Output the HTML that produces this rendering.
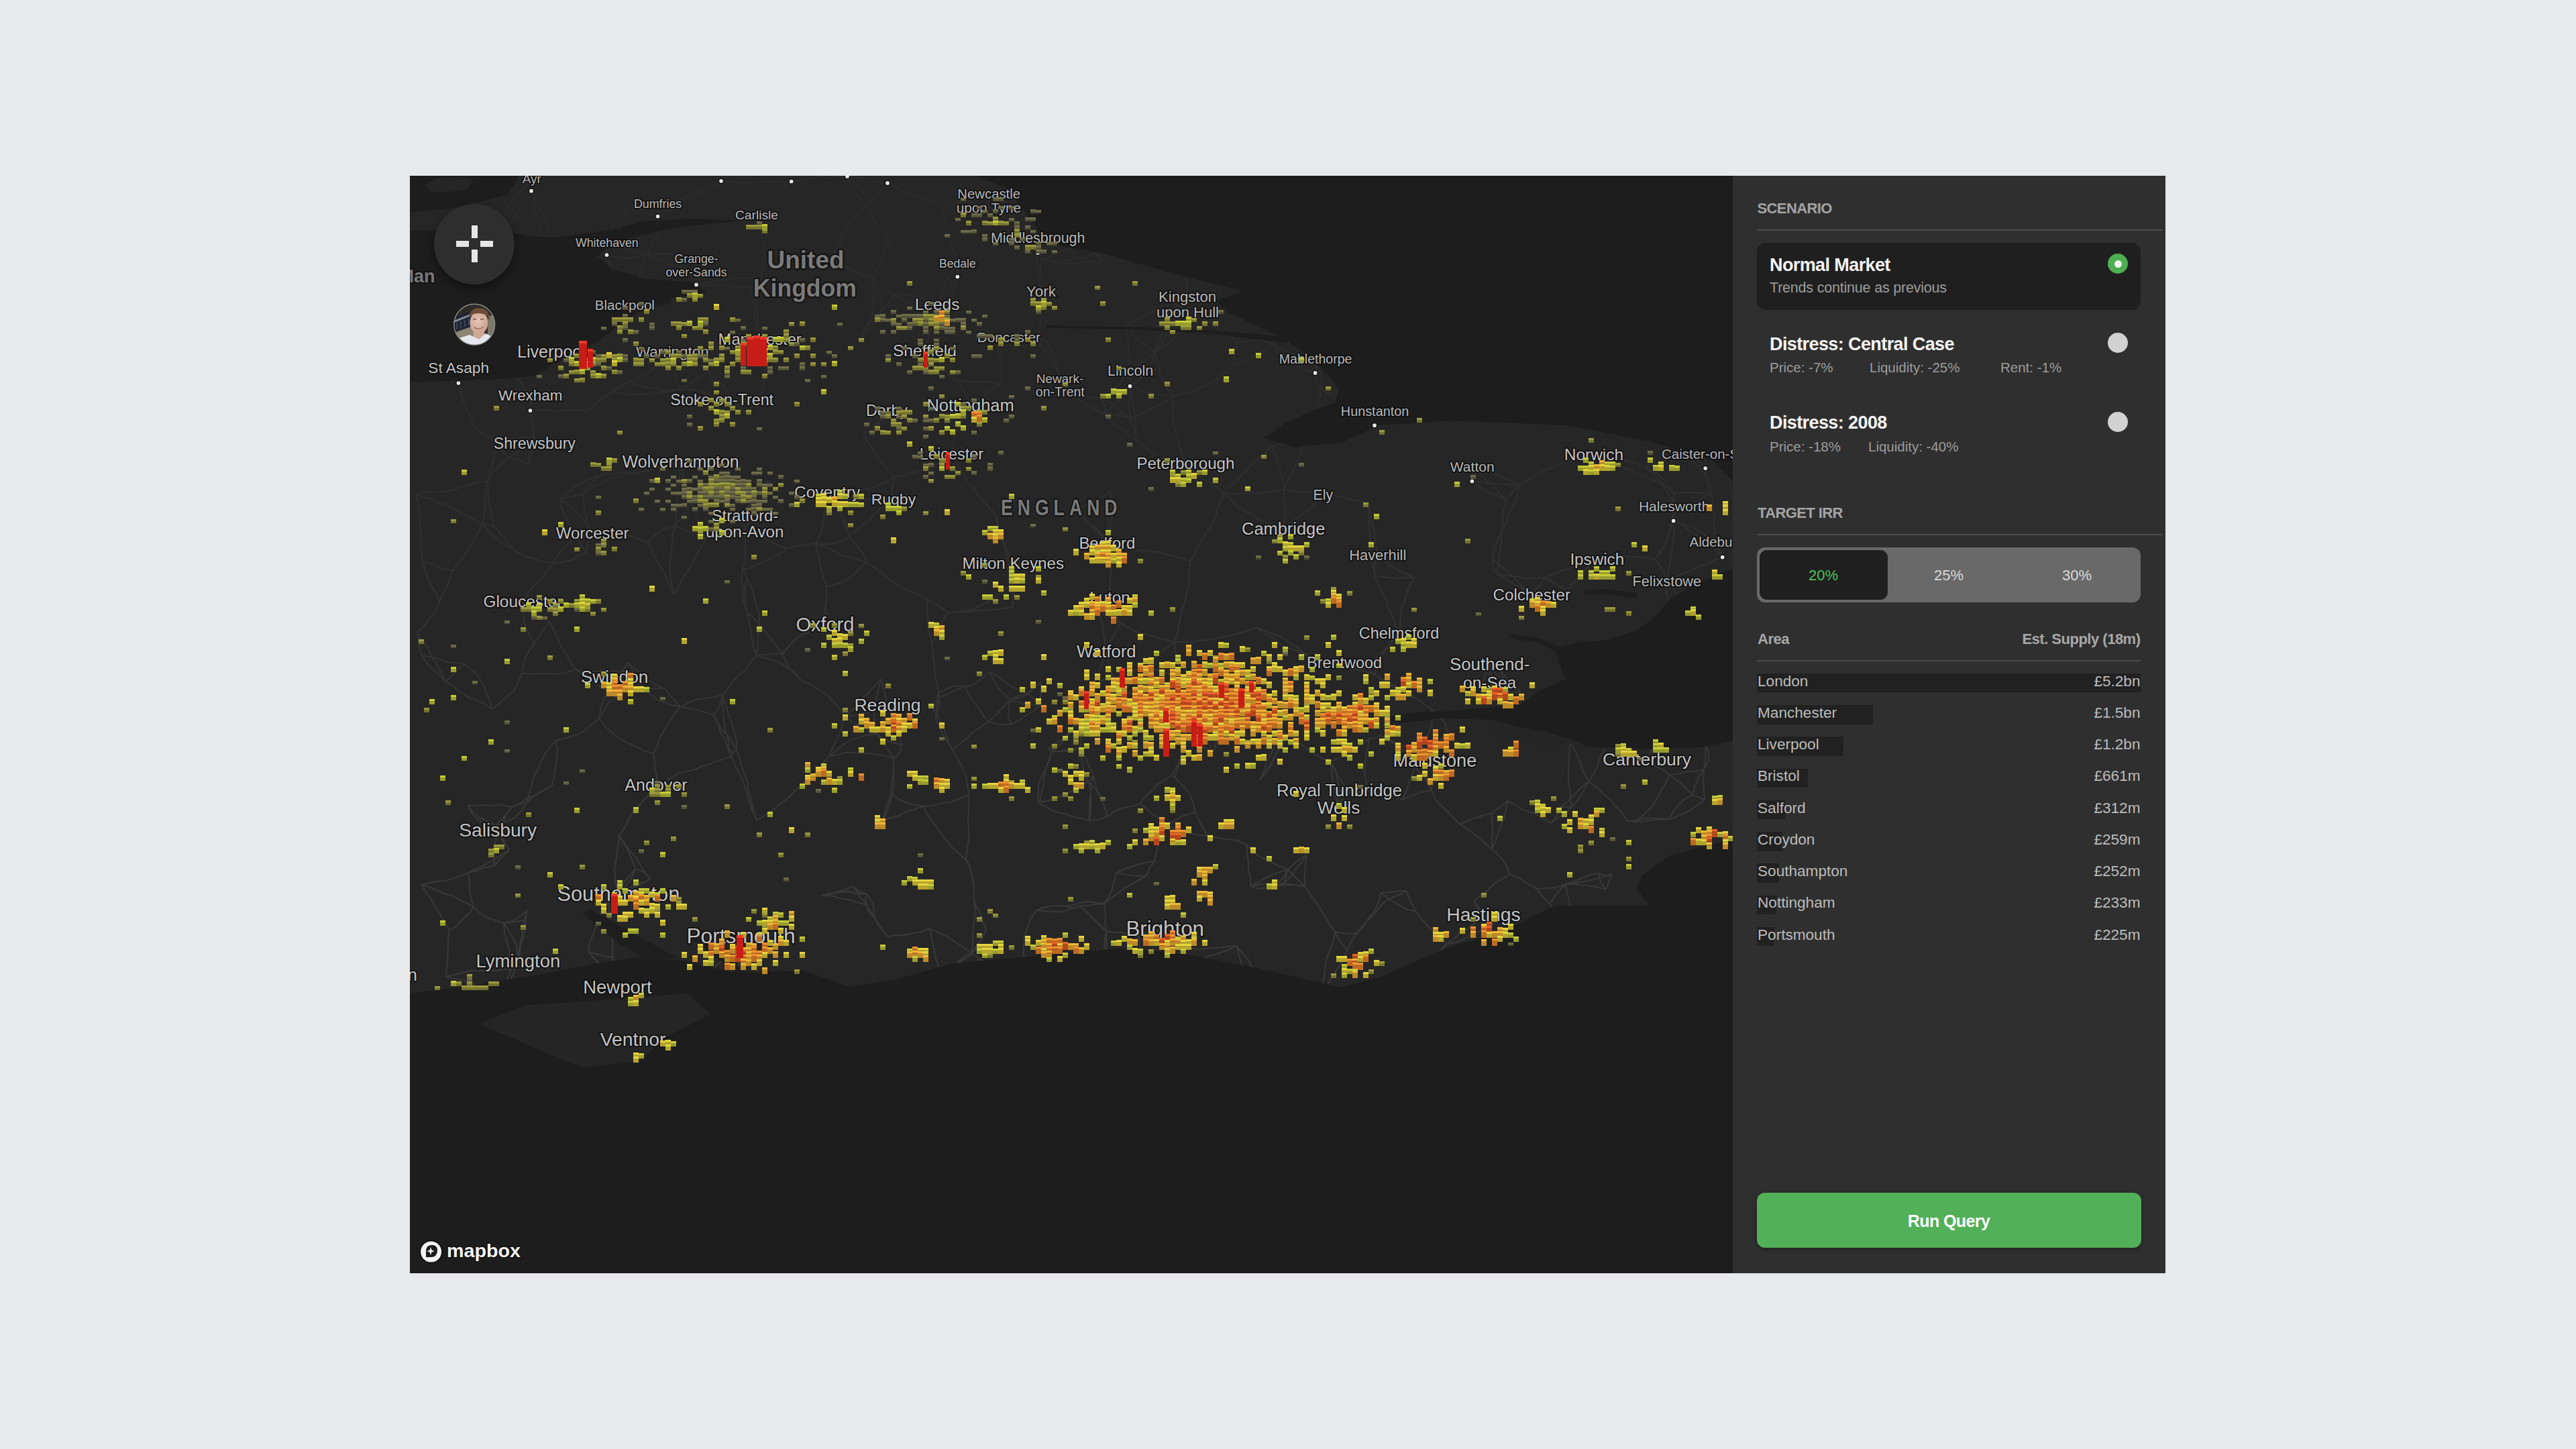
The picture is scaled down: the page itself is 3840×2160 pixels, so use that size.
<!DOCTYPE html>
<html><head><meta charset="utf-8"><title>Scenario map</title><style>
html,body{margin:0;padding:0;}
body{width:3840px;height:2160px;background:#e8e9eb;position:relative;overflow:hidden;font-family:"Liberation Sans",sans-serif;}
.t{position:absolute;white-space:nowrap;}
</style></head><body>
<svg width="3840" height="2160" style="position:absolute;left:0;top:0" font-family="Liberation Sans, sans-serif"><defs><clipPath id="mc"><rect x="611" y="262" width="1972" height="1636"/></clipPath></defs><g clip-path="url(#mc)"><rect x="611" y="262" width="1972" height="1636" fill="#262626"/><linearGradient id="rg" gradientUnits="userSpaceOnUse" x1="0" y1="300" x2="0" y2="1250"><stop offset="0" stop-color="#2a2a2a"/><stop offset="0.45" stop-color="#2e2e2e"/><stop offset="1" stop-color="#383838"/></linearGradient><path d="M793 265L794 275L792 285M793 265L785 274L777 284L768 293L760 302L755 314L750 325L745 336L738 346L733 357L727 368L723 380M793 265L794 278L796 291L796 304L799 317L803 329L807 341L812 353L818 364L823 376M981 302L981 312L981 323M981 302L993 301L1006 300L1018 296L1029 291L1041 286L1053 283L1064 277L1075 270M981 302L966 306L952 309L937 309M981 302L989 310L1000 314M1128 319L1118 312L1110 304L1101 295L1093 286L1084 278L1075 270M1128 319L1137 308L1147 298L1158 289L1168 279L1180 270M1128 319L1130 331L1133 344L1136 356L1139 368L1139 380L1138 393L1135 405L1134 418M905 360L901 370L904 380M905 360L911 345L916 332L926 320L937 309M905 360L916 365L928 368L940 372L952 376L964 380M1038 384L1036 394L1038 404M1038 384L1036 398L1037 411L1038 424M1038 384L1026 382L1014 380L1001 379L989 378L976 379L964 380M1038 404L1040 414L1038 424M1038 404L1025 401L1013 398L1000 395L988 391L976 385L964 380M931 454L926 442L923 429L919 417L916 404L909 392L904 380M931 454L920 463L911 474M931 454L940 443L945 431L950 418L954 405L959 392L964 380M822 525L809 527L796 529L785 535L774 541L765 551M822 525L820 511L819 498L820 484L817 471L816 457M822 525L809 529L797 535L785 540L773 546L760 550M1133 506L1130 493L1129 480L1130 468L1128 455L1128 443L1130 430L1134 418M1133 506L1131 493L1128 480L1124 467L1124 454L1121 441L1118 428M1133 506L1137 519L1140 532L1141 546L1140 560L1139 573L1135 587M1002 524L993 533L983 542L973 550L963 558L951 563L939 569M1002 524L1014 529L1025 534L1036 539L1046 546L1056 552M1002 524L1003 539L1006 553L1008 567L1014 581M684 548L687 559L683 571M684 548L684 560L685 573L688 585L690 597L695 609L702 620M684 548L670 546L658 543L646 538L634 531L622 525M791 589L791 600L790 612M791 589L781 577L772 565L765 551M791 589L782 580L776 569L767 561L760 550M1076 596L1087 603L1098 610L1111 614M1076 596L1066 582L1062 567L1056 552M1076 596L1064 590L1052 587L1040 582L1027 581L1014 581M1076 596L1091 596L1106 597L1121 592L1135 587M797 661L796 649L794 636L794 624L790 612M797 661L783 667L770 675L757 682M797 661L783 661L769 662L756 663L742 661M797 661L793 676L788 692M797 661L795 657L795 652M1015 689L1001 691L989 696L975 698L963 702L949 705M1015 689L1018 703L1020 718L1025 732L1029 746M1015 689L1014 702L1013 716L1011 730L1010 743L1009 757L1008 770L1006 784M1474 288L1474 298L1474 309M1474 288L1486 293L1497 300L1508 306L1520 312L1530 320M1474 288L1483 296L1493 303L1500 313L1507 323M1474 288L1463 293L1452 297L1440 302L1428 303L1416 305L1404 304M1474 309L1487 314L1501 318L1516 318L1530 320M1474 309L1491 316L1507 323M1474 309L1460 306L1446 302L1432 299L1418 300L1404 304M1547 354L1547 365L1547 377M1547 354L1544 342L1539 329L1530 320M1547 354L1549 371L1552 387M1427 391L1419 403L1413 415L1407 428L1401 441L1397 454M1427 391L1427 402L1427 413M1427 391L1423 379L1418 367L1414 355L1412 342L1408 329L1405 317L1404 304M1552 434L1550 419L1547 405L1546 391L1547 377M1552 434L1552 446L1552 458L1550 471L1551 483L1549 495L1547 508M1552 434L1550 418L1551 403L1552 387M1397 454L1393 468L1389 482L1386 495L1381 509L1378 523M1397 454L1404 443L1412 433L1419 422L1427 413M1397 454L1393 471L1391 488M1397 454L1385 448L1372 444L1360 440L1346 439L1333 439M1770 442L1770 454L1770 465M1770 442L1766 453L1762 465L1756 476L1749 485L1742 495L1735 505L1729 515L1721 524M1770 442L1763 450L1752 453M1770 442L1769 428L1768 415L1768 402L1770 389L1770 375L1771 362L1774 349L1778 336M1770 465L1765 478L1759 490L1753 501L1744 510L1733 518L1721 524M1770 465L1762 458L1752 453M1770 465L1782 470L1793 476L1805 481L1814 489L1825 495L1835 502L1844 511M1504 502L1519 501L1533 503L1548 506L1562 508M1504 502L1494 504L1484 504M1504 502L1519 501L1533 503L1547 508M1378 523L1388 531L1398 540L1407 550L1416 559L1426 568M1378 523L1383 511L1385 499L1391 488M1961 534L1961 545L1961 556M1961 534L1967 549L1969 565L1970 581M1961 534L1948 533L1935 528L1922 526L1910 521L1898 514M1961 534L1969 523L1977 512L1986 501L1992 489L1998 477M1961 534L1953 523L1943 513L1937 501L1931 489L1925 477L1918 465M1685 552L1685 564L1684 576M1685 552L1698 544L1710 535L1721 524M1685 552L1677 561L1670 571L1661 579L1652 587L1641 593M1685 552L1683 539L1683 525L1682 512L1681 498L1678 485M1580 563L1581 573L1580 583M1580 563L1576 549L1572 535L1566 522L1562 508M1580 563L1575 551L1568 540L1563 528L1554 518L1547 508M1580 583L1592 587L1603 592L1613 599L1624 606L1635 611L1646 617M1580 583L1592 587L1604 589L1616 592L1628 593L1641 593M1447 605L1440 616L1433 627L1428 639L1423 651L1420 664L1418 677M1447 605L1441 592L1435 579L1426 568M1447 605L1458 597L1468 588L1479 581L1491 574M1322 612L1314 622L1307 632L1298 641L1287 647M1322 612L1319 619L1317 626M1322 612L1311 616L1300 616M1418 677L1408 686L1396 692L1385 697L1372 701L1359 705L1347 709L1334 711M1418 677L1425 687L1431 697L1437 708L1443 719L1452 727L1458 738L1465 747L1474 756L1483 765M1767 691L1754 689L1740 686L1727 682L1716 674L1705 665L1694 657M1767 691L1778 701L1788 711L1800 718L1812 725L1824 734M1767 691L1763 679L1759 667L1755 655L1752 642L1749 630L1748 617L1749 604L1751 590M2050 612L2049 623L2049 634M2050 612L2042 613L2035 618M2050 612L2038 607L2027 601L2015 599L2004 595L1992 590L1981 585L1970 581M2376 678L2387 683L2399 688L2410 691L2421 698L2433 701L2443 708L2455 712L2466 716L2477 722L2487 729L2497 736M2376 678L2363 681L2350 684L2337 688L2324 691L2312 697L2300 702L2289 709L2277 715L2266 723M2376 678L2389 681L2402 682L2415 684L2427 688L2440 691L2452 696M2517 676L2531 686L2542 698M2517 676L2522 664L2528 653L2533 642M2517 676L2524 687L2532 697L2541 706M2517 676L2504 681L2491 684L2478 689L2465 692L2452 696M2195 695L2197 706L2194 717M2195 695L2205 705L2215 715L2226 724L2235 735L2245 745M2195 695L2207 698L2220 702L2231 708L2243 713L2255 718L2266 723M1972 737L1963 747L1955 757L1944 765L1934 772L1923 780L1913 789M1972 737L1986 738L2000 741L2014 745L2028 747L2041 753M1972 737L1958 734L1943 733L1928 732L1914 729M2496 754L2495 765L2495 776M2496 754L2496 745L2497 736M2496 754L2494 766L2492 778L2489 790L2486 802L2481 813L2474 824L2467 834M2496 754L2491 742L2484 732L2479 721L2470 713L2461 704L2452 696M2496 754L2511 753L2525 750L2538 743L2550 735M1913 789L1901 783L1888 779L1876 774L1865 767L1853 761L1843 753L1833 743L1824 734M1913 789L1914 777L1916 765L1916 753L1914 741L1914 729M2559 807L2546 800L2534 793L2522 785L2508 781L2495 776M2559 807L2562 819L2568 831M2559 807L2556 795L2555 783L2555 770L2554 758L2553 746L2550 735M2054 827L2049 843L2050 859M2054 827L2052 815L2050 803L2048 790L2045 778L2043 765L2041 753M2054 827L2064 836L2074 844L2085 850L2097 856L2109 861M2381 834L2368 838L2355 843L2342 847L2328 850L2316 856L2303 861M2381 834L2371 842L2361 852L2352 862L2343 871L2336 882M2381 834L2393 831L2405 828L2418 828L2430 830L2442 830L2454 831L2467 834M2485 866L2487 853L2489 840L2491 828L2493 815L2495 802L2495 789L2495 776M2485 866L2497 861L2508 855L2520 851L2532 845L2544 841L2556 835L2568 831M2485 866L2484 878L2486 891L2488 903L2489 916L2492 928M2485 866L2493 876L2500 886L2506 897L2512 908L2517 919L2521 931L2523 944L2524 956M2485 866L2481 854L2474 844L2467 834M2283 887L2294 874L2303 861M2283 887L2296 883L2309 882L2323 883L2336 882M2283 887L2273 880L2263 874L2252 868L2242 861L2231 856M2283 887L2273 878L2264 869L2255 859L2245 850L2235 842L2225 833M2086 944L2080 932L2076 919L2070 907L2067 895L2060 883L2055 871L2050 859M2086 944L2087 932L2088 919L2089 907L2094 895L2097 883L2102 872L2109 861M2086 944L2077 954L2069 964L2060 973L2050 982L2041 992L2031 1000M2086 944L2075 954L2068 966L2059 978L2053 990L2049 1005M2004 988L1991 987L1979 984L1966 984L1954 985M2004 988L1986 990L1969 983M2004 988L2016 996L2031 1000M2004 988L2016 990L2028 992L2039 997L2049 1005M2221 991L2220 1005L2221 1018M2221 991L2224 991L2225 989M2221 991L2214 1007L2207 1023M2221 991L2230 1005L2243 1015M2221 1018L2232 1024L2243 1029L2255 1032L2267 1032M2221 1018L2223 1004L2225 989M2221 1018L2214 1020L2207 1023M2221 1018L2232 1017L2243 1015M2139 1135L2130 1124L2119 1116M2139 1135L2131 1140L2122 1141M2139 1135L2124 1141L2109 1143M2139 1135L2143 1120L2148 1105L2158 1093M2139 1135L2137 1150L2135 1164L2134 1178M2455 1133L2461 1121L2468 1110L2472 1098L2477 1086L2481 1073L2483 1060M2455 1133L2444 1125L2433 1118L2423 1110L2410 1106L2398 1102M2455 1133L2466 1141L2478 1147L2489 1155M1997 1179L1995 1192L1996 1205M1997 1179L1994 1164L1991 1148L1983 1135M1997 1179L2001 1176L2005 1172M1997 1179L2011 1179L2025 1180L2039 1179M1997 1179L1994 1182L1991 1185M1996 1205L2002 1189L2005 1172M1996 1205L1993 1195L1991 1185M2212 1365L2219 1371L2226 1378M2212 1365L2201 1374L2190 1383L2178 1390L2168 1399L2157 1407M2212 1365L2205 1354L2197 1344M1737 1387L1724 1390L1710 1393L1697 1395M1737 1387L1743 1398L1752 1408L1763 1414M1737 1387L1730 1387L1724 1386M883 795L873 798L863 801M883 795L877 808L874 823M883 795L897 794L911 797L925 798L939 799L952 803L965 809M883 795L877 784L874 772L871 760L870 748L869 736M883 795L876 783L867 772L858 762L847 753L835 745M1110 769L1109 781L1110 793M1110 769L1119 759L1127 749L1135 738L1143 728L1150 717M1110 769L1115 757L1119 744L1127 735L1136 726L1145 716M1110 769L1116 758L1121 747M1110 793L1095 793L1080 795L1066 799L1052 804M1110 793L1111 807L1111 821L1110 835L1107 849M1110 793L1116 778L1118 762L1121 747M1110 793L1123 797L1136 801L1148 807L1160 813L1173 818M1233 734L1244 736L1255 736M1233 734L1242 743L1248 754L1253 766L1257 778L1262 789L1266 801M1233 734L1232 747L1229 759L1228 772L1226 785L1222 798L1216 810M1332 744L1319 745L1306 747L1293 744L1280 744L1267 740L1255 736M1332 744L1329 727L1334 711M1332 744L1322 751L1312 758L1303 767L1294 777L1284 784L1275 792L1266 801M1650 810L1654 797L1655 784L1657 771L1658 758L1657 745L1655 732M1650 810L1652 812L1653 815M1650 810L1643 797L1633 787L1621 779L1612 769L1600 760M1510 840L1510 855L1508 870M1510 840L1505 828L1499 816L1495 803L1491 790L1485 778L1483 765M1510 840L1511 853L1511 866L1510 879L1511 892L1509 905M1654 891L1659 904L1663 917L1670 929M1654 891L1642 898L1631 905M1654 891L1654 878L1655 866L1656 853L1655 840L1653 827L1653 815M1649 972L1655 957L1663 943L1670 929M1649 972L1647 958L1645 944L1643 930L1638 917L1631 905M1649 972L1645 984L1640 997L1634 1010L1631 1023M1649 972L1652 984L1655 997L1659 1010M780 897L787 907L797 915L809 920L819 927M780 897L786 886L793 876L802 867L810 859L817 848L825 839M780 897L780 910L781 924L784 936L790 948L796 960M1230 933L1218 937L1206 942L1194 947L1184 955L1175 965L1166 974M1230 933L1232 918L1231 904L1232 889L1232 875M1230 933L1228 927L1227 921M916 1010L916 1025L918 1040M916 1010L901 1008L887 1006L873 1002L858 998M916 1010L927 1000L936 988M916 1010L923 1006L929 1001M916 1010L910 1022L905 1034L899 1045L895 1058L893 1071M1323 1052L1327 1063L1331 1075L1336 1086L1341 1098L1344 1110M1323 1052L1319 1066L1314 1080L1307 1094M1323 1052L1320 1039L1317 1025L1313 1012M1323 1052L1311 1058L1298 1060L1285 1064L1272 1067L1259 1067M978 1171L979 1159L977 1147L976 1135L974 1123M978 1171L989 1166L1000 1160L1010 1153L1022 1150L1034 1148L1045 1143L1057 1139L1068 1135L1080 1131L1091 1128M978 1171L970 1182L961 1191L952 1201L943 1211L937 1222L931 1234L923 1245M742 1239L729 1232L716 1224L705 1215L697 1201M742 1239L742 1234L739 1231M742 1239L739 1252L736 1265L737 1278L736 1291M742 1239L749 1227L755 1214L763 1203M742 1239L749 1253L759 1267M922 1335L931 1322L941 1310L947 1295M922 1335L934 1330L946 1323L958 1316L970 1310M922 1335L913 1337L907 1344M922 1335L919 1322L917 1309L916 1296L918 1283L920 1270L922 1257L923 1245M1104 1398L1097 1409L1089 1420L1080 1430L1069 1438L1061 1449L1050 1457M1104 1398L1111 1409L1116 1420L1121 1431L1127 1442L1132 1454L1136 1466M1104 1398L1103 1412L1102 1426L1101 1441L1101 1455L1099 1469M772 1434L767 1447L761 1461L755 1475L746 1487M772 1434L768 1440L762 1445M772 1434L775 1421L776 1408L781 1396L782 1383L784 1371M772 1434L771 1421L770 1408L764 1398L758 1387L751 1376M772 1434L773 1421L775 1408L778 1395L779 1382L782 1370L786 1357M920 1473L922 1487L924 1500L929 1513L934 1526L939 1538L944 1551M920 1473L913 1461L904 1451L896 1439L886 1429L877 1419M920 1473L916 1458L913 1443L913 1427M944 1551L955 1544L965 1536L976 1529L985 1520L997 1514L1005 1504L1016 1497L1024 1486L1034 1478L1042 1468L1050 1457M944 1551L939 1539L933 1527L928 1515L923 1503L920 1491L919 1478L919 1465L917 1452L914 1440L913 1427M792 285L785 296L779 307L771 318L764 329L755 339L749 350L740 360L732 370L723 380M792 285L799 295L804 306L809 317L814 328L818 340L819 352L822 364L823 376M981 323L966 319L951 316L937 309M981 323L991 320L1000 314M981 323L980 338L978 353L972 366L964 380M904 380L909 368L914 356L920 344L926 333L932 321L937 309M904 380L891 379L877 380L864 379L850 378L837 377L823 376M904 380L908 393L911 407L912 420L911 434L912 447L913 461L911 474M904 380L919 383L934 385L949 383L964 380M1038 424L1052 422L1065 419L1079 416L1092 415L1106 415L1120 415L1134 418M1038 424L1051 425L1065 426L1078 425L1091 427L1104 428L1118 428M683 571L686 584L690 597L695 609L702 620M683 571L674 563L665 554L656 544L645 537L634 531L622 525M790 612L803 612L815 611L827 613L840 612L852 611L864 611L877 613M790 612L792 625L796 638L795 652M1427 413L1424 424L1421 436L1418 448L1412 459L1406 469L1399 479L1391 488M1547 377L1551 381L1552 387M1961 556L1963 569L1970 581M1961 556L1948 552L1937 547L1926 540L1916 533L1906 525L1898 514M1961 556L1965 544L1970 533L1976 522L1980 510L1986 499L1993 488L1998 477M1684 576L1688 589L1688 603L1691 616L1693 629L1693 643L1694 657M1684 576L1685 588L1683 600L1683 612L1685 624M1684 576L1676 587L1668 598L1657 608L1646 617M1684 576L1695 568L1705 559L1713 550L1718 538L1721 524M1684 576L1671 584L1656 588L1641 593M1684 576L1697 581L1711 585L1724 588L1738 590L1751 590M2049 634L2041 627L2035 618M2049 634L2037 627L2025 621L2013 615L2003 605L1992 596L1981 588L1970 581M2542 698L2542 684L2542 669L2539 655L2533 642M2542 698L2542 702L2541 706M2542 698L2545 710L2549 722L2550 735M2194 717L2206 726L2218 734L2232 739L2245 745M2194 717L2206 718L2218 721L2230 721L2242 721L2254 723L2266 723M2495 776L2507 782L2517 790L2528 797L2539 804L2549 812L2559 821L2568 831M2495 776L2492 763L2492 749L2497 736M2495 776L2490 789L2486 801L2481 813L2475 824L2467 834M1075 270L1088 271L1101 272L1114 272L1127 273L1140 271L1154 272L1167 271L1180 270M1075 270L1064 276L1053 282L1043 289L1032 296L1022 303L1011 309L1000 314M1180 270L1194 269L1207 265L1221 263L1235 264L1249 263L1263 263M1323 273L1311 271L1299 269L1287 265L1275 265L1263 263M1323 273L1314 282L1305 293L1295 301M1323 273L1334 279L1345 284L1357 288L1368 293L1379 298L1392 301L1404 304M1323 273L1312 284L1301 295L1291 307M1263 263L1273 271L1282 280L1289 290L1295 301M1263 263L1268 275L1274 287L1282 298L1291 307M1255 736L1269 734L1282 732L1296 728L1309 724L1322 718L1334 711M1255 736L1255 749L1255 762L1260 775L1262 788L1266 801M1896 665L1908 662L1921 659L1934 655L1945 649M1896 665L1887 674L1877 682L1868 690L1859 699L1851 708L1842 717L1833 725L1824 734M1896 665L1901 677L1905 690L1909 703L1912 715L1914 729M1670 929L1681 935L1692 941L1704 945L1716 948L1727 951L1739 954L1751 957M1670 929L1657 920L1643 914L1631 905M734 1057L729 1044L725 1032L720 1020L713 1008L703 999L693 990M734 1057L722 1049L710 1044L697 1039L686 1031L675 1023L664 1016M734 1057L745 1048L755 1039L766 1030L772 1018L778 1004M693 990L683 998L674 1007L664 1016M693 990L680 988L667 987L654 982L641 979L628 977M757 682L748 672L742 661M757 682L773 686L788 692M757 682L746 693L735 704L727 717M1452 1344L1452 1331L1451 1318L1449 1306L1446 1293L1440 1281M1452 1344L1459 1357L1464 1371L1470 1385M1452 1344L1454 1357L1453 1370L1451 1382L1450 1395L1450 1408L1448 1420M863 801L866 813L874 823M863 801L851 808L840 816L832 827L825 839M863 801L855 791L848 780L843 769L837 758L835 745M1850 1453L1861 1462L1870 1472L1880 1482L1888 1494M1850 1453L1851 1438L1847 1424L1843 1410M1850 1453L1837 1450L1823 1448L1810 1444L1797 1443L1784 1440L1771 1436M1751 957L1764 957L1776 957L1788 955L1801 954L1813 952L1825 949L1837 947L1849 943L1861 940L1872 935M1751 957L1752 970L1755 984L1757 997L1757 1011M1751 957L1755 945L1757 933L1759 921L1762 909L1766 897L1769 885L1772 874L1772 861L1773 849L1775 836M1751 957L1739 966L1727 975L1716 985L1706 996M2533 642L2538 654L2542 667L2542 680L2542 693L2541 706M2303 861L2314 867L2326 874L2336 882M2303 861L2288 862L2274 862L2260 859L2245 858L2231 856M903 706L918 706L934 704L949 705M903 706L889 713L878 724L869 736M903 706L890 710L878 715L866 721L854 727L844 736L835 745M1225 1335L1237 1333L1249 1329L1261 1326L1272 1321M1225 1335L1239 1335L1252 1339L1265 1341L1278 1345L1292 1349M1225 1335L1238 1332L1252 1330L1265 1329L1279 1332L1293 1333M974 1123L980 1111L984 1099L991 1087L998 1076L1005 1065L1014 1054M974 1123L962 1120L951 1114L940 1109L929 1104L919 1098L910 1090L901 1081L893 1071M1872 935L1885 940L1898 945L1911 950L1922 958L1934 965L1944 974L1954 985M1872 935L1884 943L1895 950L1906 958L1918 965L1931 969L1943 974L1956 979L1969 983M1694 657L1690 640L1685 624M1694 657L1684 649L1674 641L1664 635L1654 626L1646 617M737 785L746 795L755 805L762 817M737 785L728 782L719 782M737 785L733 772L731 758L728 745L728 731L727 717M1954 985L1961 983L1969 983M1954 985L1967 987L1979 991L1992 993L2005 996L2018 998L2031 1000M1236 1127L1228 1136L1220 1146L1212 1155L1203 1163L1195 1171L1185 1179L1177 1188L1167 1195L1158 1203L1148 1210L1138 1217L1128 1223M1236 1127L1246 1119L1257 1110L1268 1103L1281 1099L1293 1096L1307 1094M1236 1127L1241 1115L1247 1103L1252 1092L1256 1079L1259 1067M1236 1127L1248 1125L1260 1122L1272 1122L1284 1123L1296 1123L1309 1125L1321 1127L1333 1130M1508 870L1506 858L1505 846L1502 834L1500 822L1496 811L1492 800L1490 788L1487 776L1483 765M1508 870L1510 887L1509 905M1508 870L1498 879L1487 887L1477 895L1465 901L1453 907L1441 910L1427 912L1413 913M2177 1229L2189 1237L2201 1246L2213 1256L2224 1266M2177 1229L2188 1223L2200 1219L2212 1215L2224 1212M2177 1229L2167 1220L2158 1210L2148 1201L2139 1191L2134 1178M1098 1117L1098 1103L1094 1089L1090 1076L1085 1063L1082 1050L1077 1036M1098 1117L1091 1107L1085 1097L1076 1088L1070 1077L1064 1066M1098 1117L1102 1129L1105 1141L1109 1152L1114 1164L1115 1176L1119 1188L1121 1200L1124 1212L1128 1223M1098 1117L1093 1121L1091 1128M1649 1388L1661 1390L1673 1390L1685 1393L1697 1395M1649 1388L1650 1401L1649 1414L1652 1427L1652 1440M1649 1388L1639 1378L1630 1369L1620 1359L1609 1351M1649 1388L1647 1374L1648 1361L1646 1347M1649 1388L1647 1399L1646 1412L1647 1424L1645 1436L1642 1447M2050 859L2047 846L2045 833L2042 820L2042 806L2042 793L2041 780L2040 766L2041 753M2050 859L2064 860L2079 862L2094 861L2109 861M2541 706L2545 721L2550 735M1440 1281L1430 1273L1420 1264L1412 1254L1404 1244L1397 1234L1389 1224L1382 1213L1376 1202M1440 1281L1441 1269L1443 1257L1445 1245L1444 1233L1443 1221L1444 1209L1444 1197L1445 1185M918 1040L930 1032L943 1027L958 1026M918 1040L909 1032L898 1026L888 1019L878 1012L868 1005L858 998M918 1040L918 1026L920 1013L929 1001M918 1040L907 1048L900 1060L893 1071M697 1201L706 1211L716 1219L728 1225L739 1231M697 1201L710 1201L723 1200L737 1201L750 1200L763 1203M2119 1116L2124 1105L2129 1093L2134 1082L2135 1070L2134 1057M2119 1116L2106 1114L2092 1112L2080 1110L2068 1103L2057 1096M2119 1116L2120 1129L2122 1141M2119 1116L2114 1130L2109 1143M2119 1116L2133 1111L2146 1103L2158 1093M1983 1135L1996 1130L2009 1126L2020 1118L2030 1109L2041 1101M1983 1135L1989 1148L1997 1160L2005 1172M1983 1135L1985 1148L1986 1160L1989 1173L1991 1185M1983 1135L1971 1131L1960 1125L1951 1118L1941 1111L1931 1103L1921 1096M1757 1011L1745 1005L1732 1000L1719 998L1706 996M1757 1011L1747 1018L1738 1026L1727 1032L1716 1038L1705 1043M2266 1450L2271 1465L2278 1479L2284 1494M2266 1450L2257 1460L2247 1470L2235 1476L2224 1483L2211 1486M2266 1450L2278 1456L2289 1462L2301 1465L2313 1467L2325 1469L2338 1470L2350 1471M2266 1450L2253 1457L2239 1464L2225 1469M1549 1198L1561 1204L1573 1210L1586 1213L1598 1217L1611 1220L1624 1223M1549 1198L1552 1185L1555 1172L1556 1159L1559 1146L1564 1134L1568 1121M1549 1198L1549 1195L1547 1196M739 1231L753 1225L767 1219L778 1208L786 1195M739 1231L747 1222L756 1213L763 1203M739 1231L746 1243L752 1255L759 1267M1888 1494L1885 1480L1880 1467L1874 1455L1867 1444L1861 1431L1852 1421L1843 1410M1888 1494L1901 1491L1915 1488L1928 1484L1941 1484L1954 1483L1968 1484M2231 856L2233 843L2235 830L2237 817L2238 803L2239 790M2231 856L2225 845L2225 833M1376 1202L1391 1201L1404 1197L1418 1196L1431 1190L1445 1185M1376 1202L1364 1200L1352 1197L1341 1192L1330 1185M1376 1202L1364 1206L1352 1210L1340 1216L1328 1219L1316 1223M664 1016L655 1006L645 997L636 988L628 977M664 1016L658 1003L651 991L644 979L638 966L629 955L622 943M949 705L937 706L925 710L912 712L901 717L891 723L879 728L869 736M736 1291L723 1293L710 1298L698 1301M736 1291L747 1279L759 1267M874 823L862 829L851 835L838 838L825 839M1386 1384L1374 1389L1361 1391L1349 1394L1336 1394L1323 1396M1386 1384L1389 1398L1392 1412L1394 1426L1399 1440L1407 1452M1386 1384L1399 1390L1412 1396L1424 1404L1436 1412L1448 1420M778 1004L791 1005L805 1004L818 1004L832 1005L845 1002L858 998M778 1004L780 992L783 980L789 970L796 960M1697 1395L1699 1408L1700 1421L1704 1434M1697 1395L1711 1390L1724 1386M2226 1378L2215 1384L2203 1389L2192 1394L2181 1401L2169 1405L2157 1407M2226 1378L2215 1367L2205 1357L2197 1344M1166 974L1157 963L1149 952L1140 941L1132 930M1166 974L1153 975L1141 976L1128 977M1166 974L1171 985L1176 996L1186 1004L1194 1014M1166 974L1175 964L1184 954L1195 946L1206 938L1216 929L1227 921M1323 1396L1314 1385L1307 1373L1299 1361L1292 1349M1323 1396L1312 1383L1303 1368M2497 736L2489 727L2482 717L2473 708L2462 702L2452 696M2497 736L2510 734L2524 734L2537 735L2550 735M965 809L977 797L990 788L1006 784M965 809L971 820L977 831L983 842L990 852L994 864L999 875L1004 887M1077 1036L1073 1052L1064 1066M1077 1036L1077 1050L1078 1063L1079 1076L1081 1089L1085 1102L1087 1115L1091 1128M1077 1036L1085 1026L1093 1015L1102 1006L1112 998L1119 986L1128 977M1077 1036L1064 1039L1051 1041L1038 1043L1026 1048L1014 1054M1775 836L1781 825L1786 814L1793 803L1800 792L1807 782L1812 770L1815 758L1820 746L1824 734M1775 836L1763 833L1751 829L1739 826L1727 823L1714 821L1702 821L1690 820L1677 818L1665 815L1653 815M628 977L624 960L622 943M1344 1110L1330 1107L1318 1102L1307 1094M1344 1110L1341 1122L1333 1130M2488 1221L2500 1217L2511 1212L2522 1206L2532 1199L2541 1192M2488 1221L2494 1210L2502 1200L2511 1191L2523 1185M2488 1221L2472 1220L2457 1219L2441 1222M2488 1221L2476 1222L2463 1222L2451 1224L2438 1225L2425 1223M1630 1156L1627 1169L1626 1183L1624 1196L1624 1210L1624 1223M1630 1156L1624 1143L1618 1129L1610 1117M1630 1156L1633 1169L1637 1181L1643 1192L1647 1204L1651 1217M1630 1156L1626 1160L1622 1165M1945 649L1943 661L1940 673L1936 685L1930 695L1925 707L1920 718L1914 729M1945 649L1953 636L1959 623L1962 609L1967 595L1970 581M2383 1302L2370 1304L2358 1309L2346 1314L2334 1318M2383 1302L2393 1305L2403 1304M2383 1302L2386 1315L2394 1326M2334 1318L2320 1323L2306 1324L2291 1325M2334 1318L2348 1316L2362 1314L2376 1311L2389 1307L2403 1304M2334 1318L2349 1318L2364 1320L2379 1322L2394 1326M2334 1318L2336 1330L2339 1342L2341 1354L2345 1366L2344 1378L2346 1390L2348 1402M2334 1318L2325 1327L2317 1337L2310 1347M1389 959L1396 948L1401 936L1406 924L1413 913M1389 959L1386 946L1383 933L1383 920L1382 907L1383 894M1389 959L1390 971L1392 984L1393 996L1394 1009L1397 1021L1399 1033M823 1171L810 1178L798 1185L786 1195M823 1171L826 1158L828 1144L830 1131L831 1118L828 1104M823 1171L811 1178L800 1185L787 1189L776 1197L763 1203M742 661L755 655L768 653L782 652L795 652M742 661L738 675L735 689L730 703L727 717M742 661L729 653L717 645L707 635L702 620M1029 746L1034 758L1039 769L1042 781L1047 793L1052 804M1029 746L1024 760L1015 772L1006 784M1287 647L1293 659L1301 669L1307 681L1316 691L1324 702L1334 711M1287 647L1297 641L1307 633L1317 626M1287 647L1295 632L1300 616M620 736L632 741L643 744L654 750L666 753L676 758L687 764L697 770L708 775L719 782M620 736L634 734L647 733L661 733L674 731L687 726L700 723L713 719L727 717M620 736L623 749L625 761L626 774L626 787L628 799L627 812L629 825L630 838M819 927L826 939L831 951L836 964L844 975L851 987L858 998M819 927L811 938L803 949L796 960M670 1387L668 1401L668 1415L667 1428L666 1442L665 1456M670 1387L663 1376L657 1364L649 1353L643 1341L635 1330L628 1319M670 1387L681 1380L689 1371L699 1362L706 1352M1824 734L1837 736L1850 736L1863 734L1876 736L1888 733L1901 732L1914 729M1114 913L1123 921L1132 930M1114 913L1111 900L1111 888L1110 876L1114 864M1114 913L1117 926L1119 939L1121 952L1123 965L1128 977M1114 913L1109 900L1107 888L1107 875L1105 862L1107 849M2284 1494L2297 1489L2310 1483L2323 1477L2336 1473L2350 1471M2284 1494L2273 1486L2262 1479L2250 1475L2237 1471L2225 1469M1533 1035L1543 1043L1550 1052M1533 1035L1520 1040L1506 1043M1533 1035L1542 1025L1552 1016M1533 1035L1521 1029L1509 1024L1498 1016L1487 1008L1475 1001M788 692L789 678L793 665L795 652M1292 838L1286 824L1276 812L1266 801M1292 838L1281 848L1271 858L1259 866L1246 871L1232 875M1292 838L1279 834L1266 830L1253 827L1241 821L1229 815L1216 810M1292 838L1303 846L1314 853L1324 862L1335 870L1347 877L1359 882L1371 888L1383 894M2245 745L2241 760L2240 775L2239 790M2245 745L2255 734L2266 723M665 1456L677 1459L690 1461L701 1465L712 1471L724 1475L735 1481L746 1487M665 1456L677 1453L689 1450L701 1447L713 1447L725 1447L738 1447L750 1445L762 1445M1655 732L1654 746L1652 759L1651 773L1652 787L1651 801L1653 815M1655 732L1645 740L1634 745L1623 751L1612 756L1600 760M1685 624L1672 620L1659 617L1646 617M1685 624L1674 616L1664 607L1653 599L1641 593M1685 624L1696 619L1707 614L1718 608L1730 603L1741 597L1751 590M1655 1481L1653 1467L1651 1454L1652 1440M1655 1481L1667 1473L1678 1465L1688 1456L1696 1446L1704 1434M1655 1481L1646 1465L1642 1447M2312 1227L2321 1216L2326 1203M2312 1227L2301 1221L2291 1214L2280 1210L2268 1206L2258 1199L2247 1194M2312 1227L2323 1219L2334 1212L2343 1203M1132 930L1132 916L1128 903L1124 889L1120 876L1114 864M1132 930L1130 946L1130 961L1128 977M947 1295L960 1300L970 1310M947 1295L939 1305L931 1314L923 1325L916 1335L907 1344M947 1295L942 1282L937 1269L930 1257L923 1245M1664 1301L1679 1304L1694 1306L1709 1306M1664 1301L1678 1295L1692 1290L1706 1286L1721 1284M1664 1301L1661 1313L1658 1325L1653 1337L1646 1347M1266 801L1254 807L1242 810L1230 812L1216 810M2211 1486L2195 1484L2180 1481L2165 1475M2211 1486L2216 1477L2225 1469M2291 1325L2278 1318L2265 1309L2251 1303M2291 1325L2300 1337L2310 1347M2224 1266L2224 1252L2225 1239L2224 1225L2224 1212M2224 1266L2235 1276L2245 1289L2251 1303M2224 1266L2229 1254L2233 1242L2237 1231L2242 1219L2245 1206L2247 1194M1064 1066L1070 1078L1074 1091L1081 1103L1085 1116L1091 1128M1064 1066L1052 1062L1040 1058L1027 1056L1014 1054M1317 626L1308 621L1300 616M675 851L670 863L666 875L660 886L655 898M675 851L683 840L691 829L698 818L706 806L713 794L719 782M675 851L660 848L645 841L630 838M1128 1223L1123 1211L1118 1200L1115 1187L1111 1175L1107 1163L1101 1151L1095 1140L1091 1128M2495 1003L2496 990L2497 978L2498 965L2495 953L2493 941L2492 928M2495 1003L2501 990L2506 977L2513 966L2524 956M2495 1003L2483 1000L2470 1000L2458 998L2446 997L2433 997L2421 999L2408 999M2495 1003L2491 1017L2487 1031L2483 1045L2483 1060M2495 1003L2483 1001L2471 1002L2459 1003L2447 1004L2435 1007L2423 1007L2411 1010M2495 1003L2502 1013L2508 1023L2514 1034L2517 1046L2521 1058M2457 1489L2443 1487L2430 1484L2417 1484L2403 1482L2390 1478L2377 1474L2364 1472L2350 1471M2457 1489L2454 1479L2455 1468M2457 1489L2452 1477L2448 1465L2445 1453L2444 1441L2444 1428L2445 1415M2492 928L2502 938L2514 946L2524 956M1052 804L1041 797L1029 793L1017 788L1006 784M1052 804L1045 816L1038 828L1032 840L1025 852L1017 863L1011 875L1004 887M1006 784L1003 797L1002 810L1001 822L999 835L999 848L999 861L1002 874L1004 887M1843 1410L1830 1411L1817 1413L1803 1413L1790 1415L1777 1414L1763 1414M1843 1410L1831 1416L1820 1420L1807 1424L1795 1428L1783 1432L1771 1436M2267 1032L2257 1021L2246 1011L2236 999L2225 989M2267 1032L2255 1023L2243 1015M1900 1320L1888 1323L1876 1325L1864 1321M1900 1320L1912 1310L1920 1296M1900 1320L1915 1320L1930 1319L1945 1321M1900 1320L1907 1320L1913 1317M786 1195L789 1182L793 1170L795 1158L802 1147L807 1135L812 1124L820 1114L828 1104M786 1195L775 1199L763 1203M2403 1304L2398 1315L2394 1326M2090 1030L2101 1037L2113 1042L2123 1050L2134 1057M2090 1030L2080 1022L2068 1016L2056 1010L2044 1004L2031 1000M2090 1030L2079 1025L2068 1021L2058 1013L2049 1005M970 1310L957 1316L943 1321L931 1329L918 1336L907 1344M970 1310L961 1300L954 1289L947 1277L938 1267L930 1256L923 1245M1272 1321L1281 1335L1292 1349M1272 1321L1281 1329L1293 1333M1407 1452L1418 1441L1431 1434L1444 1426M1407 1452L1417 1445L1427 1435L1436 1427L1448 1420M869 736L852 740L835 745M907 1344L900 1356L892 1367L889 1380L884 1393L879 1405L877 1419M907 1344L908 1358L908 1372L912 1385L913 1399L913 1413L913 1427M2541 1192L2532 1188L2523 1185M2541 1192L2540 1177L2539 1162L2540 1147M1307 1094L1305 1080L1303 1066L1304 1053L1307 1039L1310 1026L1313 1012M1307 1094L1294 1088L1282 1082L1270 1076L1259 1067M1307 1094L1316 1106L1324 1118L1333 1130M877 613L887 602L898 593L910 584M877 613L886 603L896 596L906 588L917 582L928 576L939 569M2523 1185L2527 1171L2532 1158L2540 1147M2523 1185L2512 1174L2501 1164L2489 1155M1652 1440L1665 1438L1678 1436L1691 1434L1704 1434M1652 1440L1647 1444L1642 1447M1470 1385L1465 1396L1459 1407L1453 1417L1444 1426M1470 1385L1465 1398L1456 1409L1448 1420M2239 790L2246 777L2250 763L2257 751L2262 737L2266 723M2239 790L2233 804L2227 818L2225 833M1114 864L1111 856L1107 849M1128 977L1141 981L1153 984L1165 989L1175 996L1185 1004L1194 1014M877 1419L889 1422L901 1425L913 1427M1313 1012L1305 1022L1296 1031L1287 1040L1279 1050L1270 1059L1259 1067M1763 1414L1765 1426L1771 1436M1763 1414L1749 1407L1736 1397L1724 1386M1763 1414L1754 1423L1746 1432M1444 1426L1446 1423L1448 1420M1603 1079L1610 1068L1618 1058L1623 1047L1627 1035L1631 1023M1603 1079L1597 1091L1588 1102L1578 1112L1568 1121M1603 1079L1608 1091L1612 1103L1610 1117M1603 1079L1595 1090L1586 1101L1573 1108L1562 1116M1646 617L1647 604L1641 593M628 1319L639 1316L651 1314L663 1313L675 1310L686 1306L698 1301M628 1319L639 1322L651 1327L662 1332L674 1335L684 1341L695 1346L706 1352M958 1026L951 1014L944 1001L936 988M958 1026L975 1026L991 1027M958 1026L950 1015L941 1006L929 1001M958 1026L968 1034L978 1042L989 1047L1002 1051L1014 1054M2041 1101L2050 1100L2057 1096M2041 1101L2039 1114L2036 1127L2035 1140L2034 1153L2037 1166L2039 1179M1259 1067L1251 1055L1241 1045L1231 1034L1219 1027L1207 1020L1194 1014M1709 1306L1714 1294L1721 1284M1709 1306L1698 1312L1687 1318L1676 1324L1666 1332L1656 1339L1646 1347M828 1104L840 1101L852 1098L864 1094L874 1087L883 1079L893 1071M1107 849L1119 846L1130 841L1141 836L1152 831L1163 825L1173 818M2134 1057L2144 1067L2154 1078L2158 1093M1721 1284L1724 1270L1727 1256L1732 1243L1738 1230M2408 999L2419 1007L2431 1015L2442 1023L2451 1033L2462 1042L2472 1051L2483 1060M2408 999L2411 1004L2411 1010M1821 1055L1832 1058L1843 1061M1821 1055L1807 1058L1794 1065L1780 1070L1768 1076M1821 1055L1835 1060L1848 1066M1821 1055L1821 1069L1818 1082L1816 1095L1814 1108L1809 1121M1624 1223L1638 1222L1651 1217M1624 1223L1626 1209L1626 1194L1626 1180L1622 1165M1507 1080L1518 1074L1529 1067L1540 1060L1550 1052M1507 1080L1489 1080L1473 1076M1507 1080L1503 1068L1504 1055L1506 1043M1557 1447L1547 1439L1537 1433L1526 1426M1557 1447L1556 1440L1559 1432M1557 1447L1544 1451L1533 1458M1990 1389L1988 1401L1984 1412L1979 1424L1976 1436L1975 1448L1973 1460L1970 1472L1968 1484M1990 1389L2007 1392L2023 1391M1990 1389L1998 1404L2008 1417M1990 1389L1982 1378L1975 1366L1968 1354L1960 1343L1952 1332L1945 1321M1717 1449L1710 1442L1704 1434M1717 1449L1731 1448L1745 1446L1758 1441L1771 1436M1717 1449L1733 1443L1746 1432M858 998L872 1001L886 1001L901 1001L915 1000L929 1001M762 817L774 825L786 830L799 834L812 838L825 839M762 817L749 810L739 802L728 792L719 782M2157 1407L2147 1398L2137 1390L2128 1380L2119 1370L2111 1359M2157 1407L2145 1419L2138 1435M2157 1407L2147 1419L2140 1432L2135 1446M2350 1471L2353 1457L2356 1443L2354 1429L2351 1416L2348 1402M1050 1457L1063 1460L1075 1462L1087 1463L1099 1463L1111 1464L1124 1466L1136 1466M1050 1457L1063 1459L1075 1460L1088 1463L1099 1469M1401 1039L1397 1048L1390 1056M1401 1039L1396 1055L1395 1073M1401 1039L1399 1036L1399 1033M1401 1039L1414 1034L1426 1028L1439 1024M2560 1349L2553 1360L2546 1371L2539 1382L2529 1391L2519 1399M2560 1349L2546 1346L2531 1345L2516 1343L2502 1339M2560 1349L2553 1336L2547 1323L2537 1312L2525 1303M2560 1349L2550 1343L2538 1338L2528 1331M936 988L947 997L957 1006L967 1014L979 1022L991 1027M936 988L934 995L929 1001M2035 618L2026 609L2015 602L2005 595L1993 590L1982 585L1970 581M1706 996L1707 1012L1707 1027L1705 1043M1706 996L1694 999L1683 1004L1671 1008L1659 1010M655 898L649 911L641 922L632 933L622 943M655 898L651 886L644 875L638 863L634 850L630 838M1843 1061L1845 1064L1848 1066M1843 1061L1834 1072L1827 1084L1819 1095L1813 1107L1809 1121M746 1487L750 1472L757 1458L762 1445M2165 1475L2157 1466L2151 1455L2144 1445L2138 1435M2165 1475L2156 1464L2146 1454L2135 1446M2165 1475L2180 1470L2194 1466L2209 1466L2225 1469M698 1301L710 1295L723 1289L735 1282L747 1274L759 1267M698 1301L700 1314L700 1327L702 1339L706 1352M1150 717L1147 718L1145 716M1150 717L1139 725L1129 736L1121 747M1448 1420L1459 1429L1470 1435L1483 1440L1497 1440M1738 1230L1750 1235L1763 1238L1775 1242L1788 1245L1800 1246M1738 1230L1749 1225L1759 1218L1771 1214L1782 1210M1738 1230L1729 1221L1719 1214L1709 1206L1700 1198M1969 983L1982 984L1994 989L2006 993L2019 996L2031 1000M762 1445L760 1431L759 1417L756 1404L752 1390L751 1376M1864 1321L1875 1316L1885 1310L1896 1304L1908 1300L1920 1296M1864 1321L1864 1309L1861 1297L1861 1284L1859 1272L1858 1259M1864 1321L1876 1319L1888 1317L1900 1316L1913 1317M784 1371L768 1374L751 1376M784 1371L784 1364L786 1357M751 1376L764 1373L775 1366L786 1357M751 1376L739 1372L726 1368L715 1361L706 1352M1509 905L1497 907L1485 909L1473 909L1461 910L1449 911L1437 912L1425 912L1413 913M1704 1434L1718 1433L1732 1434L1746 1432M1145 716L1134 724L1127 735L1121 747M1653 815L1646 804L1638 794L1628 786L1619 777L1611 768L1600 760M719 782L721 769L723 756L723 743L725 730L727 717M1232 875L1232 890L1230 906L1227 921M1232 875L1228 862L1224 849L1222 836L1218 823L1216 810M1111 614L1101 605L1091 594L1084 583L1075 572L1066 562L1056 552M1111 614L1121 607L1130 598L1135 587M2057 1096L2070 1103L2083 1109L2092 1120L2100 1131L2109 1143M991 1027L1003 1041L1014 1054M2225 989L2236 1001L2243 1015M1590 1351L1599 1354L1609 1351M1590 1351L1604 1348L1618 1344L1632 1345L1646 1347M1590 1351L1574 1350L1559 1352L1545 1357M1390 1056L1395 1064L1395 1073M1390 1056L1398 1068L1405 1080L1409 1093L1414 1106L1420 1118M1390 1056L1396 1045L1399 1033M1968 1484L1976 1474L1982 1462L1989 1451L1996 1440L2002 1429L2008 1417M1292 1349L1290 1341L1293 1333M1292 1349L1295 1360L1303 1368M2005 1172L2021 1180L2039 1179M2005 1172L1998 1178L1991 1185M1413 913L1399 903L1383 894M2326 1203L2337 1195L2347 1184L2357 1174L2368 1165M2326 1203L2335 1203L2343 1203M1173 818L1187 814L1202 812L1216 810M1136 1466L1124 1469L1111 1468L1099 1469M2526 1092L2515 1085L2503 1078L2493 1069L2483 1060M2526 1092L2534 1076L2537 1059M2526 1092L2535 1104L2543 1117M2526 1092L2524 1075L2521 1058M2526 1092L2531 1093L2532 1097M1550 1052L1535 1050L1520 1048L1506 1043M1550 1052L1551 1040L1552 1028L1552 1016M1768 1076L1766 1091L1766 1105M1768 1076L1777 1084L1788 1091L1796 1100L1803 1110L1809 1121M2091 1192L2079 1187L2065 1184L2053 1181L2039 1179M2091 1192L2096 1180L2100 1167L2105 1155L2109 1143M2091 1192L2105 1186L2119 1181L2134 1178M2023 1391L2033 1380L2040 1369L2049 1358L2055 1345L2058 1331M2023 1391L2014 1403L2008 1417M2023 1391L2030 1381L2039 1372L2048 1364L2055 1354L2063 1345L2073 1339L2085 1334L2096 1328M2039 1179L2027 1181L2015 1182L2003 1183L1991 1185M2368 1165L2376 1153L2382 1140L2386 1127L2393 1115L2398 1102M2368 1165L2379 1173L2389 1183L2400 1191L2408 1202L2418 1212L2425 1223M2368 1165L2362 1154L2357 1142L2353 1130L2348 1119L2341 1108M2368 1165L2361 1178L2353 1191L2343 1203M2058 1331L2070 1340L2083 1348L2096 1355L2111 1359M2058 1331L2071 1330L2084 1328L2096 1328M1609 1351L1621 1350L1633 1348L1646 1347M1609 1351L1596 1355L1583 1359L1571 1359L1558 1358L1545 1357M2197 1344L2207 1335L2218 1327L2228 1317L2239 1310L2251 1303M1426 568L1439 568L1452 569L1465 569L1478 570L1491 574M1562 508L1555 506L1547 508M937 309L950 311L962 313L975 313L987 315L1000 314M804 408L791 406L780 402L769 397L756 395L744 392L733 387L723 380M804 408L811 398L818 388L823 376M804 408L807 420L810 433L812 445L816 457M804 408L810 407L814 403M765 551L763 549L760 550M1391 488L1383 478L1373 470L1364 461L1355 452L1344 446L1333 439M1484 504L1497 506L1509 510L1522 510L1535 510L1547 508M1484 504L1488 518L1491 532L1492 546L1493 560L1491 574M1295 301L1284 312L1273 323L1264 336M1295 301L1292 303L1291 307M1295 301L1298 314L1302 326L1309 337L1317 347L1325 357M1721 524L1709 516L1697 508L1688 496L1678 485M1721 524L1724 536L1727 548L1730 560L1735 571L1742 581L1751 590M1721 524L1725 512L1731 501L1736 488L1742 477L1747 465L1752 453M1314 461L1312 445L1306 430L1302 415M1314 461L1305 471L1297 482L1288 493L1281 505M1314 461L1325 451L1333 439M1530 320L1518 319L1507 323M1637 376L1630 370L1626 362M1637 376L1640 384L1646 391M1637 376L1625 381L1613 384L1601 385L1589 388L1577 389L1565 388L1552 387M723 380L713 379L704 381M723 380L735 384L749 388L762 390L775 394L788 397L801 400L814 403M1626 362L1633 378L1646 391M1626 362L1614 365L1601 368L1589 372L1577 377L1565 383L1552 387M1302 415L1302 429L1302 442L1302 456L1300 469L1295 481L1287 493L1281 505M1302 415L1312 423L1322 432L1333 439M1302 415L1288 411L1274 406L1262 399L1251 390L1240 381M1302 415L1290 410L1277 406L1266 400L1254 396L1242 391M1302 415L1307 403L1314 393L1317 381L1322 369L1325 357M1281 505L1292 496L1301 485L1308 473L1316 462L1325 451L1333 439M1678 485L1690 478L1702 472L1714 466L1726 460L1738 455L1752 453M823 376L818 390L814 403M1646 391L1632 391L1619 391L1606 392L1592 393L1579 393L1566 389L1552 387M704 381L695 391L686 402L676 411L667 422L655 430L644 438M704 381L695 390L686 400L678 410L669 419L657 426L647 434L636 441L625 448M1264 336L1257 347L1252 358L1247 370L1240 381M1264 336L1272 325L1281 316L1291 307M1264 336L1257 349L1254 363L1247 377L1242 391M1853 360L1867 358L1881 354L1894 351L1908 347L1921 344L1935 340M1853 360L1841 355L1828 352L1816 348L1803 345L1790 341L1778 336M1853 360L1861 373L1864 387M644 438L635 444L625 448M644 438L640 450L637 462L636 475L634 488L629 500L626 513L622 525M1751 590L1764 587L1777 584L1788 578L1800 574L1811 568L1820 560L1830 551L1840 544M1240 381L1242 385L1242 391M910 584L923 574L939 569M910 584L923 586L936 589L949 588L962 588L975 586L988 584L1001 583L1014 581M911 474L899 474L887 471L875 469L863 469L850 468L839 464L827 461L816 457M816 457L812 444L812 430L812 417L814 403M1935 340L1926 348L1916 355L1906 362L1897 370L1886 375L1875 381L1864 387M1935 340L1931 352L1928 364L1924 377L1923 389L1923 402L1921 414L1918 427L1919 439L1919 452L1918 465M1844 511L1858 509L1871 507L1885 508L1898 514M1844 511L1840 527L1840 544M939 569L951 574L964 578L976 578L988 582L1001 581L1014 581M1291 307L1298 317L1303 328L1310 338L1317 348L1325 357M625 448L624 460L622 473L623 486L621 499L622 512L622 525M1056 552L1046 559L1036 567L1025 575L1014 581M1778 336L1789 342L1801 346L1812 352L1824 357L1833 365L1845 371L1854 379L1864 387M1898 514L1888 521L1876 528L1864 533L1853 539L1840 544M1898 514L1901 501L1907 489L1911 476L1918 465M1864 387L1874 397L1883 407L1890 419L1899 428L1907 440L1913 452L1918 465M1134 418L1126 423L1118 428M1998 477L1985 475L1972 472L1959 468L1945 466L1932 466L1918 465M2207 1023L2219 1022L2231 1018L2243 1015M2224 1212L2236 1203L2247 1194M1631 1023L1643 1014L1659 1010M2483 1060L2496 1060L2510 1061L2523 1060L2537 1059M2483 1060L2473 1052L2463 1044L2454 1036L2443 1029L2432 1024L2421 1017L2411 1010M2483 1060L2495 1060L2508 1061L2521 1058M1878 1162L1888 1152L1895 1140L1900 1128L1907 1116L1911 1103M1878 1162L1885 1151L1893 1140L1899 1129L1906 1117L1914 1107L1921 1096M1878 1162L1884 1149L1888 1137L1894 1125L1900 1113L1904 1100L1909 1088M2548 1122L2547 1118L2543 1117M2548 1122L2546 1135L2540 1147M2548 1122L2542 1109L2532 1097M2122 1141L2116 1143L2109 1143M2122 1141L2123 1155L2128 1166L2134 1178M1473 1076L1485 1066L1495 1054L1506 1043M1473 1076L1462 1084L1450 1091L1441 1101L1430 1109L1420 1118M1473 1076L1465 1066L1459 1055L1451 1046L1444 1036L1439 1024M1526 1426L1543 1427L1559 1432M1526 1426L1526 1411L1527 1397L1531 1383L1536 1370L1545 1357M1526 1426L1528 1442L1533 1458M1526 1426L1512 1433L1497 1440M1911 1103L1916 1100L1921 1096M1911 1103L1909 1096L1909 1088M2455 1468L2462 1456L2469 1444L2477 1433L2487 1425L2498 1416L2508 1407L2519 1399M2455 1468L2454 1455L2452 1441L2450 1428L2445 1415M1848 1066L1861 1069L1874 1072L1886 1076L1898 1082L1909 1088M1506 1043L1518 1037L1531 1033L1542 1025L1552 1016M1506 1043L1496 1034L1487 1024L1481 1013L1475 1001M1705 1043L1692 1037L1679 1031L1668 1022L1659 1010M1568 1121L1582 1119L1596 1117L1610 1117M1568 1121L1566 1118L1562 1116M1568 1121L1563 1133L1559 1146L1553 1157L1548 1170L1548 1183L1547 1196M1800 1246L1793 1234L1787 1223L1782 1210M1800 1246L1815 1249L1830 1251L1844 1253L1858 1259M1751 1159L1762 1170L1772 1181L1778 1195L1782 1210M1751 1159L1755 1146L1761 1133L1765 1119L1766 1105M1751 1159L1749 1158L1747 1156M1333 1130L1332 1144L1332 1158L1333 1171L1330 1185M1333 1130L1332 1144L1331 1157L1329 1171L1328 1184L1323 1197L1319 1210L1316 1223M2537 1059L2529 1059L2521 1058M2537 1059L2536 1072L2534 1085L2532 1097M1920 1296L1932 1309L1945 1321M1920 1296L1906 1291L1893 1284L1880 1278L1868 1270L1858 1259M1920 1296L1933 1284L1948 1274M1920 1296L1917 1307L1913 1317M2398 1102L2384 1105L2369 1107L2355 1108L2341 1108M1610 1117L1598 1118L1586 1120L1574 1120L1562 1116M1610 1117L1612 1129L1614 1142L1617 1154L1622 1165M2519 1399L2513 1388L2510 1376L2505 1364L2502 1352L2502 1339M2519 1399L2519 1385L2522 1372L2524 1358L2527 1345L2528 1331M2519 1399L2506 1400L2494 1403L2481 1404L2469 1409L2457 1411L2445 1415M1293 1333L1302 1349L1303 1368M2441 1222L2433 1224L2425 1223M2441 1222L2452 1213L2462 1203L2469 1192L2476 1179L2483 1167L2489 1155M2031 1000L2040 1002L2049 1005M1771 1436L1758 1433L1746 1432M2348 1402L2341 1391L2332 1381L2325 1370L2318 1358L2310 1347M2543 1117L2542 1132L2540 1147M2543 1117L2536 1108L2532 1097M1395 1073L1401 1084L1406 1096L1413 1107L1420 1118M1395 1073L1398 1060L1401 1047L1399 1033M1945 1321L1945 1305L1946 1289L1948 1274M1945 1321L1929 1319L1913 1317M2502 1339L2509 1327L2518 1315L2525 1303M2502 1339L2514 1334L2528 1331M2111 1359L2103 1344L2096 1328M1559 1432L1551 1442L1542 1450L1533 1458M2109 1143L2118 1153L2127 1165L2134 1178M1420 1118L1427 1131L1434 1143L1440 1156L1442 1171L1445 1185M1399 1033L1412 1027L1424 1022L1439 1024M1948 1274L1940 1286L1931 1296L1923 1308L1913 1317M1766 1105L1781 1109L1795 1114L1809 1121M1766 1105L1763 1119L1760 1132L1753 1144L1747 1156M1651 1217L1662 1209L1674 1204L1687 1202L1700 1198M1651 1217L1646 1202L1641 1188L1633 1176L1622 1165M2525 1303L2528 1317L2528 1331M2138 1435L2135 1440L2135 1446M1700 1198L1707 1187L1717 1179L1725 1169L1736 1163L1747 1156M1921 1096L1915 1093L1909 1088M2540 1147L2527 1150L2514 1150L2502 1154L2489 1155M2341 1108L2339 1122L2339 1136L2338 1149L2338 1163L2340 1176L2341 1190L2343 1203M1547 1196L1561 1194L1574 1190L1586 1184L1599 1179L1611 1173L1622 1165M1533 1458L1523 1448L1510 1443L1497 1440M1439 1024L1453 1019L1464 1011L1475 1001M1330 1185L1326 1198L1322 1211L1316 1223" fill="none" stroke="url(#rg)" stroke-width="2" stroke-linejoin="round"/><polygon points="611.0,262.0 774.0,262.0 757.0,290.0 716.0,300.4 669.0,310.9 611.0,316.7" fill="#1d1d1d"/><polygon points="611.0,343.5 652.0,343.5 762.0,346.0 786.0,351.7 821.0,354.0 856.0,350.5 911.0,342.4 960.4,329.6 1040.0,326.0 1100.0,329.6 1007.0,338.9 937.0,355.0 902.0,371.5 890.5,383.0 913.8,401.8 960.4,415.7 1030.0,420.4 1053.6,436.7 999.0,444.5 977.5,454.5 937.0,473.0 890.5,510.0 868.8,519.8 828.0,541.5 797.0,560.0 735.0,566.0 611.0,569.5" fill="#1d1d1d"/><polygon points="1455.0,262.0 1502.0,281.0 1533.0,324.0 1564.0,364.0 1642.0,377.0 1750.0,408.0 1853.0,434.0 1812.0,448.0 1828.0,464.0 1918.0,507.0 1952.0,532.0 1980.0,560.0 1996.0,580.0 1990.0,600.0 1950.0,615.0 1921.0,628.0 1884.0,653.0 1930.0,666.0 2000.0,660.0 2055.0,634.0 2164.0,627.0 2335.0,634.0 2459.0,658.0 2552.0,686.0 2583.0,717.0 2583.0,262.0" fill="#1d1d1d"/><polygon points="1560.0,485.0 1700.0,488.0 1800.0,492.0 1920.0,502.0 1920.0,511.0 1800.0,497.0 1700.0,491.5 1560.0,488.5" fill="#1d1d1d"/><polygon points="2583.0,848.3 2560.5,855.5 2512.2,879.7 2488.0,894.2 2468.8,918.3 2439.8,940.0 2391.5,954.6 2355.3,957.0 2319.0,966.6 2323.9,988.4 2333.5,1012.5 2294.9,1029.4 2265.9,1051.0 2198.3,1056.0 2150.0,1060.8 2117.0,1061.0 2061.0,1070.0 2086.0,1078.0 2150.0,1070.5 2222.4,1072.9 2343.2,1101.9 2367.3,1113.9 2464.0,1116.3 2536.4,1113.9 2583.0,1104.3" fill="#1d1d1d"/><polygon points="2583.0,1250.6 2490.0,1275.0 2447.0,1306.0 2440.0,1325.0 2459.0,1350.0 2319.0,1350.0 2273.0,1372.0 2232.0,1390.7 2154.0,1414.0 2057.0,1456.7 1999.0,1472.0 1882.0,1445.0 1766.0,1421.7 1669.0,1414.0 1533.0,1425.6 1416.0,1437.0 1336.0,1460.0 1267.0,1471.0 1198.0,1447.0 1094.0,1450.0 1025.0,1433.0 956.0,1426.0 887.0,1436.5 818.0,1450.0 714.5,1467.5 611.0,1481.0 611.0,1898.0 2583.0,1898.0" fill="#1d1d1d"/><polygon points="1094.0,1450.0 1060.0,1420.0 1030.0,1400.0 1040.0,1398.0 1072.0,1418.0 1110.0,1448.0" fill="#1e1e1e"/><polygon points="868.0,1362.0 880.0,1355.0 945.0,1392.0 1010.0,1428.0 965.0,1430.0 925.0,1408.0" fill="#1e1e1e"/><polygon points="2330.0,966.0 2290.0,950.0 2250.0,945.0 2255.0,952.0 2295.0,958.0 2325.0,975.0" fill="#1e1e1e"/><polygon points="2440.0,884.0 2390.0,878.0 2360.0,880.0 2362.0,886.0 2395.0,886.0 2440.0,892.0" fill="#1e1e1e"/><polygon points="1000.0,445.0 960.0,452.0 930.0,465.0 935.0,470.0 965.0,460.0 1000.0,452.0" fill="#1e1e1e"/><polygon points="634.0,275.0 650.0,266.0 690.0,264.0 705.0,268.0 698.0,282.0 660.0,287.0 640.0,285.0" fill="#252525"/><polygon points="714.5,1526.0 783.6,1498.6 887.0,1491.7 1025.0,1481.0 1059.7,1512.0 990.6,1547.0 956.0,1581.0 870.0,1592.0 801.0,1564.0" fill="#252525"/><polygon points="2222.0,1085.0 2300.0,1090.0 2360.0,1108.0 2300.0,1112.0 2230.0,1100.0" fill="#252525"/><circle cx="792" cy="284.7" r="3.6" fill="#e8e8e8" stroke="#111" stroke-width="1.5"/><circle cx="980.6" cy="322.6" r="3.6" fill="#e8e8e8" stroke="#111" stroke-width="1.5"/><circle cx="904.5" cy="380" r="3.6" fill="#e8e8e8" stroke="#111" stroke-width="1.5"/><circle cx="1038" cy="424.4" r="3.6" fill="#e8e8e8" stroke="#111" stroke-width="1.5"/><circle cx="683.4" cy="571" r="3.6" fill="#e8e8e8" stroke="#111" stroke-width="1.5"/><circle cx="790.5" cy="612" r="3.6" fill="#e8e8e8" stroke="#111" stroke-width="1.5"/><circle cx="1427.3" cy="412.6" r="3.6" fill="#e8e8e8" stroke="#111" stroke-width="1.5"/><circle cx="1546.9" cy="376.9" r="3.6" fill="#e8e8e8" stroke="#111" stroke-width="1.5"/><circle cx="1960.6" cy="555.9" r="3.6" fill="#e8e8e8" stroke="#111" stroke-width="1.5"/><circle cx="1684.5" cy="575.7" r="3.6" fill="#e8e8e8" stroke="#111" stroke-width="1.5"/><circle cx="2049" cy="634.2" r="3.6" fill="#e8e8e8" stroke="#111" stroke-width="1.5"/><circle cx="2542.2" cy="698.1" r="3.6" fill="#e8e8e8" stroke="#111" stroke-width="1.5"/><circle cx="2194.4" cy="717.4" r="3.6" fill="#e8e8e8" stroke="#111" stroke-width="1.5"/><circle cx="2494.7" cy="776.4" r="3.6" fill="#e8e8e8" stroke="#111" stroke-width="1.5"/><circle cx="2567.7" cy="830.7" r="3.6" fill="#e8e8e8" stroke="#111" stroke-width="1.5"/><circle cx="1075" cy="269.8" r="3.6" fill="#e8e8e8" stroke="#111" stroke-width="1.5"/><circle cx="1179.7" cy="270.5" r="3.6" fill="#e8e8e8" stroke="#111" stroke-width="1.5"/><circle cx="1323" cy="272.9" r="3.6" fill="#e8e8e8" stroke="#111" stroke-width="1.5"/><circle cx="1263" cy="263" r="3.6" fill="#e8e8e8" stroke="#111" stroke-width="1.5"/><g stroke="#0e0e0e" stroke-width="3.6" stroke-linejoin="round" paint-order="stroke" stroke-opacity="0.92"><text x="778.7" y="273" font-size="18.9" textLength="28" lengthAdjust="spacingAndGlyphs" fill="#b8b8b8">Ayr</text><text x="944.9" y="310.1" font-size="17.8" textLength="71.4" lengthAdjust="spacingAndGlyphs" fill="#b8b8b8">Dumfries</text><text x="1096" y="327.2" font-size="19.2" textLength="64" lengthAdjust="spacingAndGlyphs" fill="#b8b8b8">Carlisle</text><text x="857.9" y="367.6" font-size="17.8" textLength="93.8" lengthAdjust="spacingAndGlyphs" fill="#b8b8b8">Whitehaven</text><text x="1005.4" y="392.4" font-size="17.8" textLength="65.2" lengthAdjust="spacingAndGlyphs" fill="#b8b8b8">Grange-</text><text x="992.4" y="412" font-size="17.9" textLength="91.3" lengthAdjust="spacingAndGlyphs" fill="#b8b8b8">over-Sands</text><text x="886.8" y="462.3" font-size="20.5" textLength="89.1" lengthAdjust="spacingAndGlyphs" fill="#b8b8b8">Blackpool</text><text x="771" y="532.6" font-size="25.1" textLength="101.9" lengthAdjust="spacingAndGlyphs" fill="#c4c4c4">Liverpool</text><text x="1070.6" y="513.6" font-size="23.8" textLength="124.2" lengthAdjust="spacingAndGlyphs" fill="#c4c4c4">Manchester</text><text x="948" y="532.2" font-size="22.4" textLength="108.6" lengthAdjust="spacingAndGlyphs" fill="#b8b8b8">Warrington</text><text x="638.3" y="555.5" font-size="22.7" textLength="90.7" lengthAdjust="spacingAndGlyphs" fill="#c4c4c4">St Asaph</text><text x="743" y="596.8" font-size="22.4" textLength="95.3" lengthAdjust="spacingAndGlyphs" fill="#c4c4c4">Wrexham</text><text x="999.2" y="603.6" font-size="23.2" textLength="153.8" lengthAdjust="spacingAndGlyphs" fill="#c4c4c4">Stoke-on-Trent</text><text x="735.8" y="668.8" font-size="23.1" textLength="122.1" lengthAdjust="spacingAndGlyphs" fill="#c4c4c4">Shrewsbury</text><text x="927.8" y="696.8" font-size="24.9" textLength="173.9" lengthAdjust="spacingAndGlyphs" fill="#c4c4c4">Wolverhampton</text><text x="1427.3" y="295.5" font-size="20.3" textLength="93.8" lengthAdjust="spacingAndGlyphs" fill="#b8b8b8">Newcastle</text><text x="1425.8" y="317.3" font-size="20.7" textLength="96.2" lengthAdjust="spacingAndGlyphs" fill="#b8b8b8">upon Tyne</text><text x="1477" y="362" font-size="21.4" textLength="140.4" lengthAdjust="spacingAndGlyphs" fill="#b8b8b8">Middlesbrough</text><text x="1400" y="399.3" font-size="17.6" textLength="54.7" lengthAdjust="spacingAndGlyphs" fill="#b8b8b8">Bedale</text><text x="1529.8" y="441.5" font-size="22.4" textLength="44.1" lengthAdjust="spacingAndGlyphs" fill="#b8b8b8">York</text><text x="1363.7" y="462.3" font-size="24.5" textLength="66.7" lengthAdjust="spacingAndGlyphs" fill="#c4c4c4">Leeds</text><text x="1727" y="449.9" font-size="22.1" textLength="86" lengthAdjust="spacingAndGlyphs" fill="#b8b8b8">Kingston</text><text x="1723.9" y="473.2" font-size="22.0" textLength="93.1" lengthAdjust="spacingAndGlyphs" fill="#b8b8b8">upon Hull</text><text x="1456.8" y="509.5" font-size="20.7" textLength="94.2" lengthAdjust="spacingAndGlyphs" fill="#b8b8b8">Doncaster</text><text x="1331" y="530.6" font-size="24.5" textLength="94.8" lengthAdjust="spacingAndGlyphs" fill="#c4c4c4">Sheffield</text><text x="1906.8" y="541.9" font-size="19.6" textLength="108.7" lengthAdjust="spacingAndGlyphs" fill="#b8b8b8">Mablethorpe</text><text x="1651" y="560" font-size="21.6" textLength="68.3" lengthAdjust="spacingAndGlyphs" fill="#b8b8b8">Lincoln</text><text x="1544.7" y="571" font-size="18.9" textLength="70.5" lengthAdjust="spacingAndGlyphs" fill="#b8b8b8">Newark-</text><text x="1543.8" y="591.2" font-size="19.5" textLength="73" lengthAdjust="spacingAndGlyphs" fill="#b8b8b8">on-Trent</text><text x="1381.4" y="613" font-size="25.5" textLength="130.4" lengthAdjust="spacingAndGlyphs" fill="#c4c4c4">Nottingham</text><text x="1291" y="620" font-size="23.2" textLength="62" lengthAdjust="spacingAndGlyphs" fill="#c4c4c4">Derby</text><text x="1370.8" y="685" font-size="23.5" textLength="95.3" lengthAdjust="spacingAndGlyphs" fill="#c4c4c4">Leicester</text><text x="1694.4" y="699.3" font-size="24.1" textLength="146" lengthAdjust="spacingAndGlyphs" fill="#c4c4c4">Peterborough</text><text x="1998.8" y="619.6" font-size="19.8" textLength="101.5" lengthAdjust="spacingAndGlyphs" fill="#b8b8b8">Hunstanton</text><text x="2331.7" y="686.3" font-size="24.5" textLength="88.5" lengthAdjust="spacingAndGlyphs" fill="#c4c4c4">Norwich</text><text x="2477" y="683.9" font-size="20.5" fill="#b8b8b8">Caister-on-Sea</text><text x="2161.8" y="703.4" font-size="21.0" textLength="65.8" lengthAdjust="spacingAndGlyphs" fill="#b8b8b8">Watton</text><text x="1957.5" y="745.3" font-size="21.2" textLength="29.5" lengthAdjust="spacingAndGlyphs" fill="#b8b8b8">Ely</text><text x="2442.9" y="761.8" font-size="21.1" textLength="105.5" lengthAdjust="spacingAndGlyphs" fill="#b8b8b8">Halesworth</text><text x="1851.1" y="796.7" font-size="25.4" textLength="124.2" lengthAdjust="spacingAndGlyphs" fill="#c4c4c4">Cambridge</text><text x="2518.6" y="814.6" font-size="20.5" fill="#b8b8b8">Aldeburgh</text><text x="2011.2" y="835.4" font-size="21.9" textLength="85.1" lengthAdjust="spacingAndGlyphs" fill="#b8b8b8">Haverhill</text><text x="2340.4" y="841.6" font-size="24.2" textLength="80.7" lengthAdjust="spacingAndGlyphs" fill="#c4c4c4">Ipswich</text><text x="2433.5" y="873.6" font-size="21.7" textLength="102.5" lengthAdjust="spacingAndGlyphs" fill="#b8b8b8">Felixstowe</text><text x="2225.5" y="895" font-size="24.2" textLength="115.5" lengthAdjust="spacingAndGlyphs" fill="#c4c4c4">Colchester</text><text x="2025.8" y="951.8" font-size="23.4" textLength="119.5" lengthAdjust="spacingAndGlyphs" fill="#c4c4c4">Chelmsford</text><text x="1948.1" y="995.9" font-size="23.4" textLength="111.9" lengthAdjust="spacingAndGlyphs" fill="#c4c4c4">Brentwood</text><text x="2160.9" y="999" font-size="25.9" textLength="119.5" lengthAdjust="spacingAndGlyphs" fill="#c4c4c4">Southend-</text><text x="2181" y="1026.3" font-size="24.6" textLength="79.2" lengthAdjust="spacingAndGlyphs" fill="#c4c4c4">on-Sea</text><text x="2076.4" y="1143.4" font-size="27.1" textLength="124.8" lengthAdjust="spacingAndGlyphs" fill="#c4c4c4">Maidstone</text><text x="2389.1" y="1141.2" font-size="26.7" textLength="132" lengthAdjust="spacingAndGlyphs" fill="#c4c4c4">Canterbury</text><text x="1903.1" y="1186.9" font-size="25.7" textLength="186.9" lengthAdjust="spacingAndGlyphs" fill="#c4c4c4">Royal Tunbridge</text><text x="1963.7" y="1213.3" font-size="26.2" textLength="63.6" lengthAdjust="spacingAndGlyphs" fill="#c4c4c4">Wells</text><text x="2156.2" y="1373.2" font-size="28.4" textLength="110.6" lengthAdjust="spacingAndGlyphs" fill="#c4c4c4">Hastings</text><text x="1678.5" y="1394.6" font-size="31.3" textLength="116.5" lengthAdjust="spacingAndGlyphs" fill="#c4c4c4">Brighton</text><text x="828.8" y="802.8" font-size="24.0" textLength="108.7" lengthAdjust="spacingAndGlyphs" fill="#c4c4c4">Worcester</text><text x="1060.7" y="776.9" font-size="23.9" textLength="99.4" lengthAdjust="spacingAndGlyphs" fill="#c4c4c4">Stratford-</text><text x="1051.9" y="801.2" font-size="24.2" textLength="116.5" lengthAdjust="spacingAndGlyphs" fill="#c4c4c4">upon-Avon</text><text x="1183.9" y="741.7" font-size="24.6" textLength="98.3" lengthAdjust="spacingAndGlyphs" fill="#c4c4c4">Coventry</text><text x="1298.8" y="752" font-size="22.9" textLength="66.3" lengthAdjust="spacingAndGlyphs" fill="#c4c4c4">Rugby</text><text x="1608.4" y="817.6" font-size="24.0" textLength="83.9" lengthAdjust="spacingAndGlyphs" fill="#c4c4c4">Bedford</text><text x="1434.4" y="847.8" font-size="24.1" textLength="151.6" lengthAdjust="spacingAndGlyphs" fill="#c4c4c4">Milton Keynes</text><text x="1624.2" y="899.2" font-size="24.2" textLength="60.6" lengthAdjust="spacingAndGlyphs" fill="#c4c4c4">Luton</text><text x="1604.9" y="979.5" font-size="25.6" textLength="88.5" lengthAdjust="spacingAndGlyphs" fill="#c4c4c4">Watford</text><text x="720.4" y="905.2" font-size="24.4" textLength="118.2" lengthAdjust="spacingAndGlyphs" fill="#c4c4c4">Gloucester</text><text x="1186.4" y="941" font-size="29.0" textLength="87" lengthAdjust="spacingAndGlyphs" fill="#c4c4c4">Oxford</text><text x="865.8" y="1017.9" font-size="26.2" textLength="100.5" lengthAdjust="spacingAndGlyphs" fill="#c4c4c4">Swindon</text><text x="1273.4" y="1059.8" font-size="26.6" textLength="99.2" lengthAdjust="spacingAndGlyphs" fill="#c4c4c4">Reading</text><text x="931.3" y="1179.3" font-size="25.0" textLength="93.2" lengthAdjust="spacingAndGlyphs" fill="#c4c4c4">Andover</text><text x="684.2" y="1246.6" font-size="28.2" textLength="115.9" lengthAdjust="spacingAndGlyphs" fill="#c4c4c4">Salisbury</text><text x="830.5" y="1343.2" font-size="30.7" textLength="182.8" lengthAdjust="spacingAndGlyphs" fill="#c4c4c4">Southampton</text><text x="1023.4" y="1406" font-size="31.7" textLength="162.2" lengthAdjust="spacingAndGlyphs" fill="#c4c4c4">Portsmouth</text><text x="709.4" y="1441.6" font-size="27.5" textLength="125.9" lengthAdjust="spacingAndGlyphs" fill="#c4c4c4">Lymington</text><text x="869.2" y="1481.3" font-size="27.5" textLength="102.5" lengthAdjust="spacingAndGlyphs" fill="#c4c4c4">Newport</text><text x="894.7" y="1559" font-size="28.3" textLength="97.7" lengthAdjust="spacingAndGlyphs" fill="#c4c4c4">Ventnor</text><text x="622" y="1462.3" font-size="26" text-anchor="end" fill="#c4c4c4">Ferndown</text></g><g font-weight="700" fill="#7a7a7a" stroke="#141414" stroke-width="4.5" stroke-linejoin="round" paint-order="stroke"><text x="1143.6" y="399.6" font-size="36.5" textLength="114.9" lengthAdjust="spacingAndGlyphs">United</text><text x="1122.8" y="441.5" font-size="36.5" textLength="154.2" lengthAdjust="spacingAndGlyphs">Kingdom</text><text transform="translate(1491.9 768) scale(0.78 1)" x="0" y="0" font-size="34" textLength="222.6" lengthAdjust="spacing">ENGLAND</text><text x="648.5" y="421" font-size="27" text-anchor="end" fill="#787878">Isle of Man</text></g><g><path fill="#525038" d="M1432 298h8v2h-8zM1480 297h8v3h-8zM1488 297h8v3h-8zM1456 310h8v2h-8zM1488 310h8v2h-8zM1504 310h8v2h-8zM1464 316h8v2h-8zM1480 315h8v3h-8zM1536 315h8v3h-8zM1544 316h8v2h-8zM1448 321h8v3h-8zM1456 321h8v3h-8zM1472 321h8v3h-8zM1424 328h8v2h-8zM1504 328h8v2h-8zM1528 327h8v3h-8zM1536 327h8v3h-8zM1128 333h8v3h-8zM1512 333h8v3h-8zM1512 339h8v3h-8zM1528 339h8v3h-8zM1432 346h8v2h-8zM1440 346h8v2h-8zM1448 345h8v3h-8zM1536 346h8v2h-8zM1408 352h8v2h-8zM1464 352h8v2h-8zM1464 357h8v3h-8zM1504 358h8v2h-8zM1520 357h8v3h-8zM1480 364h8v2h-8zM1504 363h8v3h-8zM1544 363h8v3h-8zM1560 364h8v2h-8zM1568 363h8v3h-8zM1512 369h8v3h-8zM1544 369h8v3h-8zM1528 375h8v3h-8zM1544 375h8v3h-8zM1552 375h8v3h-8zM1568 376h8v2h-8zM1016 435h8v3h-8zM1024 435h8v3h-8zM1032 435h8v3h-8zM1016 447h8v3h-8zM952 453h8v3h-8zM1384 453h8v3h-8zM928 459h8v3h-8zM1352 460h8v2h-8zM1328 465h8v3h-8zM1376 466h8v2h-8zM1392 465h8v3h-8zM1400 465h8v3h-8zM1440 466h8v2h-8zM1544 465h8v3h-8zM1816 465h8v3h-8zM928 471h8v3h-8zM1304 472h8v2h-8zM1312 471h8v3h-8zM1336 472h8v2h-8zM1344 471h8v3h-8zM1352 471h8v3h-8zM1360 471h8v3h-8zM1368 471h8v3h-8zM1392 471h8v3h-8zM1408 472h8v2h-8zM1464 472h8v2h-8zM1096 478h8v2h-8zM1312 477h8v3h-8zM1320 478h8v2h-8zM1344 477h8v3h-8zM1376 477h8v3h-8zM1416 478h8v2h-8zM1424 477h8v3h-8zM1432 477h8v3h-8zM1448 478h8v2h-8zM912 483h8v3h-8zM968 484h8v2h-8zM1048 483h8v3h-8zM1248 484h8v2h-8zM1328 483h8v3h-8zM1336 484h8v2h-8zM1352 483h8v3h-8zM1360 483h8v3h-8zM1376 483h8v3h-8zM1400 483h8v3h-8zM1432 483h8v3h-8zM1456 483h8v3h-8zM896 490h8v2h-8zM928 489h8v3h-8zM968 489h8v3h-8zM1104 489h8v3h-8zM1136 490h8v2h-8zM1352 489h8v3h-8zM1376 489h8v3h-8zM1400 489h8v3h-8zM1408 490h8v2h-8zM1416 490h8v2h-8zM944 495h8v3h-8zM1088 496h8v2h-8zM1312 495h8v3h-8zM1328 495h8v3h-8zM1376 495h8v3h-8zM1392 496h8v2h-8zM1408 495h8v3h-8zM1416 495h8v3h-8zM1440 496h8v2h-8zM1528 495h8v3h-8zM1456 501h8v3h-8zM1464 501h8v3h-8zM1472 501h8v3h-8zM1512 501h8v3h-8zM928 507h8v3h-8zM1104 508h8v2h-8zM1120 507h8v3h-8zM1192 507h8v3h-8zM1368 508h8v2h-8zM1392 508h8v2h-8zM1512 507h8v3h-8zM1184 513h8v3h-8zM1368 513h8v3h-8zM1392 514h8v2h-8zM952 520h8v2h-8zM1080 520h8v2h-8zM1344 519h8v3h-8zM1416 520h8v2h-8zM880 525h8v3h-8zM984 525h8v3h-8zM1008 525h8v3h-8zM1232 526h8v2h-8zM888 531h8v3h-8zM928 531h8v3h-8zM960 531h8v3h-8zM976 531h8v3h-8zM1016 531h8v3h-8zM1040 531h8v3h-8zM1048 531h8v3h-8zM1240 531h8v3h-8zM1320 531h8v3h-8zM1360 531h8v3h-8zM1448 531h8v3h-8zM1456 531h8v3h-8zM1536 531h8v3h-8zM840 537h8v3h-8zM928 537h8v3h-8zM1056 538h8v2h-8zM888 543h8v3h-8zM1192 543h8v3h-8zM1336 543h8v3h-8zM1368 544h8v2h-8zM904 549h8v3h-8zM1104 549h8v3h-8zM1144 549h8v3h-8zM1160 549h8v3h-8zM1168 549h8v3h-8zM1192 549h8v3h-8zM920 555h8v3h-8zM1144 555h8v3h-8zM1352 555h8v3h-8zM1376 555h8v3h-8zM1424 555h8v3h-8zM800 562h8v2h-8zM832 561h8v3h-8zM1080 562h8v2h-8zM1224 562h8v2h-8zM1400 562h8v2h-8zM1016 568h8v2h-8zM1200 568h8v2h-8zM1384 579h8v3h-8zM1528 579h8v3h-8zM1504 592h8v2h-8zM1448 597h8v3h-8zM1432 603h8v3h-8zM1304 609h8v3h-8zM1336 609h8v3h-8zM1384 610h8v2h-8zM1312 616h8v2h-8zM1320 616h8v2h-8zM1024 621h8v3h-8zM1312 621h8v3h-8zM1336 622h8v2h-8zM1504 621h8v3h-8zM1648 621h8v3h-8zM1360 627h8v3h-8zM1376 628h8v2h-8zM1384 627h8v3h-8zM1496 627h8v3h-8zM1024 633h8v3h-8zM1288 633h8v3h-8zM1128 640h8v2h-8zM1336 639h8v3h-8zM1376 639h8v3h-8zM1296 645h8v3h-8zM1448 645h8v3h-8zM1376 651h8v3h-8zM1680 663h8v3h-8zM1368 676h8v2h-8zM1488 675h8v3h-8zM1808 676h8v2h-8zM2456 675h8v3h-8zM1360 681h8v3h-8zM1368 682h8v2h-8zM1408 681h8v3h-8zM1448 681h8v3h-8zM1024 688h8v2h-8zM1072 694h8v2h-8zM1376 694h8v2h-8zM1384 693h8v3h-8zM1472 693h8v3h-8zM1936 693h8v3h-8zM984 700h8v2h-8zM1040 700h8v2h-8zM1056 699h8v3h-8zM1096 700h8v2h-8zM1128 700h8v2h-8zM1472 699h8v3h-8zM1072 706h8v2h-8zM1080 706h8v2h-8zM1120 706h8v2h-8zM1128 706h8v2h-8zM1144 706h8v2h-8zM1384 706h8v2h-8zM1448 705h8v3h-8zM1000 712h8v2h-8zM1032 712h8v2h-8zM1056 712h8v2h-8zM1072 712h8v2h-8zM1080 711h8v3h-8zM1088 712h8v2h-8zM1096 712h8v2h-8zM1160 711h8v3h-8zM1376 711h8v3h-8zM2192 711h8v3h-8zM968 717h8v3h-8zM992 717h8v3h-8zM1008 718h8v2h-8zM1024 717h8v3h-8zM1040 718h8v2h-8zM1064 717h8v3h-8zM1072 717h8v3h-8zM1080 717h8v3h-8zM1088 717h8v3h-8zM1096 718h8v2h-8zM1104 717h8v3h-8zM1112 718h8v2h-8zM1128 717h8v3h-8zM1184 718h8v2h-8zM1000 724h8v2h-8zM1016 724h8v2h-8zM1048 723h8v3h-8zM1096 723h8v3h-8zM1104 723h8v3h-8zM1128 723h8v3h-8zM1136 724h8v2h-8zM1144 724h8v2h-8zM968 730h8v2h-8zM992 730h8v2h-8zM1016 730h8v2h-8zM1024 729h8v3h-8zM1032 730h8v2h-8zM1040 729h8v3h-8zM1064 729h8v3h-8zM1072 729h8v3h-8zM1088 729h8v3h-8zM1104 729h8v3h-8zM1112 729h8v3h-8zM1120 729h8v3h-8zM1712 729h8v3h-8zM960 736h8v2h-8zM1000 736h8v2h-8zM1008 736h8v2h-8zM1016 735h8v3h-8zM1040 735h8v3h-8zM1048 735h8v3h-8zM1064 735h8v3h-8zM1080 735h8v3h-8zM1088 735h8v3h-8zM1112 735h8v3h-8zM1128 735h8v3h-8zM1144 736h8v2h-8zM1176 736h8v2h-8zM888 742h8v2h-8zM1016 741h8v3h-8zM1032 741h8v3h-8zM1048 741h8v3h-8zM1056 741h8v3h-8zM1064 741h8v3h-8zM1072 741h8v3h-8zM1088 741h8v3h-8zM1096 742h8v2h-8zM1120 741h8v3h-8zM1136 741h8v3h-8zM1152 742h8v2h-8zM1184 741h8v3h-8zM976 748h8v2h-8zM992 748h8v2h-8zM1024 748h8v2h-8zM1032 747h8v3h-8zM1064 747h8v3h-8zM1072 748h8v2h-8zM1080 747h8v3h-8zM1096 747h8v3h-8zM1112 748h8v2h-8zM1120 747h8v3h-8zM1128 748h8v2h-8zM1136 748h8v2h-8zM1160 747h8v3h-8zM1000 754h8v2h-8zM1008 754h8v2h-8zM1016 753h8v3h-8zM1040 754h8v2h-8zM1088 754h8v2h-8zM1120 754h8v2h-8zM1128 753h8v3h-8zM1176 753h8v3h-8zM952 760h8v2h-8zM984 760h8v2h-8zM1000 760h8v2h-8zM1032 759h8v3h-8zM1048 759h8v3h-8zM1088 760h8v2h-8zM1112 760h8v2h-8zM1120 759h8v3h-8zM1136 760h8v2h-8zM1144 760h8v2h-8zM1056 766h8v2h-8zM1120 765h8v3h-8zM1152 766h8v2h-8zM1016 772h8v2h-8zM1056 778h8v2h-8zM1088 778h8v2h-8zM1536 784h8v2h-8zM1056 789h8v3h-8zM888 813h8v3h-8zM888 825h8v3h-8zM1872 831h8v3h-8zM1944 831h8v3h-8zM1080 868h8v2h-8zM1464 867h8v3h-8zM856 909h8v3h-8zM2200 916h8v2h-8zM792 921h8v3h-8zM808 922h8v2h-8zM752 928h8v2h-8zM1544 927h8v3h-8zM672 964h8v2h-8zM1200 969h8v3h-8zM1912 975h8v3h-8zM1408 982h8v2h-8zM704 1018h8v2h-8zM1576 1035h8v3h-8zM984 1042h8v2h-8zM1584 1041h8v3h-8zM752 1077h8v3h-8zM1536 1089h8v3h-8zM1400 1102h8v2h-8zM752 1120h8v2h-8zM2440 1132h8v2h-8zM864 1150h8v2h-8zM1576 1149h8v3h-8zM840 1168h8v2h-8zM976 1167h8v3h-8zM2024 1173h8v3h-8zM1216 1179h8v3h-8zM1640 1191h8v3h-8zM1016 1203h8v3h-8zM2400 1251h8v3h-8zM952 1269h8v3h-8zM1368 1275h8v3h-8zM768 1293h8v3h-8zM1168 1311h8v3h-8zM1720 1318h8v2h-8zM888 1377h8v3h-8zM2248 1408h8v2h-8zM696 1461h8v3h-8z"/><path fill="#74742e" d="M1432 320h8v4h-8zM1480 326h8v4h-8zM1440 332h8v4h-8zM1464 332h8v4h-8zM1472 333h8v3h-8zM1488 332h8v4h-8zM1496 333h8v3h-8zM1112 338h8v4h-8zM1120 338h8v4h-8zM1128 338h8v4h-8zM1136 344h8v4h-8zM1512 344h8v4h-8zM1512 351h8v3h-8zM1528 368h8v4h-8zM1536 368h8v4h-8zM1352 422h8v4h-8zM1688 422h8v4h-8zM1632 429h8v3h-8zM1024 440h8v4h-8zM1040 441h8v3h-8zM1008 446h8v4h-8zM1032 447h8v3h-8zM1536 447h8v3h-8zM1552 447h8v3h-8zM1536 452h8v4h-8zM1544 452h8v4h-8zM1560 453h8v3h-8zM1640 452h8v4h-8zM1552 458h8v4h-8zM1568 459h8v3h-8zM960 464h8v4h-8zM1408 465h8v3h-8zM1376 471h8v3h-8zM1384 471h8v3h-8zM912 476h8v4h-8zM920 476h8v4h-8zM928 476h8v4h-8zM936 476h8v4h-8zM952 476h8v4h-8zM1040 476h8v4h-8zM1048 476h8v4h-8zM1088 476h8v4h-8zM1304 476h8v4h-8zM1328 477h8v3h-8zM1360 477h8v3h-8zM1368 477h8v3h-8zM1384 477h8v3h-8zM1408 476h8v4h-8zM1736 476h8v4h-8zM1776 477h8v3h-8zM928 482h8v4h-8zM1000 482h8v4h-8zM1008 482h8v4h-8zM1016 483h8v3h-8zM1176 483h8v3h-8zM1192 482h8v4h-8zM1368 482h8v4h-8zM1384 483h8v3h-8zM1392 482h8v4h-8zM1728 482h8v4h-8zM1736 482h8v4h-8zM1744 482h8v4h-8zM1792 482h8v4h-8zM1808 482h8v4h-8zM920 488h8v4h-8zM1008 488h8v4h-8zM1032 489h8v3h-8zM1040 488h8v4h-8zM1336 489h8v3h-8zM1344 489h8v3h-8zM1392 489h8v3h-8zM1432 488h8v4h-8zM1736 488h8v4h-8zM1760 488h8v4h-8zM1768 488h8v4h-8zM1784 489h8v3h-8zM920 495h8v3h-8zM936 494h8v4h-8zM1048 494h8v4h-8zM1168 494h8v4h-8zM1744 495h8v3h-8zM1016 501h8v3h-8zM1112 501h8v3h-8zM1136 501h8v3h-8zM1168 500h8v4h-8zM1168 507h8v3h-8zM1208 506h8v4h-8zM1280 507h8v3h-8zM1488 506h8v4h-8zM1528 506h8v4h-8zM1648 506h8v4h-8zM944 512h8v4h-8zM1056 512h8v4h-8zM1104 512h8v4h-8zM1112 512h8v4h-8zM1176 513h8v3h-8zM1488 512h8v4h-8zM1512 512h8v4h-8zM1536 512h8v4h-8zM1040 519h8v3h-8zM1056 519h8v3h-8zM1072 518h8v4h-8zM1096 518h8v4h-8zM1120 518h8v4h-8zM1152 518h8v4h-8zM1200 518h8v4h-8zM1264 519h8v3h-8zM1392 519h8v3h-8zM1472 518h8v4h-8zM992 525h8v3h-8zM1088 525h8v3h-8zM1152 524h8v4h-8zM1160 525h8v3h-8zM1384 524h8v4h-8zM856 530h8v4h-8zM896 531h8v3h-8zM912 531h8v3h-8zM920 530h8v4h-8zM1000 530h8v4h-8zM1008 530h8v4h-8zM1024 531h8v3h-8zM1032 530h8v4h-8zM1072 530h8v4h-8zM1096 530h8v4h-8zM1120 530h8v4h-8zM1136 530h8v4h-8zM1184 530h8v4h-8zM1208 530h8v4h-8zM1376 530h8v4h-8zM1408 530h8v4h-8zM816 537h8v3h-8zM872 536h8v4h-8zM888 536h8v4h-8zM896 536h8v4h-8zM912 536h8v4h-8zM944 536h8v4h-8zM952 537h8v3h-8zM968 537h8v3h-8zM984 537h8v3h-8zM992 536h8v4h-8zM1024 536h8v4h-8zM1032 536h8v4h-8zM1048 536h8v4h-8zM1064 536h8v4h-8zM1072 536h8v4h-8zM1096 536h8v4h-8zM1104 536h8v4h-8zM1144 536h8v4h-8zM1152 536h8v4h-8zM1168 536h8v4h-8zM1320 537h8v3h-8zM1368 536h8v4h-8zM1376 537h8v3h-8zM1384 536h8v4h-8zM1392 537h8v3h-8zM1416 536h8v4h-8zM848 542h8v4h-8zM880 542h8v4h-8zM944 543h8v3h-8zM952 543h8v3h-8zM976 543h8v3h-8zM984 543h8v3h-8zM992 542h8v4h-8zM1000 543h8v3h-8zM1016 542h8v4h-8zM1032 543h8v3h-8zM1056 543h8v3h-8zM1088 542h8v4h-8zM1120 542h8v4h-8zM1128 542h8v4h-8zM1136 542h8v4h-8zM1208 543h8v3h-8zM1224 543h8v3h-8zM1384 543h8v3h-8zM832 548h8v4h-8zM896 548h8v4h-8zM992 548h8v4h-8zM1008 548h8v4h-8zM1048 548h8v4h-8zM1080 548h8v4h-8zM1360 548h8v4h-8zM1368 548h8v4h-8zM1376 549h8v3h-8zM1392 549h8v3h-8zM1400 549h8v3h-8zM1664 549h8v3h-8zM848 555h8v3h-8zM856 554h8v4h-8zM880 555h8v3h-8zM912 554h8v4h-8zM1080 555h8v3h-8zM1104 554h8v4h-8zM1112 554h8v4h-8zM1384 554h8v4h-8zM1392 554h8v4h-8zM1416 555h8v3h-8zM840 560h8v4h-8zM880 560h8v4h-8zM896 560h8v4h-8zM1136 560h8v4h-8zM856 567h8v3h-8zM864 566h8v4h-8zM1064 572h8v4h-8zM1584 573h8v3h-8zM1736 572h8v4h-8zM1976 579h8v3h-8zM1064 585h8v3h-8zM1400 591h8v3h-8zM1640 590h8v4h-8zM1712 590h8v4h-8zM1056 596h8v4h-8zM1072 597h8v3h-8zM1040 602h8v4h-8zM1064 602h8v4h-8zM1080 602h8v4h-8zM1184 602h8v4h-8zM1376 602h8v4h-8zM736 608h8v4h-8zM1056 608h8v4h-8zM1088 608h8v4h-8zM1432 608h8v4h-8zM1440 608h8v4h-8zM1552 608h8v4h-8zM1072 614h8v4h-8zM1080 615h8v3h-8zM1096 614h8v4h-8zM1112 614h8v4h-8zM1336 615h8v3h-8zM1344 614h8v4h-8zM1352 614h8v4h-8zM1456 614h8v4h-8zM1464 614h8v4h-8zM1072 620h8v4h-8zM1320 620h8v4h-8zM1344 621h8v3h-8zM1376 621h8v3h-8zM1400 620h8v4h-8zM1408 621h8v3h-8zM1432 620h8v4h-8zM1064 627h8v3h-8zM1072 626h8v4h-8zM1328 627h8v3h-8zM1352 626h8v4h-8zM1392 626h8v4h-8zM1408 626h8v4h-8zM2112 626h8v4h-8zM1064 632h8v4h-8zM1088 632h8v4h-8zM1328 632h8v4h-8zM1336 632h8v4h-8zM1456 632h8v4h-8zM1040 638h8v4h-8zM1304 638h8v4h-8zM1344 639h8v3h-8zM1384 638h8v4h-8zM920 645h8v3h-8zM1312 644h8v4h-8zM1320 645h8v3h-8zM1336 645h8v3h-8zM1400 644h8v4h-8zM2056 644h8v4h-8zM2368 656h8v4h-8zM1392 680h8v4h-8zM1880 681h8v3h-8zM912 686h8v4h-8zM1400 686h8v4h-8zM1408 686h8v4h-8zM1440 686h8v4h-8zM1736 686h8v4h-8zM880 692h8v4h-8zM888 693h8v3h-8zM904 693h8v3h-8zM1400 693h8v3h-8zM2408 693h8v3h-8zM896 698h8v4h-8zM904 698h8v4h-8zM1376 698h8v4h-8zM1416 698h8v4h-8zM1440 699h8v3h-8zM1048 704h8v4h-8zM1424 705h8v3h-8zM1760 704h8v4h-8zM1784 704h8v4h-8zM1064 710h8v4h-8zM1408 711h8v3h-8zM1416 711h8v3h-8zM1744 710h8v4h-8zM1016 717h8v3h-8zM1056 716h8v4h-8zM1384 717h8v3h-8zM1040 723h8v3h-8zM1056 723h8v3h-8zM1064 723h8v3h-8zM1072 722h8v4h-8zM1080 722h8v4h-8zM1088 723h8v3h-8zM1112 723h8v3h-8zM1160 723h8v3h-8zM1752 722h8v4h-8zM1048 728h8v4h-8zM1056 728h8v4h-8zM1080 728h8v4h-8zM1096 729h8v3h-8zM1136 729h8v3h-8zM1152 729h8v3h-8zM1024 735h8v3h-8zM1056 735h8v3h-8zM1072 734h8v4h-8zM1096 735h8v3h-8zM1104 735h8v3h-8zM1120 734h8v4h-8zM1136 735h8v3h-8zM1024 741h8v3h-8zM1040 741h8v3h-8zM1080 740h8v4h-8zM1104 740h8v4h-8zM1112 741h8v3h-8zM1272 740h8v4h-8zM944 746h8v4h-8zM1040 747h8v3h-8zM1048 747h8v3h-8zM1104 747h8v3h-8zM1192 746h8v4h-8zM1048 753h8v3h-8zM1056 752h8v4h-8zM1064 752h8v4h-8zM1080 753h8v3h-8zM2032 752h8v4h-8zM1128 759h8v3h-8zM1344 758h8v4h-8zM2408 758h8v4h-8zM888 764h8v4h-8zM1232 764h8v4h-8zM1264 764h8v4h-8zM1376 765h8v3h-8zM1312 770h8v4h-8zM672 777h8v3h-8zM1064 782h8v4h-8zM1264 783h8v3h-8zM1064 788h8v4h-8zM1584 789h8v3h-8zM1040 794h8v4h-8zM1904 800h8v4h-8zM896 806h8v4h-8zM1896 807h8v3h-8zM2184 806h8v4h-8zM896 812h8v4h-8zM856 819h8v3h-8zM888 818h8v4h-8zM912 818h8v4h-8zM896 824h8v4h-8zM1936 824h8v4h-8zM1120 830h8v4h-8zM1912 830h8v4h-8zM1696 836h8v4h-8zM1464 842h8v4h-8zM1432 854h8v4h-8zM2424 854h8v4h-8zM1544 860h8v4h-8zM1984 878h8v4h-8zM2008 884h8v4h-8zM800 890h8v4h-8zM1512 890h8v4h-8zM816 896h8v4h-8zM832 896h8v4h-8zM856 896h8v4h-8zM888 896h8v4h-8zM1480 896h8v4h-8zM1968 896h8v4h-8zM824 902h8v4h-8zM848 902h8v4h-8zM776 908h8v4h-8zM784 908h8v4h-8zM816 908h8v4h-8zM824 909h8v3h-8zM872 908h8v4h-8zM896 909h8v3h-8zM1744 908h8v4h-8zM2104 909h8v3h-8zM2392 908h8v4h-8zM2400 908h8v4h-8zM824 914h8v4h-8zM880 915h8v3h-8zM2424 914h8v4h-8zM800 921h8v3h-8zM2264 921h8v3h-8zM1208 932h8v4h-8zM1240 932h8v4h-8zM1280 933h8v3h-8zM776 938h8v4h-8zM1264 944h8v4h-8zM1488 944h8v4h-8zM1944 950h8v4h-8zM624 956h8v4h-8zM1264 962h8v4h-8zM1856 968h8v4h-8zM1256 974h8v4h-8zM816 980h8v4h-8zM1808 980h8v4h-8zM1888 986h8v4h-8zM896 1004h8v4h-8zM1456 1004h8v4h-8zM1712 1005h8v3h-8zM1992 1010h8v4h-8zM1320 1022h8v4h-8zM2216 1028h8v4h-8zM1616 1034h8v4h-8zM2040 1034h8v4h-8zM1616 1040h8v4h-8zM1568 1046h8v4h-8zM1584 1046h8v4h-8zM1944 1052h8v4h-8zM632 1058h8v4h-8zM1256 1058h8v4h-8zM1592 1058h8v4h-8zM1680 1070h8v4h-8zM2064 1070h8v4h-8zM1144 1088h8v4h-8zM1608 1094h8v4h-8zM1600 1100h8v4h-8zM1600 1106h8v4h-8zM1688 1106h8v4h-8zM1856 1106h8v4h-8zM1448 1113h8v3h-8zM1568 1112h8v4h-8zM2408 1112h8v4h-8zM1592 1118h8v4h-8zM1608 1124h8v4h-8zM1824 1124h8v4h-8zM2408 1124h8v4h-8zM1600 1142h8v4h-8zM1616 1154h8v4h-8zM1248 1160h8v4h-8zM1448 1161h8v3h-8zM2104 1160h8v4h-8zM1504 1166h8v4h-8zM976 1172h8v4h-8zM992 1173h8v3h-8zM1008 1172h8v4h-8zM2416 1172h8v4h-8zM976 1178h8v4h-8zM992 1178h8v4h-8zM968 1184h8v4h-8zM976 1184h8v4h-8zM1016 1184h8v4h-8zM1584 1184h8v4h-8zM1504 1190h8v4h-8zM1568 1190h8v4h-8zM1592 1190h8v4h-8zM2312 1190h8v4h-8zM664 1196h8v4h-8zM976 1196h8v4h-8zM2280 1196h8v4h-8zM1080 1202h8v4h-8zM1696 1208h8v4h-8zM1744 1208h8v4h-8zM784 1214h8v4h-8zM1584 1232h8v4h-8zM1976 1232h8v4h-8zM2008 1232h8v4h-8zM1688 1238h8v4h-8zM1128 1244h8v4h-8zM1200 1244h8v4h-8zM1000 1250h8v4h-8zM960 1256h8v4h-8zM1616 1256h8v4h-8zM2368 1256h8v4h-8zM736 1262h8v4h-8zM744 1262h8v4h-8zM2352 1262h8v4h-8zM728 1268h8v4h-8zM1584 1268h8v4h-8zM2352 1269h8v3h-8zM728 1274h8v4h-8zM1160 1274h8v4h-8zM2424 1280h8v4h-8zM864 1292h8v4h-8zM768 1335h8v3h-8zM2208 1334h8v4h-8zM1008 1340h8v4h-8zM1592 1340h8v4h-8zM1008 1346h8v4h-8zM976 1358h8v4h-8zM1120 1358h8v4h-8zM1472 1358h8v4h-8zM904 1364h8v4h-8zM1136 1364h8v4h-8zM1480 1365h8v3h-8zM1032 1370h8v4h-8zM1456 1370h8v4h-8zM2192 1370h8v4h-8zM776 1382h8v4h-8zM1136 1382h8v4h-8zM896 1388h8v4h-8zM1456 1394h8v4h-8zM1504 1412h8v4h-8zM1712 1418h8v4h-8zM1472 1424h8v4h-8zM1696 1424h8v4h-8zM2056 1436h8v4h-8zM1184 1448h8v4h-8zM2040 1448h8v4h-8zM696 1455h8v3h-8zM1984 1454h8v4h-8zM680 1466h8v4h-8zM696 1466h8v4h-8zM728 1466h8v4h-8zM736 1466h8v4h-8zM648 1473h8v3h-8zM688 1472h8v4h-8zM696 1472h8v4h-8zM704 1472h8v4h-8zM712 1472h8v4h-8zM720 1472h8v4h-8z"/><path fill="#979c2c" d="M1480 332h8v4h-8zM1136 337h8v5h-8zM1032 439h8v5h-8zM1552 451h8v5h-8zM1240 457h8v5h-8zM1544 458h8v4h-8zM1768 475h8v5h-8zM1024 481h8v5h-8zM1040 481h8v5h-8zM1752 481h8v5h-8zM1760 481h8v5h-8zM1768 481h8v5h-8zM1080 505h8v5h-8zM1152 505h8v5h-8zM1160 505h8v5h-8zM1144 517h8v5h-8zM1192 518h8v4h-8zM1096 523h8v5h-8zM1104 523h8v5h-8zM1128 523h8v5h-8zM1832 523h8v5h-8zM1144 529h8v5h-8zM1872 529h8v5h-8zM848 535h8v5h-8zM880 535h8v5h-8zM920 535h8v5h-8zM1000 536h8v4h-8zM1120 534h8v6h-8zM1136 536h8v4h-8zM1400 535h8v5h-8zM1936 536h8v4h-8zM856 541h8v5h-8zM864 541h8v5h-8zM872 541h8v5h-8zM1024 541h8v5h-8zM1064 541h8v5h-8zM1240 541h8v5h-8zM864 547h8v5h-8zM872 547h8v5h-8zM864 553h8v5h-8zM888 559h8v5h-8zM1824 564h8v6h-8zM1224 583h8v5h-8zM1656 582h8v6h-8zM1664 583h8v5h-8zM1672 583h8v5h-8zM1648 590h8v4h-8zM1664 589h8v5h-8zM1424 602h8v4h-8zM1064 613h8v5h-8zM1432 613h8v5h-8zM1080 619h8v5h-8zM1416 620h8v4h-8zM1424 619h8v5h-8zM1464 625h8v5h-8zM1424 631h8v5h-8zM1408 638h8v4h-8zM1432 637h8v5h-8zM1416 643h8v5h-8zM1352 661h8v5h-8zM1384 668h8v4h-8zM904 685h8v5h-8zM2360 685h8v5h-8zM2456 685h8v5h-8zM2368 691h8v5h-8zM2392 691h8v5h-8zM2400 691h8v5h-8zM2472 691h8v5h-8zM1400 698h8v4h-8zM2352 697h8v5h-8zM2360 697h8v5h-8zM2400 697h8v5h-8zM2464 696h8v6h-8zM2488 696h8v6h-8zM2496 697h8v5h-8zM688 703h8v5h-8zM1744 703h8v5h-8zM1768 703h8v5h-8zM1792 703h8v5h-8zM2368 703h8v5h-8zM1752 709h8v5h-8zM1768 709h8v5h-8zM976 715h8v5h-8zM1760 715h8v5h-8zM1768 716h8v4h-8zM1808 715h8v5h-8zM1760 721h8v5h-8zM1784 721h8v5h-8zM2168 721h8v5h-8zM1856 728h8v4h-8zM1248 733h8v5h-8zM1216 739h8v5h-8zM1256 739h8v5h-8zM1280 739h8v5h-8zM1504 739h8v5h-8zM1184 751h8v5h-8zM1264 751h8v5h-8zM1272 751h8v5h-8zM1280 752h8v4h-8zM1320 752h8v4h-8zM1232 757h8v5h-8zM1248 757h8v5h-8zM1320 757h8v5h-8zM1328 757h8v5h-8zM1336 757h8v5h-8zM1336 764h8v4h-8zM2048 769h8v5h-8zM1072 775h8v5h-8zM832 781h8v5h-8zM1040 781h8v5h-8zM1032 787h8v5h-8zM1040 788h8v4h-8zM1048 787h8v5h-8zM1472 787h8v5h-8zM1480 787h8v5h-8zM1072 793h8v5h-8zM1464 793h8v5h-8zM1648 793h8v5h-8zM1040 799h8v5h-8zM1920 799h8v5h-8zM1904 804h8v6h-8zM1920 811h8v5h-8zM1944 811h8v5h-8zM2040 811h8v5h-8zM2432 811h8v5h-8zM1912 817h8v5h-8zM1632 823h8v5h-8zM1904 824h8v4h-8zM1920 823h8v5h-8zM1928 829h8v5h-8zM1656 835h8v5h-8zM1912 836h8v4h-8zM1504 847h8v5h-8zM1544 847h8v5h-8zM2376 847h8v5h-8zM2400 847h8v5h-8zM1504 853h8v5h-8zM2352 853h8v5h-8zM2368 853h8v5h-8zM2384 853h8v5h-8zM2392 853h8v5h-8zM1440 859h8v5h-8zM1504 859h8v5h-8zM2352 859h8v5h-8zM2368 859h8v5h-8zM2384 859h8v5h-8zM2392 859h8v5h-8zM2400 859h8v5h-8zM2552 859h8v5h-8zM2560 859h8v5h-8zM1504 865h8v5h-8zM1520 865h8v5h-8zM1552 883h8v5h-8zM1960 883h8v5h-8zM864 889h8v5h-8zM1464 889h8v5h-8zM1472 889h8v5h-8zM1496 889h8v5h-8zM1688 889h8v5h-8zM864 895h8v5h-8zM872 895h8v5h-8zM880 896h8v4h-8zM1048 895h8v5h-8zM1976 895h8v5h-8zM2280 895h8v5h-8zM784 901h8v5h-8zM800 902h8v4h-8zM840 901h8v5h-8zM856 901h8v5h-8zM872 902h8v4h-8zM1688 901h8v5h-8zM792 907h8v5h-8zM800 907h8v5h-8zM832 907h8v5h-8zM864 907h8v5h-8zM2520 907h8v5h-8zM792 913h8v5h-8zM1136 913h8v5h-8zM1600 912h8v6h-8zM1712 913h8v5h-8zM2512 913h8v5h-8zM2528 919h8v5h-8zM1392 931h8v5h-8zM856 937h8v5h-8zM1128 937h8v5h-8zM1224 938h8v4h-8zM1288 943h8v5h-8zM1232 949h8v5h-8zM1400 949h8v5h-8zM1984 949h8v5h-8zM2096 949h8v5h-8zM1280 955h8v5h-8zM2080 955h8v5h-8zM1224 961h8v5h-8zM1240 961h8v5h-8zM1248 960h8v6h-8zM1256 961h8v5h-8zM1824 961h8v5h-8zM2088 960h8v6h-8zM1264 966h8v6h-8zM1912 967h8v5h-8zM2072 967h8v5h-8zM2088 967h8v5h-8zM1472 973h8v5h-8zM1720 973h8v5h-8zM1880 973h8v5h-8zM1240 979h8v5h-8zM1464 979h8v5h-8zM1752 979h8v5h-8zM1936 978h8v6h-8zM1960 978h8v6h-8zM752 985h8v5h-8zM1752 985h8v5h-8zM1696 991h8v5h-8zM1800 991h8v5h-8zM1816 991h8v5h-8zM1992 992h8v4h-8zM672 997h8v5h-8zM1664 997h8v5h-8zM1752 997h8v5h-8zM1816 997h8v5h-8zM1952 997h8v5h-8zM1256 1003h8v5h-8zM1768 1003h8v5h-8zM1648 1009h8v5h-8zM1856 1009h8v5h-8zM1928 1008h8v6h-8zM1952 1010h8v4h-8zM1816 1015h8v5h-8zM2032 1015h8v5h-8zM2128 1015h8v5h-8zM872 1021h8v5h-8zM1576 1021h8v5h-8zM1736 1020h8v6h-8zM960 1027h8v5h-8zM1520 1027h8v5h-8zM1664 1027h8v5h-8zM1688 1027h8v5h-8zM1872 1027h8v5h-8zM2040 1027h8v5h-8zM2080 1027h8v5h-8zM2240 1027h8v5h-8zM2184 1033h8v5h-8zM672 1039h8v5h-8zM1928 1039h8v5h-8zM1976 1039h8v5h-8zM2040 1039h8v5h-8zM2064 1039h8v5h-8zM640 1045h8v5h-8zM936 1045h8v5h-8zM1088 1045h8v5h-8zM1384 1052h8v4h-8zM1616 1052h8v4h-8zM1640 1051h8v5h-8zM1680 1051h8v5h-8zM1856 1051h8v5h-8zM1520 1057h8v5h-8zM1584 1057h8v5h-8zM1616 1056h8v6h-8zM1928 1057h8v5h-8zM1936 1057h8v5h-8zM1664 1063h8v5h-8zM1888 1063h8v5h-8zM1568 1069h8v5h-8zM1632 1069h8v5h-8zM1640 1069h8v5h-8zM1912 1069h8v5h-8zM2080 1069h8v5h-8zM1616 1074h8v6h-8zM1648 1074h8v6h-8zM1696 1074h8v6h-8zM1240 1081h8v5h-8zM1656 1080h8v6h-8zM1728 1081h8v5h-8zM2064 1081h8v5h-8zM840 1087h8v5h-8zM1280 1087h8v5h-8zM1544 1087h8v5h-8zM1592 1087h8v5h-8zM1616 1086h8v6h-8zM1640 1087h8v5h-8zM1648 1087h8v5h-8zM1696 1087h8v5h-8zM1736 1086h8v6h-8zM1960 1087h8v5h-8zM2032 1087h8v5h-8zM1256 1093h8v5h-8zM1616 1093h8v5h-8zM1688 1093h8v5h-8zM1808 1093h8v5h-8zM2080 1093h8v5h-8zM1328 1099h8v5h-8zM1584 1100h8v4h-8zM1680 1099h8v5h-8zM1704 1099h8v5h-8zM1712 1099h8v5h-8zM1776 1099h8v5h-8zM1840 1099h8v5h-8zM2064 1099h8v5h-8zM728 1105h8v5h-8zM1888 1105h8v5h-8zM1904 1105h8v5h-8zM1920 1105h8v5h-8zM1984 1105h8v5h-8zM2024 1105h8v5h-8zM2464 1105h8v5h-8zM1536 1111h8v5h-8zM1616 1111h8v5h-8zM1656 1111h8v5h-8zM2008 1110h8v6h-8zM2176 1111h8v5h-8zM2416 1111h8v5h-8zM2464 1111h8v5h-8zM1280 1117h8v5h-8zM1608 1117h8v5h-8zM1912 1117h8v5h-8zM1952 1117h8v5h-8zM2408 1117h8v5h-8zM2424 1118h8v4h-8zM2464 1117h8v5h-8zM2472 1117h8v5h-8zM2480 1117h8v5h-8zM1704 1123h8v5h-8zM2040 1123h8v5h-8zM2080 1123h8v5h-8zM688 1130h8v4h-8zM1640 1129h8v5h-8zM1664 1129h8v5h-8zM1696 1129h8v5h-8zM1760 1129h8v5h-8zM2008 1128h8v6h-8zM1976 1135h8v5h-8zM1224 1141h8v5h-8zM1592 1141h8v5h-8zM1664 1142h8v4h-8zM1840 1141h8v5h-8zM1864 1140h8v6h-8zM2024 1141h8v5h-8zM2144 1141h8v5h-8zM1200 1147h8v5h-8zM1264 1147h8v5h-8zM1568 1147h8v5h-8zM1680 1146h8v6h-8zM656 1159h8v5h-8zM1368 1159h8v5h-8zM1376 1159h8v5h-8zM1224 1165h8v5h-8zM1248 1164h8v6h-8zM1368 1164h8v6h-8zM1376 1165h8v5h-8zM1520 1165h8v5h-8zM2448 1165h8v5h-8zM1192 1171h8v5h-8zM1352 1172h8v4h-8zM1448 1171h8v5h-8zM1464 1171h8v5h-8zM968 1177h8v5h-8zM1240 1177h8v5h-8zM1600 1177h8v5h-8zM1736 1176h8v6h-8zM1744 1177h8v5h-8zM984 1183h8v5h-8zM992 1183h8v5h-8zM1720 1189h8v5h-8zM2552 1189h8v5h-8zM2560 1188h8v6h-8zM2288 1195h8v5h-8zM1744 1201h8v5h-8zM1992 1200h8v6h-8zM2296 1201h8v5h-8zM856 1207h8v5h-8zM944 1206h8v6h-8zM2288 1207h8v5h-8zM2320 1207h8v5h-8zM2376 1207h8v5h-8zM2384 1207h8v5h-8zM1144 1213h8v5h-8zM2328 1212h8v6h-8zM2232 1219h8v5h-8zM2328 1231h8v5h-8zM1704 1237h8v5h-8zM2384 1237h8v5h-8zM2520 1243h8v5h-8zM2560 1243h8v5h-8zM2576 1249h8v5h-8zM1624 1255h8v5h-8zM1648 1255h8v5h-8zM1752 1255h8v5h-8zM2424 1255h8v5h-8zM1600 1261h8v5h-8zM1624 1261h8v5h-8zM1680 1261h8v5h-8zM736 1267h8v5h-8zM1608 1267h8v5h-8zM1632 1267h8v5h-8zM984 1273h8v5h-8zM1888 1279h8v5h-8zM1808 1291h8v5h-8zM2424 1291h8v5h-8zM1368 1297h8v5h-8zM816 1303h8v5h-8zM2336 1303h8v5h-8zM1352 1309h8v5h-8zM1360 1310h8v4h-8zM920 1315h8v5h-8zM944 1314h8v6h-8zM1344 1315h8v5h-8zM832 1321h8v5h-8zM896 1321h8v5h-8zM920 1321h8v5h-8zM1384 1321h8v5h-8zM1888 1320h8v6h-8zM928 1327h8v5h-8zM952 1327h8v5h-8zM960 1327h8v5h-8zM984 1327h8v5h-8zM912 1333h8v5h-8zM976 1333h8v5h-8zM1680 1334h8v4h-8zM992 1351h8v5h-8zM960 1357h8v5h-8zM1152 1362h8v6h-8zM1160 1363h8v5h-8zM1760 1363h8v5h-8zM1112 1370h8v4h-8zM1144 1369h8v5h-8zM656 1375h8v5h-8zM1128 1375h8v5h-8zM1160 1375h8v5h-8zM1168 1375h8v5h-8zM936 1387h8v5h-8zM944 1387h8v5h-8zM928 1393h8v5h-8zM984 1393h8v5h-8zM1128 1393h8v5h-8zM1584 1393h8v5h-8zM2248 1393h8v5h-8zM1192 1399h8v5h-8zM1752 1399h8v5h-8zM1776 1399h8v5h-8zM2256 1399h8v5h-8zM1480 1405h8v5h-8zM1488 1405h8v5h-8zM1656 1405h8v5h-8zM1312 1411h8v5h-8zM1536 1411h8v5h-8zM1680 1411h8v5h-8zM824 1417h8v5h-8zM1352 1417h8v5h-8zM1456 1417h8v5h-8zM1480 1417h8v5h-8zM1696 1417h8v5h-8zM1760 1417h8v5h-8zM2040 1417h8v5h-8zM1464 1424h8v4h-8zM1584 1423h8v5h-8zM1736 1423h8v5h-8zM1360 1428h8v6h-8zM1560 1430h8v4h-8zM1056 1435h8v5h-8zM2000 1440h8v6h-8zM2008 1447h8v5h-8zM2016 1447h8v5h-8zM2000 1453h8v5h-8zM672 1465h8v5h-8zM952 1483h8v5h-8zM936 1489h8v5h-8zM936 1495h8v5h-8zM1000 1555h8v5h-8zM952 1573h8v5h-8z"/><path fill="#b4a42e" d="M1064 456h8v6h-8zM1136 522h8v6h-8zM904 528h8v6h-8zM912 540h8v6h-8zM1448 624h8v6h-8zM2368 696h8v6h-8zM2384 695h8v7h-8zM2392 696h8v6h-8zM2472 696h8v6h-8zM2360 702h8v6h-8zM2376 702h8v6h-8zM1776 708h8v6h-8zM1744 714h8v6h-8zM1752 714h8v6h-8zM1224 738h8v6h-8zM1248 738h8v6h-8zM1216 744h8v6h-8zM1224 743h8v7h-8zM1232 744h8v6h-8zM1216 750h8v6h-8zM1224 750h8v6h-8zM1240 749h8v7h-8zM1248 750h8v6h-8zM1256 750h8v6h-8zM2568 750h8v6h-8zM2568 755h8v7h-8zM1408 762h8v6h-8zM2568 762h8v6h-8zM808 792h8v6h-8zM1480 792h8v6h-8zM1488 792h8v6h-8zM1480 798h8v6h-8zM1328 804h8v6h-8zM1640 810h8v6h-8zM1648 809h8v7h-8zM1912 810h8v6h-8zM1624 816h8v6h-8zM1656 815h8v7h-8zM1920 816h8v6h-8zM1928 816h8v6h-8zM1936 816h8v6h-8zM2448 816h8v6h-8zM1600 821h8v7h-8zM1624 822h8v6h-8zM1640 822h8v6h-8zM1648 822h8v6h-8zM1656 827h8v7h-8zM1624 834h8v6h-8zM1632 833h8v7h-8zM1640 833h8v7h-8zM1664 833h8v7h-8zM1664 840h8v6h-8zM2552 852h8v6h-8zM1512 858h8v6h-8zM1520 858h8v6h-8zM2376 858h8v6h-8zM1512 864h8v6h-8zM1544 864h8v6h-8zM1480 870h8v6h-8zM968 876h8v6h-8zM1488 876h8v6h-8zM1504 876h8v6h-8zM1512 876h8v6h-8zM1520 876h8v6h-8zM1984 882h8v6h-8zM1624 888h8v6h-8zM1992 888h8v6h-8zM1616 894h8v6h-8zM1680 894h8v6h-8zM2288 893h8v7h-8zM864 900h8v6h-8zM1608 900h8v6h-8zM1616 900h8v6h-8zM1632 900h8v6h-8zM1640 899h8v7h-8zM1648 900h8v6h-8zM1976 900h8v6h-8zM2288 899h8v7h-8zM2312 900h8v6h-8zM1600 905h8v7h-8zM1672 905h8v7h-8zM1680 905h8v7h-8zM2264 906h8v6h-8zM2296 906h8v6h-8zM1592 912h8v6h-8zM1608 912h8v6h-8zM1648 912h8v6h-8zM1656 912h8v6h-8zM1664 911h8v7h-8zM1680 912h8v6h-8zM2296 911h8v7h-8zM2520 911h8v7h-8zM1624 917h8v7h-8zM1384 930h8v6h-8zM1392 936h8v6h-8zM1240 942h8v6h-8zM1400 942h8v6h-8zM1248 947h8v7h-8zM1256 948h8v6h-8zM1696 948h8v6h-8zM1016 954h8v6h-8zM1240 954h8v6h-8zM1248 953h8v7h-8zM2088 954h8v6h-8zM2104 954h8v6h-8zM1616 960h8v6h-8zM1816 960h8v6h-8zM1896 960h8v6h-8zM1976 960h8v6h-8zM2096 959h8v7h-8zM2104 960h8v6h-8zM1848 966h8v6h-8zM1480 972h8v6h-8zM1488 971h8v7h-8zM1632 972h8v6h-8zM1784 972h8v6h-8zM1800 972h8v6h-8zM1992 972h8v6h-8zM1480 978h8v6h-8zM1552 978h8v6h-8zM1888 978h8v6h-8zM1904 978h8v6h-8zM1480 984h8v6h-8zM1488 984h8v6h-8zM1704 984h8v6h-8zM1712 983h8v7h-8zM1680 990h8v6h-8zM1728 990h8v6h-8zM1744 990h8v6h-8zM1792 989h8v7h-8zM1832 989h8v7h-8zM1840 990h8v6h-8zM1848 990h8v6h-8zM1896 990h8v6h-8zM1648 996h8v6h-8zM1864 996h8v6h-8zM1888 996h8v6h-8zM1896 995h8v7h-8zM1904 996h8v6h-8zM1928 996h8v6h-8zM1616 1001h8v7h-8zM1680 1001h8v7h-8zM1728 1001h8v7h-8zM1840 1002h8v6h-8zM1856 1001h8v7h-8zM1912 1001h8v7h-8zM912 1007h8v7h-8zM1616 1008h8v6h-8zM1632 1007h8v7h-8zM1760 1008h8v6h-8zM1944 1008h8v6h-8zM1976 1008h8v6h-8zM2032 1008h8v6h-8zM936 1014h8v6h-8zM1560 1014h8v6h-8zM1696 1014h8v6h-8zM1704 1013h8v7h-8zM1712 1014h8v6h-8zM1744 1014h8v6h-8zM1760 1014h8v6h-8zM1768 1014h8v6h-8zM1784 1014h8v6h-8zM1800 1014h8v6h-8zM1832 1014h8v6h-8zM1880 1014h8v6h-8zM1960 1014h8v6h-8zM1968 1014h8v6h-8zM904 1020h8v6h-8zM936 1020h8v6h-8zM1536 1019h8v7h-8zM1632 1020h8v6h-8zM1656 1019h8v7h-8zM1664 1020h8v6h-8zM1720 1019h8v7h-8zM1760 1019h8v7h-8zM1792 1019h8v7h-8zM1800 1020h8v6h-8zM1840 1019h8v7h-8zM1888 1019h8v7h-8zM1944 1019h8v7h-8zM1968 1020h8v6h-8zM2056 1019h8v7h-8zM2064 1019h8v7h-8zM2096 1020h8v6h-8zM2280 1020h8v6h-8zM904 1026h8v6h-8zM944 1026h8v6h-8zM952 1026h8v6h-8zM1552 1025h8v7h-8zM1608 1026h8v6h-8zM1656 1025h8v7h-8zM1712 1026h8v6h-8zM1808 1025h8v7h-8zM1856 1026h8v6h-8zM2088 1026h8v6h-8zM2192 1026h8v6h-8zM2208 1026h8v6h-8zM2224 1025h8v7h-8zM936 1032h8v6h-8zM1592 1032h8v6h-8zM1640 1032h8v6h-8zM1664 1031h8v7h-8zM1696 1032h8v6h-8zM1808 1031h8v7h-8zM1864 1031h8v7h-8zM1896 1032h8v6h-8zM1992 1032h8v6h-8zM2048 1032h8v6h-8zM2072 1031h8v7h-8zM2080 1032h8v6h-8zM2096 1032h8v6h-8zM2128 1031h8v7h-8zM2216 1032h8v6h-8zM1600 1038h8v6h-8zM1656 1037h8v7h-8zM1728 1038h8v6h-8zM1856 1038h8v6h-8zM1888 1037h8v7h-8zM1912 1038h8v6h-8zM1920 1038h8v6h-8zM1944 1037h8v7h-8zM1952 1038h8v6h-8zM1968 1037h8v7h-8zM1984 1037h8v7h-8zM2016 1038h8v6h-8zM2208 1037h8v7h-8zM2216 1037h8v7h-8zM2248 1037h8v7h-8zM1544 1044h8v6h-8zM1624 1044h8v6h-8zM1680 1044h8v6h-8zM1720 1043h8v7h-8zM1808 1043h8v7h-8zM1816 1044h8v6h-8zM1928 1044h8v6h-8zM1952 1043h8v7h-8zM2032 1043h8v7h-8zM2184 1044h8v6h-8zM2200 1044h8v6h-8zM2232 1044h8v6h-8zM1648 1049h8v7h-8zM1688 1050h8v6h-8zM1880 1050h8v6h-8zM1888 1050h8v6h-8zM1968 1050h8v6h-8zM1976 1050h8v6h-8zM2016 1049h8v7h-8zM2048 1050h8v6h-8zM1608 1055h8v7h-8zM1632 1056h8v6h-8zM1688 1056h8v6h-8zM1704 1055h8v7h-8zM1752 1056h8v6h-8zM1944 1055h8v7h-8zM1968 1056h8v6h-8zM1984 1056h8v6h-8zM2000 1056h8v6h-8zM2064 1055h8v7h-8zM1312 1062h8v6h-8zM1592 1062h8v6h-8zM1688 1062h8v6h-8zM1728 1062h8v6h-8zM1736 1062h8v6h-8zM1768 1061h8v7h-8zM1904 1061h8v7h-8zM2024 1062h8v6h-8zM2056 1061h8v7h-8zM2064 1061h8v7h-8zM1256 1068h8v6h-8zM1592 1068h8v6h-8zM1624 1068h8v6h-8zM1688 1068h8v6h-8zM1712 1067h8v7h-8zM1728 1067h8v7h-8zM1760 1067h8v7h-8zM1800 1067h8v7h-8zM1944 1068h8v6h-8zM1280 1074h8v6h-8zM1336 1073h8v7h-8zM1360 1074h8v6h-8zM1560 1074h8v6h-8zM1608 1074h8v6h-8zM1624 1074h8v6h-8zM1632 1074h8v6h-8zM1672 1074h8v6h-8zM1832 1074h8v6h-8zM1880 1074h8v6h-8zM2040 1073h8v7h-8zM1344 1080h8v6h-8zM1352 1080h8v6h-8zM1400 1080h8v6h-8zM1608 1080h8v6h-8zM1616 1080h8v6h-8zM1648 1080h8v6h-8zM1736 1080h8v6h-8zM1792 1080h8v6h-8zM1800 1080h8v6h-8zM1816 1080h8v6h-8zM2048 1080h8v6h-8zM1296 1086h8v6h-8zM1304 1086h8v6h-8zM1320 1086h8v6h-8zM1344 1085h8v7h-8zM1608 1086h8v6h-8zM1656 1086h8v6h-8zM1688 1085h8v7h-8zM1864 1085h8v7h-8zM2176 1086h8v6h-8zM1320 1092h8v6h-8zM1336 1092h8v6h-8zM1600 1092h8v6h-8zM1624 1092h8v6h-8zM1632 1092h8v6h-8zM1664 1092h8v6h-8zM1672 1092h8v6h-8zM1704 1091h8v7h-8zM1736 1092h8v6h-8zM1752 1091h8v7h-8zM1776 1092h8v6h-8zM1824 1092h8v6h-8zM1840 1092h8v6h-8zM1848 1092h8v6h-8zM1880 1092h8v6h-8zM1896 1092h8v6h-8zM1928 1092h8v6h-8zM1944 1092h8v6h-8zM1968 1091h8v7h-8zM2000 1091h8v7h-8zM2072 1092h8v6h-8zM1800 1097h8v7h-8zM1808 1097h8v7h-8zM1832 1097h8v7h-8zM1888 1098h8v6h-8zM1912 1098h8v6h-8zM1944 1098h8v6h-8zM1312 1104h8v6h-8zM1648 1104h8v6h-8zM1664 1104h8v6h-8zM1776 1104h8v6h-8zM1848 1104h8v6h-8zM1864 1104h8v6h-8zM1872 1104h8v6h-8zM1992 1104h8v6h-8zM2000 1104h8v6h-8zM2056 1104h8v6h-8zM1688 1110h8v6h-8zM1744 1110h8v6h-8zM1760 1109h8v7h-8zM1888 1110h8v6h-8zM1904 1110h8v6h-8zM1928 1110h8v6h-8zM2000 1109h8v7h-8zM2080 1110h8v6h-8zM2168 1110h8v6h-8zM2184 1110h8v6h-8zM2472 1110h8v6h-8zM1664 1116h8v6h-8zM1672 1115h8v7h-8zM1712 1116h8v6h-8zM1968 1116h8v6h-8zM1984 1116h8v6h-8zM1992 1116h8v6h-8zM2016 1116h8v6h-8zM2248 1116h8v6h-8zM2416 1116h8v6h-8zM1712 1122h8v6h-8zM1768 1121h8v7h-8zM2000 1122h8v6h-8zM2136 1122h8v6h-8zM2416 1122h8v6h-8zM2424 1122h8v6h-8zM2432 1122h8v6h-8zM1720 1128h8v6h-8zM1776 1128h8v6h-8zM1872 1128h8v6h-8zM1880 1127h8v7h-8zM2080 1127h8v7h-8zM2104 1127h8v7h-8zM1760 1134h8v6h-8zM1904 1134h8v6h-8zM1856 1140h8v6h-8zM2120 1140h8v6h-8zM1216 1146h8v6h-8zM1824 1146h8v6h-8zM2136 1145h8v7h-8zM1232 1152h8v6h-8zM1264 1152h8v6h-8zM1352 1152h8v6h-8zM1360 1152h8v6h-8zM1584 1152h8v6h-8zM1600 1152h8v6h-8zM1608 1152h8v6h-8zM2120 1152h8v6h-8zM1200 1158h8v6h-8zM1360 1158h8v6h-8zM1496 1157h8v7h-8zM1592 1158h8v6h-8zM1608 1157h8v7h-8zM2112 1158h8v6h-8zM2136 1157h8v7h-8zM1240 1164h8v6h-8zM1408 1164h8v6h-8zM1496 1164h8v6h-8zM1592 1164h8v6h-8zM1400 1170h8v6h-8zM1408 1170h8v6h-8zM1472 1170h8v6h-8zM1480 1170h8v6h-8zM1512 1170h8v6h-8zM1520 1170h8v6h-8zM2144 1170h8v6h-8zM1400 1176h8v6h-8zM1488 1176h8v6h-8zM1528 1176h8v6h-8zM1744 1181h8v7h-8zM1928 1182h8v6h-8zM1736 1187h8v7h-8zM1752 1188h8v6h-8zM1744 1194h8v6h-8zM2552 1194h8v6h-8zM2288 1200h8v6h-8zM2000 1206h8v6h-8zM2296 1205h8v7h-8zM2304 1206h8v6h-8zM2296 1212h8v6h-8zM2344 1212h8v6h-8zM1304 1218h8v6h-8zM1984 1217h8v7h-8zM2000 1218h8v6h-8zM2368 1217h8v7h-8zM1304 1224h8v6h-8zM1824 1224h8v6h-8zM1832 1224h8v6h-8zM2336 1224h8v6h-8zM2360 1223h8v7h-8zM2368 1224h8v6h-8zM1712 1230h8v6h-8zM1736 1229h8v7h-8zM1816 1229h8v7h-8zM2360 1230h8v6h-8zM1176 1236h8v6h-8zM1712 1235h8v7h-8zM1720 1235h8v7h-8zM1768 1235h8v7h-8zM2336 1236h8v6h-8zM2528 1236h8v6h-8zM2544 1235h8v7h-8zM1712 1241h8v7h-8zM2384 1242h8v6h-8zM2568 1242h8v6h-8zM1728 1248h8v6h-8zM1800 1248h8v6h-8zM1688 1254h8v6h-8zM1744 1253h8v7h-8zM1760 1254h8v6h-8zM2528 1253h8v7h-8zM2536 1254h8v6h-8zM2568 1254h8v6h-8zM1608 1260h8v6h-8zM1616 1260h8v6h-8zM1632 1260h8v6h-8zM1640 1259h8v7h-8zM2544 1259h8v7h-8zM1864 1266h8v6h-8zM1928 1266h8v6h-8zM1944 1266h8v6h-8zM1784 1295h8v7h-8zM1360 1314h8v6h-8zM1368 1314h8v6h-8zM1376 1314h8v6h-8zM1384 1314h8v6h-8zM1792 1314h8v6h-8zM1896 1314h8v6h-8zM1368 1320h8v6h-8zM1376 1320h8v6h-8zM1896 1320h8v6h-8zM952 1332h8v6h-8zM968 1332h8v6h-8zM1800 1332h8v6h-8zM920 1338h8v6h-8zM944 1338h8v6h-8zM1736 1338h8v6h-8zM1744 1337h8v7h-8zM1784 1338h8v6h-8zM888 1344h8v6h-8zM920 1344h8v6h-8zM928 1344h8v6h-8zM952 1344h8v6h-8zM1736 1344h8v6h-8zM1744 1344h8v6h-8zM896 1350h8v6h-8zM912 1349h8v7h-8zM968 1349h8v7h-8zM976 1350h8v6h-8zM1008 1350h8v6h-8zM1016 1350h8v6h-8zM1736 1350h8v6h-8zM896 1356h8v6h-8zM952 1356h8v6h-8zM968 1355h8v7h-8zM1136 1356h8v6h-8zM928 1362h8v6h-8zM936 1362h8v6h-8zM960 1362h8v6h-8zM976 1362h8v6h-8zM2224 1362h8v6h-8zM920 1367h8v7h-8zM928 1368h8v6h-8zM1176 1368h8v6h-8zM2224 1368h8v6h-8zM984 1374h8v6h-8zM1136 1374h8v6h-8zM1144 1374h8v6h-8zM1176 1380h8v6h-8zM2208 1380h8v6h-8zM2248 1380h8v6h-8zM1136 1386h8v6h-8zM1160 1386h8v6h-8zM2176 1386h8v6h-8zM2240 1386h8v6h-8zM1104 1392h8v6h-8zM1776 1392h8v6h-8zM2136 1392h8v6h-8zM2144 1392h8v6h-8zM2216 1392h8v6h-8zM2240 1392h8v6h-8zM1160 1398h8v6h-8zM1528 1398h8v6h-8zM1552 1397h8v7h-8zM1608 1398h8v6h-8zM1672 1398h8v6h-8zM2144 1397h8v7h-8zM2232 1398h8v6h-8zM1144 1404h8v6h-8zM1168 1404h8v6h-8zM1528 1403h8v7h-8zM1544 1404h8v6h-8zM1664 1404h8v6h-8zM1720 1403h8v7h-8zM1736 1404h8v6h-8zM1760 1404h8v6h-8zM1768 1403h8v7h-8zM1792 1404h8v6h-8zM1040 1410h8v6h-8zM1088 1410h8v6h-8zM1456 1410h8v6h-8zM1464 1410h8v6h-8zM1472 1410h8v6h-8zM1488 1410h8v6h-8zM1576 1409h8v7h-8zM1616 1409h8v7h-8zM1752 1410h8v6h-8zM1760 1410h8v6h-8zM1768 1410h8v6h-8zM1040 1416h8v6h-8zM1368 1416h8v6h-8zM1376 1416h8v6h-8zM1464 1416h8v6h-8zM1472 1416h8v6h-8zM1488 1416h8v6h-8zM1552 1416h8v6h-8zM1688 1416h8v6h-8zM1736 1416h8v6h-8zM1016 1422h8v6h-8zM1048 1421h8v7h-8zM1136 1422h8v6h-8zM1168 1422h8v6h-8zM1192 1422h8v6h-8zM1376 1421h8v7h-8zM2024 1422h8v6h-8zM2032 1421h8v7h-8zM1056 1428h8v6h-8zM1576 1428h8v6h-8zM1992 1428h8v6h-8zM2000 1428h8v6h-8zM2024 1428h8v6h-8zM1048 1434h8v6h-8zM1128 1433h8v7h-8zM1152 1434h8v6h-8zM2048 1434h8v6h-8zM1024 1440h8v6h-8zM1120 1439h8v7h-8zM2000 1446h8v6h-8zM2032 1452h8v6h-8zM944 1494h8v6h-8zM984 1554h8v6h-8zM992 1553h8v7h-8zM992 1560h8v6h-8zM944 1572h8v6h-8zM944 1578h8v6h-8z"/><path fill="#bc8a28" d="M1392 473h8v7h-8zM1400 472h8v8h-8zM1408 479h8v7h-8zM2384 689h8v7h-8zM2376 695h8v7h-8zM1240 743h8v7h-8zM2544 755h8v7h-8zM1472 797h8v7h-8zM1488 797h8v7h-8zM1480 803h8v7h-8zM1632 815h8v7h-8zM1640 815h8v7h-8zM1648 815h8v7h-8zM1664 821h8v7h-8zM1616 827h8v7h-8zM1632 826h8v8h-8zM1648 827h8v7h-8zM1664 827h8v7h-8zM1672 827h8v7h-8zM1648 833h8v7h-8zM1648 839h8v7h-8zM1984 887h8v7h-8zM1648 893h8v7h-8zM1688 893h8v7h-8zM1992 893h8v7h-8zM1624 899h8v7h-8zM2280 898h8v8h-8zM2304 899h8v7h-8zM1608 905h8v7h-8zM1632 904h8v8h-8zM1648 905h8v7h-8zM1624 911h8v7h-8zM1672 910h8v8h-8zM1616 917h8v7h-8zM1400 935h8v7h-8zM1392 941h8v7h-8zM1768 964h8v8h-8zM1768 971h8v7h-8zM1824 977h8v7h-8zM1808 982h8v8h-8zM1864 983h8v7h-8zM1872 982h8v8h-8zM1736 989h8v7h-8zM1760 989h8v7h-8zM1776 988h8v8h-8zM1824 989h8v7h-8zM1680 995h8v7h-8zM1704 995h8v7h-8zM1936 995h8v7h-8zM1704 1000h8v8h-8zM1744 1000h8v8h-8zM1752 1001h8v7h-8zM1792 1000h8v8h-8zM1824 1001h8v7h-8zM1848 1001h8v7h-8zM1928 1001h8v7h-8zM1696 1007h8v7h-8zM1744 1006h8v8h-8zM1768 1006h8v8h-8zM1784 1007h8v7h-8zM1800 1007h8v7h-8zM1824 1007h8v7h-8zM1832 1007h8v7h-8zM1840 1007h8v7h-8zM1864 1007h8v7h-8zM2064 1007h8v7h-8zM2096 1006h8v8h-8zM912 1013h8v7h-8zM1656 1013h8v7h-8zM1664 1013h8v7h-8zM1672 1013h8v7h-8zM1680 1013h8v7h-8zM1720 1012h8v8h-8zM1752 1012h8v8h-8zM1792 1013h8v7h-8zM1824 1013h8v7h-8zM1848 1013h8v7h-8zM1912 1013h8v7h-8zM2096 1012h8v8h-8zM2112 1013h8v7h-8zM896 1019h8v7h-8zM1624 1019h8v7h-8zM1768 1018h8v8h-8zM1824 1018h8v8h-8zM1864 1019h8v7h-8zM1912 1019h8v7h-8zM2112 1019h8v7h-8zM928 1025h8v7h-8zM936 1025h8v7h-8zM1624 1025h8v7h-8zM1648 1025h8v7h-8zM1672 1025h8v7h-8zM1696 1024h8v8h-8zM1704 1025h8v7h-8zM1728 1024h8v8h-8zM1736 1024h8v8h-8zM1776 1025h8v7h-8zM1784 1025h8v7h-8zM1800 1025h8v7h-8zM1840 1024h8v8h-8zM1912 1025h8v7h-8zM1920 1025h8v7h-8zM1944 1025h8v7h-8zM2112 1025h8v7h-8zM2176 1025h8v7h-8zM904 1031h8v7h-8zM912 1031h8v7h-8zM920 1031h8v7h-8zM1624 1030h8v8h-8zM1712 1031h8v7h-8zM1720 1030h8v8h-8zM1736 1031h8v7h-8zM1744 1031h8v7h-8zM1760 1031h8v7h-8zM1784 1030h8v8h-8zM1840 1030h8v8h-8zM1856 1030h8v8h-8zM1872 1030h8v8h-8zM1912 1030h8v8h-8zM1944 1031h8v7h-8zM1960 1031h8v7h-8zM2192 1030h8v8h-8zM920 1037h8v7h-8zM1592 1036h8v8h-8zM1632 1036h8v8h-8zM1648 1037h8v7h-8zM1688 1036h8v8h-8zM1704 1037h8v7h-8zM1720 1037h8v7h-8zM1784 1037h8v7h-8zM1824 1036h8v8h-8zM1848 1037h8v7h-8zM2080 1037h8v7h-8zM2088 1037h8v7h-8zM2200 1037h8v7h-8zM2264 1037h8v7h-8zM1648 1042h8v8h-8zM1656 1043h8v7h-8zM1672 1043h8v7h-8zM1728 1042h8v8h-8zM1752 1043h8v7h-8zM1784 1043h8v7h-8zM1800 1043h8v7h-8zM1848 1043h8v7h-8zM1856 1042h8v8h-8zM1864 1043h8v7h-8zM1896 1043h8v7h-8zM1920 1043h8v7h-8zM1944 1043h8v7h-8zM2024 1043h8v7h-8zM2216 1042h8v8h-8zM1528 1049h8v7h-8zM1592 1049h8v7h-8zM1624 1049h8v7h-8zM1704 1049h8v7h-8zM1712 1049h8v7h-8zM1720 1048h8v8h-8zM1808 1049h8v7h-8zM1904 1048h8v8h-8zM1912 1049h8v7h-8zM1928 1049h8v7h-8zM1992 1049h8v7h-8zM2240 1048h8v8h-8zM2248 1049h8v7h-8zM1624 1055h8v7h-8zM1640 1055h8v7h-8zM1648 1054h8v8h-8zM1656 1054h8v8h-8zM1712 1055h8v7h-8zM1720 1054h8v8h-8zM1736 1055h8v7h-8zM1776 1055h8v7h-8zM1816 1055h8v7h-8zM1840 1054h8v8h-8zM1848 1055h8v7h-8zM1856 1054h8v8h-8zM1896 1055h8v7h-8zM1992 1055h8v7h-8zM2048 1054h8v8h-8zM1576 1061h8v7h-8zM1632 1060h8v8h-8zM1704 1060h8v8h-8zM1712 1061h8v7h-8zM1720 1061h8v7h-8zM1752 1060h8v8h-8zM1760 1061h8v7h-8zM1776 1061h8v7h-8zM1792 1061h8v7h-8zM1808 1061h8v7h-8zM1848 1061h8v7h-8zM1856 1060h8v8h-8zM1872 1061h8v7h-8zM1880 1061h8v7h-8zM1912 1060h8v8h-8zM1928 1061h8v7h-8zM1960 1061h8v7h-8zM1976 1060h8v8h-8zM1984 1061h8v7h-8zM2008 1060h8v8h-8zM2048 1061h8v7h-8zM1280 1067h8v7h-8zM1336 1067h8v7h-8zM1616 1067h8v7h-8zM1648 1067h8v7h-8zM1696 1067h8v7h-8zM1776 1067h8v7h-8zM1792 1067h8v7h-8zM1832 1066h8v8h-8zM1880 1067h8v7h-8zM1896 1067h8v7h-8zM1920 1067h8v7h-8zM2024 1067h8v7h-8zM2032 1067h8v7h-8zM1288 1073h8v7h-8zM1320 1073h8v7h-8zM1344 1073h8v7h-8zM1568 1073h8v7h-8zM1600 1073h8v7h-8zM1640 1073h8v7h-8zM1680 1073h8v7h-8zM1720 1073h8v7h-8zM1760 1073h8v7h-8zM1784 1073h8v7h-8zM1800 1073h8v7h-8zM1824 1073h8v7h-8zM1840 1073h8v7h-8zM1848 1072h8v8h-8zM1888 1073h8v7h-8zM1896 1072h8v8h-8zM1904 1073h8v7h-8zM1960 1073h8v7h-8zM1968 1073h8v7h-8zM2000 1073h8v7h-8zM2024 1073h8v7h-8zM2032 1073h8v7h-8zM2048 1072h8v8h-8zM2064 1073h8v7h-8zM1288 1078h8v8h-8zM1296 1079h8v7h-8zM1312 1078h8v8h-8zM1632 1079h8v7h-8zM1672 1078h8v8h-8zM1696 1079h8v7h-8zM1712 1079h8v7h-8zM1720 1079h8v7h-8zM1752 1078h8v8h-8zM1832 1078h8v8h-8zM1864 1078h8v8h-8zM1872 1079h8v7h-8zM1880 1079h8v7h-8zM1904 1079h8v7h-8zM1920 1079h8v7h-8zM1960 1079h8v7h-8zM1968 1079h8v7h-8zM2008 1079h8v7h-8zM2016 1078h8v8h-8zM2024 1079h8v7h-8zM1272 1085h8v7h-8zM1312 1085h8v7h-8zM1336 1085h8v7h-8zM1624 1084h8v8h-8zM1632 1084h8v8h-8zM1720 1085h8v7h-8zM1728 1085h8v7h-8zM1776 1085h8v7h-8zM1808 1085h8v7h-8zM1848 1084h8v8h-8zM1872 1085h8v7h-8zM2000 1085h8v7h-8zM2024 1084h8v8h-8zM2080 1085h8v7h-8zM1744 1091h8v7h-8zM1864 1090h8v8h-8zM1904 1091h8v7h-8zM1920 1091h8v7h-8zM2064 1090h8v8h-8zM1728 1097h8v7h-8zM1736 1096h8v8h-8zM1744 1097h8v7h-8zM1760 1097h8v7h-8zM1768 1097h8v7h-8zM1784 1097h8v7h-8zM1792 1096h8v8h-8zM2136 1097h8v7h-8zM2152 1097h8v7h-8zM1632 1103h8v7h-8zM1728 1102h8v8h-8zM1752 1102h8v8h-8zM1760 1103h8v7h-8zM1784 1103h8v7h-8zM1896 1103h8v7h-8zM1928 1103h8v7h-8zM1648 1109h8v7h-8zM1680 1109h8v7h-8zM1704 1108h8v8h-8zM1712 1109h8v7h-8zM1728 1109h8v7h-8zM1856 1109h8v7h-8zM1872 1109h8v7h-8zM2104 1109h8v7h-8zM1760 1115h8v7h-8zM1784 1115h8v7h-8zM1840 1115h8v7h-8zM2000 1115h8v7h-8zM2008 1115h8v7h-8zM2080 1115h8v7h-8zM2104 1115h8v7h-8zM2136 1114h8v8h-8zM2152 1115h8v7h-8zM1664 1121h8v7h-8zM1688 1121h8v7h-8zM1800 1121h8v7h-8zM2096 1121h8v7h-8zM2128 1121h8v7h-8zM2240 1120h8v8h-8zM2248 1121h8v7h-8zM1784 1127h8v7h-8zM1200 1139h8v7h-8zM1224 1145h8v7h-8zM1216 1150h8v8h-8zM2152 1151h8v7h-8zM1208 1156h8v8h-8zM2144 1157h8v7h-8zM1200 1162h8v8h-8zM1232 1162h8v8h-8zM1400 1163h8v7h-8zM2128 1163h8v7h-8zM1392 1169h8v7h-8zM1504 1169h8v7h-8zM1600 1169h8v7h-8zM1608 1169h8v7h-8zM1744 1187h8v7h-8zM2560 1193h8v7h-8zM2376 1211h8v7h-8zM1312 1223h8v7h-8zM2352 1222h8v8h-8zM1304 1229h8v7h-8zM1312 1229h8v7h-8zM1728 1229h8v7h-8zM1752 1229h8v7h-8zM1824 1229h8v7h-8zM1832 1229h8v7h-8zM1992 1229h8v7h-8zM2352 1229h8v7h-8zM1720 1241h8v7h-8zM2536 1241h8v7h-8zM2544 1240h8v8h-8zM1712 1247h8v7h-8zM2536 1247h8v7h-8zM1704 1253h8v7h-8zM2568 1259h8v7h-8zM1936 1265h8v7h-8zM1792 1295h8v7h-8zM1800 1295h8v7h-8zM1784 1300h8v8h-8zM1792 1301h8v7h-8zM1792 1306h8v8h-8zM1776 1313h8v7h-8zM944 1331h8v7h-8zM1784 1331h8v7h-8zM1792 1331h8v7h-8zM912 1337h8v7h-8zM936 1337h8v7h-8zM960 1337h8v7h-8zM1000 1337h8v7h-8zM1800 1337h8v7h-8zM960 1343h8v7h-8zM1800 1343h8v7h-8zM1744 1349h8v7h-8zM1752 1349h8v7h-8zM1176 1361h8v7h-8zM1152 1367h8v7h-8zM1152 1373h8v7h-8zM1144 1379h8v7h-8zM2136 1385h8v7h-8zM2232 1385h8v7h-8zM1080 1390h8v8h-8zM1712 1391h8v7h-8zM2152 1391h8v7h-8zM2192 1391h8v7h-8zM2224 1391h8v7h-8zM2232 1391h8v7h-8zM1704 1396h8v8h-8zM1712 1396h8v8h-8zM1760 1397h8v7h-8zM2136 1397h8v7h-8zM1072 1402h8v8h-8zM1160 1403h8v7h-8zM1552 1403h8v7h-8zM1680 1402h8v8h-8zM1688 1403h8v7h-8zM1712 1403h8v7h-8zM1744 1402h8v8h-8zM1752 1402h8v8h-8zM1776 1402h8v8h-8zM2208 1403h8v7h-8zM1064 1409h8v7h-8zM1112 1408h8v8h-8zM1120 1409h8v7h-8zM1152 1409h8v7h-8zM1552 1408h8v8h-8zM1560 1409h8v7h-8zM1592 1409h8v7h-8zM1600 1409h8v7h-8zM1728 1409h8v7h-8zM1736 1409h8v7h-8zM1064 1415h8v7h-8zM1088 1414h8v8h-8zM1104 1415h8v7h-8zM1112 1415h8v7h-8zM1144 1415h8v7h-8zM1608 1415h8v7h-8zM1744 1414h8v8h-8zM1072 1421h8v7h-8zM1112 1421h8v7h-8zM1152 1421h8v7h-8zM1352 1421h8v7h-8zM1360 1420h8v8h-8zM1368 1421h8v7h-8zM1552 1421h8v7h-8zM1560 1420h8v8h-8zM1032 1427h8v7h-8zM1080 1426h8v8h-8zM1112 1426h8v8h-8zM1128 1426h8v8h-8zM1376 1427h8v7h-8zM1104 1432h8v8h-8zM1112 1433h8v7h-8zM2016 1432h8v8h-8zM1088 1439h8v7h-8zM1104 1439h8v7h-8zM1136 1445h8v7h-8zM2016 1450h8v8h-8zM944 1486h8v8h-8z"/><path fill="#bc6a22" d="M1400 466h8v8h-8zM1448 616h8v8h-8zM1456 616h8v8h-8zM1456 621h8v9h-8zM1640 826h8v8h-8zM1672 832h8v8h-8zM1632 892h8v8h-8zM1984 892h8v8h-8zM1664 898h8v8h-8zM1992 898h8v8h-8zM2296 898h8v8h-8zM1624 903h8v9h-8zM1640 904h8v8h-8zM1656 904h8v8h-8zM2288 904h8v8h-8zM1632 909h8v9h-8zM1656 922h8v8h-8zM1792 976h8v8h-8zM1816 976h8v8h-8zM1832 976h8v8h-8zM1696 994h8v8h-8zM1712 994h8v8h-8zM1808 993h8v9h-8zM1832 994h8v8h-8zM1840 994h8v8h-8zM1776 1000h8v8h-8zM1784 1000h8v8h-8zM1816 1000h8v8h-8zM1888 1000h8v8h-8zM1920 999h8v9h-8zM936 1006h8v8h-8zM1712 1006h8v8h-8zM1776 1005h8v9h-8zM1808 1006h8v8h-8zM1688 1012h8v8h-8zM1728 1012h8v8h-8zM1776 1012h8v8h-8zM1840 1011h8v9h-8zM1872 1012h8v8h-8zM2088 1012h8v8h-8zM912 1018h8v8h-8zM928 1018h8v8h-8zM1712 1018h8v8h-8zM1752 1018h8v8h-8zM1784 1018h8v8h-8zM1856 1018h8v8h-8zM1920 1018h8v8h-8zM2104 1018h8v8h-8zM912 1024h8v8h-8zM920 1023h8v9h-8zM1768 1024h8v8h-8zM1792 1023h8v9h-8zM1608 1030h8v8h-8zM1648 1030h8v8h-8zM1688 1029h8v9h-8zM1768 1030h8v8h-8zM1776 1029h8v9h-8zM1792 1030h8v8h-8zM1800 1030h8v8h-8zM1816 1030h8v8h-8zM1832 1029h8v9h-8zM1848 1030h8v8h-8zM1880 1030h8v8h-8zM1696 1035h8v9h-8zM1736 1036h8v8h-8zM1744 1035h8v9h-8zM1752 1036h8v8h-8zM1760 1036h8v8h-8zM1768 1036h8v8h-8zM1816 1035h8v9h-8zM1832 1035h8v9h-8zM1840 1036h8v8h-8zM1880 1035h8v9h-8zM2024 1036h8v8h-8zM2232 1036h8v8h-8zM1664 1042h8v8h-8zM1688 1041h8v9h-8zM1696 1042h8v8h-8zM1704 1042h8v8h-8zM1712 1041h8v9h-8zM1736 1042h8v8h-8zM1768 1042h8v8h-8zM1776 1041h8v9h-8zM1792 1041h8v9h-8zM1832 1042h8v8h-8zM1840 1042h8v8h-8zM1888 1042h8v8h-8zM2256 1041h8v9h-8zM1608 1047h8v9h-8zM1664 1048h8v8h-8zM1696 1048h8v8h-8zM1728 1048h8v8h-8zM1736 1048h8v8h-8zM1744 1048h8v8h-8zM1752 1048h8v8h-8zM1776 1047h8v9h-8zM1792 1047h8v9h-8zM1824 1048h8v8h-8zM1840 1048h8v8h-8zM1848 1047h8v9h-8zM1872 1048h8v8h-8zM1920 1048h8v8h-8zM1960 1048h8v8h-8zM1552 1054h8v8h-8zM1672 1053h8v9h-8zM1680 1054h8v8h-8zM1696 1054h8v8h-8zM1728 1053h8v9h-8zM1744 1054h8v8h-8zM1760 1054h8v8h-8zM1768 1054h8v8h-8zM1784 1054h8v8h-8zM1800 1054h8v8h-8zM1832 1054h8v8h-8zM1872 1053h8v9h-8zM1880 1053h8v9h-8zM2008 1054h8v8h-8zM2016 1054h8v8h-8zM2032 1054h8v8h-8zM2040 1054h8v8h-8zM1624 1060h8v8h-8zM1648 1060h8v8h-8zM1696 1060h8v8h-8zM1744 1059h8v9h-8zM1784 1060h8v8h-8zM1800 1060h8v8h-8zM1816 1060h8v8h-8zM1824 1060h8v8h-8zM1832 1060h8v8h-8zM2000 1060h8v8h-8zM2016 1060h8v8h-8zM2032 1060h8v8h-8zM1328 1066h8v8h-8zM1352 1066h8v8h-8zM1720 1065h8v9h-8zM1736 1065h8v9h-8zM1752 1065h8v9h-8zM1768 1066h8v8h-8zM1808 1066h8v8h-8zM1816 1065h8v9h-8zM1824 1066h8v8h-8zM1840 1066h8v8h-8zM1872 1066h8v8h-8zM1936 1065h8v9h-8zM1968 1066h8v8h-8zM1984 1066h8v8h-8zM2000 1066h8v8h-8zM2008 1066h8v8h-8zM1328 1072h8v8h-8zM1592 1072h8v8h-8zM1712 1072h8v8h-8zM1728 1072h8v8h-8zM1736 1072h8v8h-8zM1752 1071h8v9h-8zM1768 1072h8v8h-8zM1792 1071h8v9h-8zM1808 1072h8v8h-8zM1856 1072h8v8h-8zM1936 1072h8v8h-8zM1976 1072h8v8h-8zM1992 1072h8v8h-8zM2016 1071h8v9h-8zM1336 1078h8v8h-8zM1360 1078h8v8h-8zM1624 1078h8v8h-8zM1744 1077h8v9h-8zM1760 1077h8v9h-8zM1768 1077h8v9h-8zM1776 1077h8v9h-8zM1784 1077h8v9h-8zM1840 1078h8v8h-8zM1848 1078h8v8h-8zM1856 1078h8v8h-8zM1888 1078h8v8h-8zM1896 1078h8v8h-8zM1984 1078h8v8h-8zM2000 1078h8v8h-8zM1328 1083h8v9h-8zM1576 1084h8v8h-8zM1672 1084h8v8h-8zM1680 1084h8v8h-8zM1760 1084h8v8h-8zM1792 1084h8v8h-8zM1800 1084h8v8h-8zM1816 1084h8v8h-8zM1824 1083h8v9h-8zM1832 1084h8v8h-8zM1888 1084h8v8h-8zM1920 1084h8v8h-8zM1944 1083h8v9h-8zM2016 1084h8v8h-8zM2072 1084h8v8h-8zM1816 1089h8v9h-8zM1992 1090h8v8h-8zM2136 1090h8v8h-8zM1664 1096h8v8h-8zM1816 1096h8v8h-8zM1904 1096h8v8h-8zM2112 1095h8v9h-8zM2160 1096h8v8h-8zM1792 1101h8v9h-8zM1816 1102h8v8h-8zM1824 1102h8v8h-8zM1840 1101h8v9h-8zM1880 1102h8v8h-8zM2112 1101h8v9h-8zM2136 1102h8v8h-8zM2152 1102h8v8h-8zM1784 1108h8v8h-8zM2136 1108h8v8h-8zM2144 1108h8v8h-8zM2152 1108h8v8h-8zM2256 1107h8v9h-8zM1648 1114h8v8h-8zM2112 1120h8v8h-8zM2120 1119h8v9h-8zM2160 1120h8v8h-8zM2256 1120h8v8h-8zM2112 1126h8v8h-8zM2120 1126h8v8h-8zM1224 1149h8v9h-8zM2136 1150h8v8h-8zM2144 1150h8v8h-8zM2160 1150h8v8h-8zM1280 1156h8v8h-8zM2152 1156h8v8h-8zM1392 1162h8v8h-8zM1488 1168h8v8h-8zM1496 1168h8v8h-8zM1496 1174h8v8h-8zM1728 1221h8v9h-8zM1728 1233h8v9h-8zM1752 1234h8v8h-8zM2368 1234h8v8h-8zM1744 1240h8v8h-8zM1752 1240h8v8h-8zM1760 1240h8v8h-8zM2544 1246h8v8h-8zM2568 1246h8v8h-8zM2520 1252h8v8h-8zM888 1336h8v8h-8zM952 1336h8v8h-8zM976 1336h8v8h-8zM912 1342h8v8h-8zM944 1341h8v9h-8zM944 1348h8v8h-8zM912 1354h8v8h-8zM1152 1378h8v8h-8zM2192 1384h8v8h-8zM2208 1383h8v9h-8zM1744 1390h8v8h-8zM2208 1390h8v8h-8zM1128 1396h8v8h-8zM1720 1396h8v8h-8zM1744 1396h8v8h-8zM1560 1401h8v9h-8zM1568 1402h8v8h-8zM1576 1401h8v9h-8zM1704 1402h8v8h-8zM2224 1402h8v8h-8zM1056 1408h8v8h-8zM1072 1408h8v8h-8zM1136 1408h8v8h-8zM1120 1413h8v9h-8zM1136 1414h8v8h-8zM1360 1414h8v8h-8zM1544 1414h8v8h-8zM1560 1414h8v8h-8zM1568 1414h8v8h-8zM1576 1414h8v8h-8zM1600 1414h8v8h-8zM1056 1420h8v8h-8zM1080 1419h8v9h-8zM1120 1420h8v8h-8zM1128 1420h8v8h-8zM1088 1426h8v8h-8zM1104 1426h8v8h-8zM1120 1425h8v9h-8zM2032 1426h8v8h-8zM2008 1432h8v8h-8zM1080 1438h8v8h-8zM2016 1438h8v8h-8zM2024 1438h8v8h-8z"/><path fill="#b4461e" d="M1784 993h8v9h-8zM1808 1010h8v10h-8zM1744 1017h8v9h-8zM1776 1016h8v10h-8zM2088 1016h8v10h-8zM1752 1023h8v9h-8zM1816 1023h8v9h-8zM1824 1022h8v10h-8zM1864 1023h8v9h-8zM1728 1029h8v9h-8zM1752 1028h8v10h-8zM1824 1029h8v9h-8zM2224 1028h8v10h-8zM2232 1028h8v10h-8zM1672 1035h8v9h-8zM1712 1034h8v10h-8zM1776 1034h8v10h-8zM1792 1034h8v10h-8zM1800 1035h8v9h-8zM1808 1035h8v9h-8zM1864 1035h8v9h-8zM1872 1034h8v10h-8zM2224 1035h8v9h-8zM2240 1034h8v10h-8zM1744 1040h8v10h-8zM1760 1040h8v10h-8zM1824 1040h8v10h-8zM1872 1041h8v9h-8zM2208 1041h8v9h-8zM1632 1047h8v9h-8zM1760 1046h8v10h-8zM1768 1047h8v9h-8zM1784 1046h8v10h-8zM1800 1046h8v10h-8zM1816 1047h8v9h-8zM1832 1047h8v9h-8zM1792 1053h8v9h-8zM1808 1052h8v10h-8zM1824 1053h8v9h-8zM1864 1053h8v9h-8zM2024 1053h8v9h-8zM1840 1059h8v9h-8zM1864 1059h8v9h-8zM1896 1059h8v9h-8zM1744 1064h8v10h-8zM1784 1065h8v9h-8zM1856 1064h8v10h-8zM1888 1065h8v9h-8zM1976 1065h8v9h-8zM1992 1065h8v9h-8zM2016 1064h8v10h-8zM1744 1071h8v9h-8zM1776 1071h8v9h-8zM1816 1070h8v10h-8zM1872 1070h8v10h-8zM2008 1071h8v9h-8zM1328 1077h8v9h-8zM1680 1077h8v9h-8zM1808 1077h8v9h-8zM1944 1076h8v10h-8zM2040 1077h8v9h-8zM1752 1082h8v10h-8zM1768 1082h8v10h-8zM1784 1082h8v10h-8zM1880 1083h8v9h-8zM1792 1088h8v10h-8zM1832 1089h8v9h-8zM2120 1101h8v9h-8zM2112 1106h8v10h-8zM2128 1106h8v10h-8zM2096 1113h8v9h-8zM2128 1113h8v9h-8zM1728 1239h8v9h-8zM2552 1239h8v9h-8zM1744 1245h8v9h-8zM1752 1245h8v9h-8zM1720 1251h8v9h-8zM2544 1251h8v9h-8zM2216 1377h8v9h-8zM2216 1383h8v9h-8zM1736 1395h8v9h-8zM1728 1401h8v9h-8zM1568 1407h8v9h-8zM1584 1407h8v9h-8zM1072 1413h8v9h-8zM1096 1413h8v9h-8zM1104 1419h8v9h-8zM1096 1425h8v9h-8zM2016 1425h8v9h-8z"/><path fill="#6f6d4a" d="M1432 295h8v3h-8zM1480 294h8v3h-8zM1488 294h8v3h-8zM1456 307h8v3h-8zM1488 307h8v3h-8zM1504 307h8v3h-8zM1464 313h8v3h-8zM1480 312h8v3h-8zM1536 312h8v3h-8zM1544 313h8v3h-8zM1448 318h8v3h-8zM1456 318h8v3h-8zM1472 318h8v3h-8zM1424 325h8v3h-8zM1504 325h8v3h-8zM1528 324h8v3h-8zM1536 324h8v3h-8zM1128 330h8v3h-8zM1512 330h8v3h-8zM1512 336h8v3h-8zM1528 336h8v3h-8zM1432 343h8v3h-8zM1440 343h8v3h-8zM1448 342h8v3h-8zM1536 343h8v3h-8zM1408 349h8v3h-8zM1464 349h8v3h-8zM1464 354h8v3h-8zM1504 355h8v3h-8zM1520 354h8v3h-8zM1480 361h8v3h-8zM1504 360h8v3h-8zM1544 360h8v3h-8zM1560 361h8v3h-8zM1568 360h8v3h-8zM1512 366h8v3h-8zM1544 366h8v3h-8zM1528 372h8v3h-8zM1544 372h8v3h-8zM1552 372h8v3h-8zM1568 373h8v3h-8zM1016 432h8v3h-8zM1024 432h8v3h-8zM1032 432h8v3h-8zM1016 444h8v3h-8zM952 450h8v3h-8zM1384 450h8v3h-8zM928 456h8v3h-8zM1352 457h8v3h-8zM1328 462h8v3h-8zM1376 463h8v3h-8zM1392 462h8v3h-8zM1400 462h8v3h-8zM1440 463h8v3h-8zM1544 462h8v3h-8zM1816 462h8v3h-8zM928 468h8v3h-8zM1304 469h8v3h-8zM1312 468h8v3h-8zM1336 469h8v3h-8zM1344 468h8v3h-8zM1352 468h8v3h-8zM1360 468h8v3h-8zM1368 468h8v3h-8zM1392 468h8v3h-8zM1408 469h8v3h-8zM1464 469h8v3h-8zM1096 475h8v3h-8zM1312 474h8v3h-8zM1320 475h8v3h-8zM1344 474h8v3h-8zM1376 474h8v3h-8zM1416 475h8v3h-8zM1424 474h8v3h-8zM1432 474h8v3h-8zM1448 475h8v3h-8zM912 480h8v3h-8zM968 481h8v3h-8zM1048 480h8v3h-8zM1248 481h8v3h-8zM1328 480h8v3h-8zM1336 481h8v3h-8zM1352 480h8v3h-8zM1360 480h8v3h-8zM1376 480h8v3h-8zM1400 480h8v3h-8zM1432 480h8v3h-8zM1456 480h8v3h-8zM896 487h8v3h-8zM928 486h8v3h-8zM968 486h8v3h-8zM1104 486h8v3h-8zM1136 487h8v3h-8zM1352 486h8v3h-8zM1376 486h8v3h-8zM1400 486h8v3h-8zM1408 487h8v3h-8zM1416 487h8v3h-8zM944 492h8v3h-8zM1088 493h8v3h-8zM1312 492h8v3h-8zM1328 492h8v3h-8zM1376 492h8v3h-8zM1392 493h8v3h-8zM1408 492h8v3h-8zM1416 492h8v3h-8zM1440 493h8v3h-8zM1528 492h8v3h-8zM1456 498h8v3h-8zM1464 498h8v3h-8zM1472 498h8v3h-8zM1512 498h8v3h-8zM928 504h8v3h-8zM1104 505h8v3h-8zM1120 504h8v3h-8zM1192 504h8v3h-8zM1368 505h8v3h-8zM1392 505h8v3h-8zM1512 504h8v3h-8zM1184 510h8v3h-8zM1368 510h8v3h-8zM1392 511h8v3h-8zM952 517h8v3h-8zM1080 517h8v3h-8zM1344 516h8v3h-8zM1416 517h8v3h-8zM880 522h8v3h-8zM984 522h8v3h-8zM1008 522h8v3h-8zM1232 523h8v3h-8zM888 528h8v3h-8zM928 528h8v3h-8zM960 528h8v3h-8zM976 528h8v3h-8zM1016 528h8v3h-8zM1040 528h8v3h-8zM1048 528h8v3h-8zM1240 528h8v3h-8zM1320 528h8v3h-8zM1360 528h8v3h-8zM1448 528h8v3h-8zM1456 528h8v3h-8zM1536 528h8v3h-8zM840 534h8v3h-8zM928 534h8v3h-8zM1056 535h8v3h-8zM888 540h8v3h-8zM1192 540h8v3h-8zM1336 540h8v3h-8zM1368 541h8v3h-8zM904 546h8v3h-8zM1104 546h8v3h-8zM1144 546h8v3h-8zM1160 546h8v3h-8zM1168 546h8v3h-8zM1192 546h8v3h-8zM920 552h8v3h-8zM1144 552h8v3h-8zM1352 552h8v3h-8zM1376 552h8v3h-8zM1424 552h8v3h-8zM800 559h8v3h-8zM832 558h8v3h-8zM1080 559h8v3h-8zM1224 559h8v3h-8zM1400 559h8v3h-8zM1016 565h8v3h-8zM1200 565h8v3h-8zM1384 576h8v3h-8zM1528 576h8v3h-8zM1504 589h8v3h-8zM1448 594h8v3h-8zM1432 600h8v3h-8zM1304 606h8v3h-8zM1336 606h8v3h-8zM1384 607h8v3h-8zM1312 613h8v3h-8zM1320 613h8v3h-8zM1024 618h8v3h-8zM1312 618h8v3h-8zM1336 619h8v3h-8zM1504 618h8v3h-8zM1648 618h8v3h-8zM1360 624h8v3h-8zM1376 625h8v3h-8zM1384 624h8v3h-8zM1496 624h8v3h-8zM1024 630h8v3h-8zM1288 630h8v3h-8zM1128 637h8v3h-8zM1336 636h8v3h-8zM1376 636h8v3h-8zM1296 642h8v3h-8zM1448 642h8v3h-8zM1376 648h8v3h-8zM1680 660h8v3h-8zM1368 673h8v3h-8zM1488 672h8v3h-8zM1808 673h8v3h-8zM2456 672h8v3h-8zM1360 678h8v3h-8zM1368 679h8v3h-8zM1408 678h8v3h-8zM1448 678h8v3h-8zM1024 685h8v3h-8zM1072 691h8v3h-8zM1376 691h8v3h-8zM1384 690h8v3h-8zM1472 690h8v3h-8zM1936 690h8v3h-8zM984 697h8v3h-8zM1040 697h8v3h-8zM1056 696h8v3h-8zM1096 697h8v3h-8zM1128 697h8v3h-8zM1472 696h8v3h-8zM1072 703h8v3h-8zM1080 703h8v3h-8zM1120 703h8v3h-8zM1128 703h8v3h-8zM1144 703h8v3h-8zM1384 703h8v3h-8zM1448 702h8v3h-8zM1000 709h8v3h-8zM1032 709h8v3h-8zM1056 709h8v3h-8zM1072 709h8v3h-8zM1080 708h8v3h-8zM1088 709h8v3h-8zM1096 709h8v3h-8zM1160 708h8v3h-8zM1376 708h8v3h-8zM2192 708h8v3h-8zM968 714h8v3h-8zM992 714h8v3h-8zM1008 715h8v3h-8zM1024 714h8v3h-8zM1040 715h8v3h-8zM1064 714h8v3h-8zM1072 714h8v3h-8zM1080 714h8v3h-8zM1088 714h8v3h-8zM1096 715h8v3h-8zM1104 714h8v3h-8zM1112 715h8v3h-8zM1128 714h8v3h-8zM1184 715h8v3h-8zM1000 721h8v3h-8zM1016 721h8v3h-8zM1048 720h8v3h-8zM1096 720h8v3h-8zM1104 720h8v3h-8zM1128 720h8v3h-8zM1136 721h8v3h-8zM1144 721h8v3h-8zM968 727h8v3h-8zM992 727h8v3h-8zM1016 727h8v3h-8zM1024 726h8v3h-8zM1032 727h8v3h-8zM1040 726h8v3h-8zM1064 726h8v3h-8zM1072 726h8v3h-8zM1088 726h8v3h-8zM1104 726h8v3h-8zM1112 726h8v3h-8zM1120 726h8v3h-8zM1712 726h8v3h-8zM960 733h8v3h-8zM1000 733h8v3h-8zM1008 733h8v3h-8zM1016 732h8v3h-8zM1040 732h8v3h-8zM1048 732h8v3h-8zM1064 732h8v3h-8zM1080 732h8v3h-8zM1088 732h8v3h-8zM1112 732h8v3h-8zM1128 732h8v3h-8zM1144 733h8v3h-8zM1176 733h8v3h-8zM888 739h8v3h-8zM1016 738h8v3h-8zM1032 738h8v3h-8zM1048 738h8v3h-8zM1056 738h8v3h-8zM1064 738h8v3h-8zM1072 738h8v3h-8zM1088 738h8v3h-8zM1096 739h8v3h-8zM1120 738h8v3h-8zM1136 738h8v3h-8zM1152 739h8v3h-8zM1184 738h8v3h-8zM976 745h8v3h-8zM992 745h8v3h-8zM1024 745h8v3h-8zM1032 744h8v3h-8zM1064 744h8v3h-8zM1072 745h8v3h-8zM1080 744h8v3h-8zM1096 744h8v3h-8zM1112 745h8v3h-8zM1120 744h8v3h-8zM1128 745h8v3h-8zM1136 745h8v3h-8zM1160 744h8v3h-8zM1000 751h8v3h-8zM1008 751h8v3h-8zM1016 750h8v3h-8zM1040 751h8v3h-8zM1088 751h8v3h-8zM1120 751h8v3h-8zM1128 750h8v3h-8zM1176 750h8v3h-8zM952 757h8v3h-8zM984 757h8v3h-8zM1000 757h8v3h-8zM1032 756h8v3h-8zM1048 756h8v3h-8zM1088 757h8v3h-8zM1112 757h8v3h-8zM1120 756h8v3h-8zM1136 757h8v3h-8zM1144 757h8v3h-8zM1056 763h8v3h-8zM1120 762h8v3h-8zM1152 763h8v3h-8zM1016 769h8v3h-8zM1056 775h8v3h-8zM1088 775h8v3h-8zM1536 781h8v3h-8zM1056 786h8v3h-8zM888 810h8v3h-8zM888 822h8v3h-8zM1872 828h8v3h-8zM1944 828h8v3h-8zM1080 865h8v3h-8zM1464 864h8v3h-8zM856 906h8v3h-8zM2200 913h8v3h-8zM792 918h8v3h-8zM808 919h8v3h-8zM752 925h8v3h-8zM1544 924h8v3h-8zM672 961h8v3h-8zM1200 966h8v3h-8zM1912 972h8v3h-8zM1408 979h8v3h-8zM704 1015h8v3h-8zM1576 1032h8v3h-8zM984 1039h8v3h-8zM1584 1038h8v3h-8zM752 1074h8v3h-8zM1536 1086h8v3h-8zM1400 1099h8v3h-8zM752 1117h8v3h-8zM2440 1129h8v3h-8zM864 1147h8v3h-8zM1576 1146h8v3h-8zM840 1165h8v3h-8zM976 1164h8v3h-8zM2024 1170h8v3h-8zM1216 1176h8v3h-8zM1640 1188h8v3h-8zM1016 1200h8v3h-8zM2400 1248h8v3h-8zM952 1266h8v3h-8zM1368 1272h8v3h-8zM768 1290h8v3h-8zM1168 1308h8v3h-8zM1720 1315h8v3h-8zM888 1374h8v3h-8zM2248 1405h8v3h-8zM696 1458h8v3h-8z"/><path fill="#9a9a3e" d="M1432 317h8v3h-8zM1480 323h8v3h-8zM1440 329h8v3h-8zM1464 329h8v3h-8zM1472 330h8v3h-8zM1488 329h8v3h-8zM1496 330h8v3h-8zM1112 335h8v3h-8zM1120 335h8v3h-8zM1128 335h8v3h-8zM1136 341h8v3h-8zM1512 341h8v3h-8zM1512 348h8v3h-8zM1528 365h8v3h-8zM1536 365h8v3h-8zM1352 419h8v3h-8zM1688 419h8v3h-8zM1632 426h8v3h-8zM1024 437h8v3h-8zM1040 438h8v3h-8zM1008 443h8v3h-8zM1032 444h8v3h-8zM1536 444h8v3h-8zM1552 444h8v3h-8zM1536 449h8v3h-8zM1544 449h8v3h-8zM1560 450h8v3h-8zM1640 449h8v3h-8zM1552 455h8v3h-8zM1568 456h8v3h-8zM960 461h8v3h-8zM1408 462h8v3h-8zM1376 468h8v3h-8zM1384 468h8v3h-8zM912 473h8v3h-8zM920 473h8v3h-8zM928 473h8v3h-8zM936 473h8v3h-8zM952 473h8v3h-8zM1040 473h8v3h-8zM1048 473h8v3h-8zM1088 473h8v3h-8zM1304 473h8v3h-8zM1328 474h8v3h-8zM1360 474h8v3h-8zM1368 474h8v3h-8zM1384 474h8v3h-8zM1408 473h8v3h-8zM1736 473h8v3h-8zM1776 474h8v3h-8zM928 479h8v3h-8zM1000 479h8v3h-8zM1008 479h8v3h-8zM1016 480h8v3h-8zM1176 480h8v3h-8zM1192 479h8v3h-8zM1368 479h8v3h-8zM1384 480h8v3h-8zM1392 479h8v3h-8zM1728 479h8v3h-8zM1736 479h8v3h-8zM1744 479h8v3h-8zM1792 479h8v3h-8zM1808 479h8v3h-8zM920 485h8v3h-8zM1008 485h8v3h-8zM1032 486h8v3h-8zM1040 485h8v3h-8zM1336 486h8v3h-8zM1344 486h8v3h-8zM1392 486h8v3h-8zM1432 485h8v3h-8zM1736 485h8v3h-8zM1760 485h8v3h-8zM1768 485h8v3h-8zM1784 486h8v3h-8zM920 492h8v3h-8zM936 491h8v3h-8zM1048 491h8v3h-8zM1168 491h8v3h-8zM1744 492h8v3h-8zM1016 498h8v3h-8zM1112 498h8v3h-8zM1136 498h8v3h-8zM1168 497h8v3h-8zM1168 504h8v3h-8zM1208 503h8v3h-8zM1280 504h8v3h-8zM1488 503h8v3h-8zM1528 503h8v3h-8zM1648 503h8v3h-8zM944 509h8v3h-8zM1056 509h8v3h-8zM1104 509h8v3h-8zM1112 509h8v3h-8zM1176 510h8v3h-8zM1488 509h8v3h-8zM1512 509h8v3h-8zM1536 509h8v3h-8zM1040 516h8v3h-8zM1056 516h8v3h-8zM1072 515h8v3h-8zM1096 515h8v3h-8zM1120 515h8v3h-8zM1152 515h8v3h-8zM1200 515h8v3h-8zM1264 516h8v3h-8zM1392 516h8v3h-8zM1472 515h8v3h-8zM992 522h8v3h-8zM1088 522h8v3h-8zM1152 521h8v3h-8zM1160 522h8v3h-8zM1384 521h8v3h-8zM856 527h8v3h-8zM896 528h8v3h-8zM912 528h8v3h-8zM920 527h8v3h-8zM1000 527h8v3h-8zM1008 527h8v3h-8zM1024 528h8v3h-8zM1032 527h8v3h-8zM1072 527h8v3h-8zM1096 527h8v3h-8zM1120 527h8v3h-8zM1136 527h8v3h-8zM1184 527h8v3h-8zM1208 527h8v3h-8zM1376 527h8v3h-8zM1408 527h8v3h-8zM816 534h8v3h-8zM872 533h8v3h-8zM888 533h8v3h-8zM896 533h8v3h-8zM912 533h8v3h-8zM944 533h8v3h-8zM952 534h8v3h-8zM968 534h8v3h-8zM984 534h8v3h-8zM992 533h8v3h-8zM1024 533h8v3h-8zM1032 533h8v3h-8zM1048 533h8v3h-8zM1064 533h8v3h-8zM1072 533h8v3h-8zM1096 533h8v3h-8zM1104 533h8v3h-8zM1144 533h8v3h-8zM1152 533h8v3h-8zM1168 533h8v3h-8zM1320 534h8v3h-8zM1368 533h8v3h-8zM1376 534h8v3h-8zM1384 533h8v3h-8zM1392 534h8v3h-8zM1416 533h8v3h-8zM848 539h8v3h-8zM880 539h8v3h-8zM944 540h8v3h-8zM952 540h8v3h-8zM976 540h8v3h-8zM984 540h8v3h-8zM992 539h8v3h-8zM1000 540h8v3h-8zM1016 539h8v3h-8zM1032 540h8v3h-8zM1056 540h8v3h-8zM1088 539h8v3h-8zM1120 539h8v3h-8zM1128 539h8v3h-8zM1136 539h8v3h-8zM1208 540h8v3h-8zM1224 540h8v3h-8zM1384 540h8v3h-8zM832 545h8v3h-8zM896 545h8v3h-8zM992 545h8v3h-8zM1008 545h8v3h-8zM1048 545h8v3h-8zM1080 545h8v3h-8zM1360 545h8v3h-8zM1368 545h8v3h-8zM1376 546h8v3h-8zM1392 546h8v3h-8zM1400 546h8v3h-8zM1664 546h8v3h-8zM848 552h8v3h-8zM856 551h8v3h-8zM880 552h8v3h-8zM912 551h8v3h-8zM1080 552h8v3h-8zM1104 551h8v3h-8zM1112 551h8v3h-8zM1384 551h8v3h-8zM1392 551h8v3h-8zM1416 552h8v3h-8zM840 557h8v3h-8zM880 557h8v3h-8zM896 557h8v3h-8zM1136 557h8v3h-8zM856 564h8v3h-8zM864 563h8v3h-8zM1064 569h8v3h-8zM1584 570h8v3h-8zM1736 569h8v3h-8zM1976 576h8v3h-8zM1064 582h8v3h-8zM1400 588h8v3h-8zM1640 587h8v3h-8zM1712 587h8v3h-8zM1056 593h8v3h-8zM1072 594h8v3h-8zM1040 599h8v3h-8zM1064 599h8v3h-8zM1080 599h8v3h-8zM1184 599h8v3h-8zM1376 599h8v3h-8zM736 605h8v3h-8zM1056 605h8v3h-8zM1088 605h8v3h-8zM1432 605h8v3h-8zM1440 605h8v3h-8zM1552 605h8v3h-8zM1072 611h8v3h-8zM1080 612h8v3h-8zM1096 611h8v3h-8zM1112 611h8v3h-8zM1336 612h8v3h-8zM1344 611h8v3h-8zM1352 611h8v3h-8zM1456 611h8v3h-8zM1464 611h8v3h-8zM1072 617h8v3h-8zM1320 617h8v3h-8zM1344 618h8v3h-8zM1376 618h8v3h-8zM1400 617h8v3h-8zM1408 618h8v3h-8zM1432 617h8v3h-8zM1064 624h8v3h-8zM1072 623h8v3h-8zM1328 624h8v3h-8zM1352 623h8v3h-8zM1392 623h8v3h-8zM1408 623h8v3h-8zM2112 623h8v3h-8zM1064 629h8v3h-8zM1088 629h8v3h-8zM1328 629h8v3h-8zM1336 629h8v3h-8zM1456 629h8v3h-8zM1040 635h8v3h-8zM1304 635h8v3h-8zM1344 636h8v3h-8zM1384 635h8v3h-8zM920 642h8v3h-8zM1312 641h8v3h-8zM1320 642h8v3h-8zM1336 642h8v3h-8zM1400 641h8v3h-8zM2056 641h8v3h-8zM2368 653h8v3h-8zM1392 677h8v3h-8zM1880 678h8v3h-8zM912 683h8v3h-8zM1400 683h8v3h-8zM1408 683h8v3h-8zM1440 683h8v3h-8zM1736 683h8v3h-8zM880 689h8v3h-8zM888 690h8v3h-8zM904 690h8v3h-8zM1400 690h8v3h-8zM2408 690h8v3h-8zM896 695h8v3h-8zM904 695h8v3h-8zM1376 695h8v3h-8zM1416 695h8v3h-8zM1440 696h8v3h-8zM1048 701h8v3h-8zM1424 702h8v3h-8zM1760 701h8v3h-8zM1784 701h8v3h-8zM1064 707h8v3h-8zM1408 708h8v3h-8zM1416 708h8v3h-8zM1744 707h8v3h-8zM1016 714h8v3h-8zM1056 713h8v3h-8zM1384 714h8v3h-8zM1040 720h8v3h-8zM1056 720h8v3h-8zM1064 720h8v3h-8zM1072 719h8v3h-8zM1080 719h8v3h-8zM1088 720h8v3h-8zM1112 720h8v3h-8zM1160 720h8v3h-8zM1752 719h8v3h-8zM1048 725h8v3h-8zM1056 725h8v3h-8zM1080 725h8v3h-8zM1096 726h8v3h-8zM1136 726h8v3h-8zM1152 726h8v3h-8zM1024 732h8v3h-8zM1056 732h8v3h-8zM1072 731h8v3h-8zM1096 732h8v3h-8zM1104 732h8v3h-8zM1120 731h8v3h-8zM1136 732h8v3h-8zM1024 738h8v3h-8zM1040 738h8v3h-8zM1080 737h8v3h-8zM1104 737h8v3h-8zM1112 738h8v3h-8zM1272 737h8v3h-8zM944 743h8v3h-8zM1040 744h8v3h-8zM1048 744h8v3h-8zM1104 744h8v3h-8zM1192 743h8v3h-8zM1048 750h8v3h-8zM1056 749h8v3h-8zM1064 749h8v3h-8zM1080 750h8v3h-8zM2032 749h8v3h-8zM1128 756h8v3h-8zM1344 755h8v3h-8zM2408 755h8v3h-8zM888 761h8v3h-8zM1232 761h8v3h-8zM1264 761h8v3h-8zM1376 762h8v3h-8zM1312 767h8v3h-8zM672 774h8v3h-8zM1064 779h8v3h-8zM1264 780h8v3h-8zM1064 785h8v3h-8zM1584 786h8v3h-8zM1040 791h8v3h-8zM1904 797h8v3h-8zM896 803h8v3h-8zM1896 804h8v3h-8zM2184 803h8v3h-8zM896 809h8v3h-8zM856 816h8v3h-8zM888 815h8v3h-8zM912 815h8v3h-8zM896 821h8v3h-8zM1936 821h8v3h-8zM1120 827h8v3h-8zM1912 827h8v3h-8zM1696 833h8v3h-8zM1464 839h8v3h-8zM1432 851h8v3h-8zM2424 851h8v3h-8zM1544 857h8v3h-8zM1984 875h8v3h-8zM2008 881h8v3h-8zM800 887h8v3h-8zM1512 887h8v3h-8zM816 893h8v3h-8zM832 893h8v3h-8zM856 893h8v3h-8zM888 893h8v3h-8zM1480 893h8v3h-8zM1968 893h8v3h-8zM824 899h8v3h-8zM848 899h8v3h-8zM776 905h8v3h-8zM784 905h8v3h-8zM816 905h8v3h-8zM824 906h8v3h-8zM872 905h8v3h-8zM896 906h8v3h-8zM1744 905h8v3h-8zM2104 906h8v3h-8zM2392 905h8v3h-8zM2400 905h8v3h-8zM824 911h8v3h-8zM880 912h8v3h-8zM2424 911h8v3h-8zM800 918h8v3h-8zM2264 918h8v3h-8zM1208 929h8v3h-8zM1240 929h8v3h-8zM1280 930h8v3h-8zM776 935h8v3h-8zM1264 941h8v3h-8zM1488 941h8v3h-8zM1944 947h8v3h-8zM624 953h8v3h-8zM1264 959h8v3h-8zM1856 965h8v3h-8zM1256 971h8v3h-8zM816 977h8v3h-8zM1808 977h8v3h-8zM1888 983h8v3h-8zM896 1001h8v3h-8zM1456 1001h8v3h-8zM1712 1002h8v3h-8zM1992 1007h8v3h-8zM1320 1019h8v3h-8zM2216 1025h8v3h-8zM1616 1031h8v3h-8zM2040 1031h8v3h-8zM1616 1037h8v3h-8zM1568 1043h8v3h-8zM1584 1043h8v3h-8zM1944 1049h8v3h-8zM632 1055h8v3h-8zM1256 1055h8v3h-8zM1592 1055h8v3h-8zM1680 1067h8v3h-8zM2064 1067h8v3h-8zM1144 1085h8v3h-8zM1608 1091h8v3h-8zM1600 1097h8v3h-8zM1600 1103h8v3h-8zM1688 1103h8v3h-8zM1856 1103h8v3h-8zM1448 1110h8v3h-8zM1568 1109h8v3h-8zM2408 1109h8v3h-8zM1592 1115h8v3h-8zM1608 1121h8v3h-8zM1824 1121h8v3h-8zM2408 1121h8v3h-8zM1600 1139h8v3h-8zM1616 1151h8v3h-8zM1248 1157h8v3h-8zM1448 1158h8v3h-8zM2104 1157h8v3h-8zM1504 1163h8v3h-8zM976 1169h8v3h-8zM992 1170h8v3h-8zM1008 1169h8v3h-8zM2416 1169h8v3h-8zM976 1175h8v3h-8zM992 1175h8v3h-8zM968 1181h8v3h-8zM976 1181h8v3h-8zM1016 1181h8v3h-8zM1584 1181h8v3h-8zM1504 1187h8v3h-8zM1568 1187h8v3h-8zM1592 1187h8v3h-8zM2312 1187h8v3h-8zM664 1193h8v3h-8zM976 1193h8v3h-8zM2280 1193h8v3h-8zM1080 1199h8v3h-8zM1696 1205h8v3h-8zM1744 1205h8v3h-8zM784 1211h8v3h-8zM1584 1229h8v3h-8zM1976 1229h8v3h-8zM2008 1229h8v3h-8zM1688 1235h8v3h-8zM1128 1241h8v3h-8zM1200 1241h8v3h-8zM1000 1247h8v3h-8zM960 1253h8v3h-8zM1616 1253h8v3h-8zM2368 1253h8v3h-8zM736 1259h8v3h-8zM744 1259h8v3h-8zM2352 1259h8v3h-8zM728 1265h8v3h-8zM1584 1265h8v3h-8zM2352 1266h8v3h-8zM728 1271h8v3h-8zM1160 1271h8v3h-8zM2424 1277h8v3h-8zM864 1289h8v3h-8zM768 1332h8v3h-8zM2208 1331h8v3h-8zM1008 1337h8v3h-8zM1592 1337h8v3h-8zM1008 1343h8v3h-8zM976 1355h8v3h-8zM1120 1355h8v3h-8zM1472 1355h8v3h-8zM904 1361h8v3h-8zM1136 1361h8v3h-8zM1480 1362h8v3h-8zM1032 1367h8v3h-8zM1456 1367h8v3h-8zM2192 1367h8v3h-8zM776 1379h8v3h-8zM1136 1379h8v3h-8zM896 1385h8v3h-8zM1456 1391h8v3h-8zM1504 1409h8v3h-8zM1712 1415h8v3h-8zM1472 1421h8v3h-8zM1696 1421h8v3h-8zM2056 1433h8v3h-8zM1184 1445h8v3h-8zM2040 1445h8v3h-8zM696 1452h8v3h-8zM1984 1451h8v3h-8zM680 1463h8v3h-8zM696 1463h8v3h-8zM728 1463h8v3h-8zM736 1463h8v3h-8zM648 1470h8v3h-8zM688 1469h8v3h-8zM696 1469h8v3h-8zM704 1469h8v3h-8zM712 1469h8v3h-8zM720 1469h8v3h-8z"/><path fill="#c6cc3a" d="M1480 329h8v3h-8zM1136 334h8v3h-8zM1032 436h8v3h-8zM1552 448h8v3h-8zM1240 454h8v3h-8zM1544 455h8v3h-8zM1768 472h8v3h-8zM1024 478h8v3h-8zM1040 478h8v3h-8zM1752 478h8v3h-8zM1760 478h8v3h-8zM1768 478h8v3h-8zM1080 502h8v3h-8zM1152 502h8v3h-8zM1160 502h8v3h-8zM1144 514h8v3h-8zM1192 515h8v3h-8zM1096 520h8v3h-8zM1104 520h8v3h-8zM1128 520h8v3h-8zM1832 520h8v3h-8zM1144 526h8v3h-8zM1872 526h8v3h-8zM848 532h8v3h-8zM880 532h8v3h-8zM920 532h8v3h-8zM1000 533h8v3h-8zM1120 531h8v3h-8zM1136 533h8v3h-8zM1400 532h8v3h-8zM1936 533h8v3h-8zM856 538h8v3h-8zM864 538h8v3h-8zM872 538h8v3h-8zM1024 538h8v3h-8zM1064 538h8v3h-8zM1240 538h8v3h-8zM864 544h8v3h-8zM872 544h8v3h-8zM864 550h8v3h-8zM888 556h8v3h-8zM1824 561h8v3h-8zM1224 580h8v3h-8zM1656 579h8v3h-8zM1664 580h8v3h-8zM1672 580h8v3h-8zM1648 587h8v3h-8zM1664 586h8v3h-8zM1424 599h8v3h-8zM1064 610h8v3h-8zM1432 610h8v3h-8zM1080 616h8v3h-8zM1416 617h8v3h-8zM1424 616h8v3h-8zM1464 622h8v3h-8zM1424 628h8v3h-8zM1408 635h8v3h-8zM1432 634h8v3h-8zM1416 640h8v3h-8zM1352 658h8v3h-8zM1384 665h8v3h-8zM904 682h8v3h-8zM2360 682h8v3h-8zM2456 682h8v3h-8zM2368 688h8v3h-8zM2392 688h8v3h-8zM2400 688h8v3h-8zM2472 688h8v3h-8zM1400 695h8v3h-8zM2352 694h8v3h-8zM2360 694h8v3h-8zM2400 694h8v3h-8zM2464 693h8v3h-8zM2488 693h8v3h-8zM2496 694h8v3h-8zM688 700h8v3h-8zM1744 700h8v3h-8zM1768 700h8v3h-8zM1792 700h8v3h-8zM2368 700h8v3h-8zM1752 706h8v3h-8zM1768 706h8v3h-8zM976 712h8v3h-8zM1760 712h8v3h-8zM1768 713h8v3h-8zM1808 712h8v3h-8zM1760 718h8v3h-8zM1784 718h8v3h-8zM2168 718h8v3h-8zM1856 725h8v3h-8zM1248 730h8v3h-8zM1216 736h8v3h-8zM1256 736h8v3h-8zM1280 736h8v3h-8zM1504 736h8v3h-8zM1184 748h8v3h-8zM1264 748h8v3h-8zM1272 748h8v3h-8zM1280 749h8v3h-8zM1320 749h8v3h-8zM1232 754h8v3h-8zM1248 754h8v3h-8zM1320 754h8v3h-8zM1328 754h8v3h-8zM1336 754h8v3h-8zM1336 761h8v3h-8zM2048 766h8v3h-8zM1072 772h8v3h-8zM832 778h8v3h-8zM1040 778h8v3h-8zM1032 784h8v3h-8zM1040 785h8v3h-8zM1048 784h8v3h-8zM1472 784h8v3h-8zM1480 784h8v3h-8zM1072 790h8v3h-8zM1464 790h8v3h-8zM1648 790h8v3h-8zM1040 796h8v3h-8zM1920 796h8v3h-8zM1904 801h8v3h-8zM1920 808h8v3h-8zM1944 808h8v3h-8zM2040 808h8v3h-8zM2432 808h8v3h-8zM1912 814h8v3h-8zM1632 820h8v3h-8zM1904 821h8v3h-8zM1920 820h8v3h-8zM1928 826h8v3h-8zM1656 832h8v3h-8zM1912 833h8v3h-8zM1504 844h8v3h-8zM1544 844h8v3h-8zM2376 844h8v3h-8zM2400 844h8v3h-8zM1504 850h8v3h-8zM2352 850h8v3h-8zM2368 850h8v3h-8zM2384 850h8v3h-8zM2392 850h8v3h-8zM1440 856h8v3h-8zM1504 856h8v3h-8zM2352 856h8v3h-8zM2368 856h8v3h-8zM2384 856h8v3h-8zM2392 856h8v3h-8zM2400 856h8v3h-8zM2552 856h8v3h-8zM2560 856h8v3h-8zM1504 862h8v3h-8zM1520 862h8v3h-8zM1552 880h8v3h-8zM1960 880h8v3h-8zM864 886h8v3h-8zM1464 886h8v3h-8zM1472 886h8v3h-8zM1496 886h8v3h-8zM1688 886h8v3h-8zM864 892h8v3h-8zM872 892h8v3h-8zM880 893h8v3h-8zM1048 892h8v3h-8zM1976 892h8v3h-8zM2280 892h8v3h-8zM784 898h8v3h-8zM800 899h8v3h-8zM840 898h8v3h-8zM856 898h8v3h-8zM872 899h8v3h-8zM1688 898h8v3h-8zM792 904h8v3h-8zM800 904h8v3h-8zM832 904h8v3h-8zM864 904h8v3h-8zM2520 904h8v3h-8zM792 910h8v3h-8zM1136 910h8v3h-8zM1600 909h8v3h-8zM1712 910h8v3h-8zM2512 910h8v3h-8zM2528 916h8v3h-8zM1392 928h8v3h-8zM856 934h8v3h-8zM1128 934h8v3h-8zM1224 935h8v3h-8zM1288 940h8v3h-8zM1232 946h8v3h-8zM1400 946h8v3h-8zM1984 946h8v3h-8zM2096 946h8v3h-8zM1280 952h8v3h-8zM2080 952h8v3h-8zM1224 958h8v3h-8zM1240 958h8v3h-8zM1248 957h8v3h-8zM1256 958h8v3h-8zM1824 958h8v3h-8zM2088 957h8v3h-8zM1264 963h8v3h-8zM1912 964h8v3h-8zM2072 964h8v3h-8zM2088 964h8v3h-8zM1472 970h8v3h-8zM1720 970h8v3h-8zM1880 970h8v3h-8zM1240 976h8v3h-8zM1464 976h8v3h-8zM1752 976h8v3h-8zM1936 975h8v3h-8zM1960 975h8v3h-8zM752 982h8v3h-8zM1752 982h8v3h-8zM1696 988h8v3h-8zM1800 988h8v3h-8zM1816 988h8v3h-8zM1992 989h8v3h-8zM672 994h8v3h-8zM1664 994h8v3h-8zM1752 994h8v3h-8zM1816 994h8v3h-8zM1952 994h8v3h-8zM1256 1000h8v3h-8zM1768 1000h8v3h-8zM1648 1006h8v3h-8zM1856 1006h8v3h-8zM1928 1005h8v3h-8zM1952 1007h8v3h-8zM1816 1012h8v3h-8zM2032 1012h8v3h-8zM2128 1012h8v3h-8zM872 1018h8v3h-8zM1576 1018h8v3h-8zM1736 1017h8v3h-8zM960 1024h8v3h-8zM1520 1024h8v3h-8zM1664 1024h8v3h-8zM1688 1024h8v3h-8zM1872 1024h8v3h-8zM2040 1024h8v3h-8zM2080 1024h8v3h-8zM2240 1024h8v3h-8zM2184 1030h8v3h-8zM672 1036h8v3h-8zM1928 1036h8v3h-8zM1976 1036h8v3h-8zM2040 1036h8v3h-8zM2064 1036h8v3h-8zM640 1042h8v3h-8zM936 1042h8v3h-8zM1088 1042h8v3h-8zM1384 1049h8v3h-8zM1616 1049h8v3h-8zM1640 1048h8v3h-8zM1680 1048h8v3h-8zM1856 1048h8v3h-8zM1520 1054h8v3h-8zM1584 1054h8v3h-8zM1616 1053h8v3h-8zM1928 1054h8v3h-8zM1936 1054h8v3h-8zM1664 1060h8v3h-8zM1888 1060h8v3h-8zM1568 1066h8v3h-8zM1632 1066h8v3h-8zM1640 1066h8v3h-8zM1912 1066h8v3h-8zM2080 1066h8v3h-8zM1616 1071h8v3h-8zM1648 1071h8v3h-8zM1696 1071h8v3h-8zM1240 1078h8v3h-8zM1656 1077h8v3h-8zM1728 1078h8v3h-8zM2064 1078h8v3h-8zM840 1084h8v3h-8zM1280 1084h8v3h-8zM1544 1084h8v3h-8zM1592 1084h8v3h-8zM1616 1083h8v3h-8zM1640 1084h8v3h-8zM1648 1084h8v3h-8zM1696 1084h8v3h-8zM1736 1083h8v3h-8zM1960 1084h8v3h-8zM2032 1084h8v3h-8zM1256 1090h8v3h-8zM1616 1090h8v3h-8zM1688 1090h8v3h-8zM1808 1090h8v3h-8zM2080 1090h8v3h-8zM1328 1096h8v3h-8zM1584 1097h8v3h-8zM1680 1096h8v3h-8zM1704 1096h8v3h-8zM1712 1096h8v3h-8zM1776 1096h8v3h-8zM1840 1096h8v3h-8zM2064 1096h8v3h-8zM728 1102h8v3h-8zM1888 1102h8v3h-8zM1904 1102h8v3h-8zM1920 1102h8v3h-8zM1984 1102h8v3h-8zM2024 1102h8v3h-8zM2464 1102h8v3h-8zM1536 1108h8v3h-8zM1616 1108h8v3h-8zM1656 1108h8v3h-8zM2008 1107h8v3h-8zM2176 1108h8v3h-8zM2416 1108h8v3h-8zM2464 1108h8v3h-8zM1280 1114h8v3h-8zM1608 1114h8v3h-8zM1912 1114h8v3h-8zM1952 1114h8v3h-8zM2408 1114h8v3h-8zM2424 1115h8v3h-8zM2464 1114h8v3h-8zM2472 1114h8v3h-8zM2480 1114h8v3h-8zM1704 1120h8v3h-8zM2040 1120h8v3h-8zM2080 1120h8v3h-8zM688 1127h8v3h-8zM1640 1126h8v3h-8zM1664 1126h8v3h-8zM1696 1126h8v3h-8zM1760 1126h8v3h-8zM2008 1125h8v3h-8zM1976 1132h8v3h-8zM1224 1138h8v3h-8zM1592 1138h8v3h-8zM1664 1139h8v3h-8zM1840 1138h8v3h-8zM1864 1137h8v3h-8zM2024 1138h8v3h-8zM2144 1138h8v3h-8zM1200 1144h8v3h-8zM1264 1144h8v3h-8zM1568 1144h8v3h-8zM1680 1143h8v3h-8zM656 1156h8v3h-8zM1368 1156h8v3h-8zM1376 1156h8v3h-8zM1224 1162h8v3h-8zM1248 1161h8v3h-8zM1368 1161h8v3h-8zM1376 1162h8v3h-8zM1520 1162h8v3h-8zM2448 1162h8v3h-8zM1192 1168h8v3h-8zM1352 1169h8v3h-8zM1448 1168h8v3h-8zM1464 1168h8v3h-8zM968 1174h8v3h-8zM1240 1174h8v3h-8zM1600 1174h8v3h-8zM1736 1173h8v3h-8zM1744 1174h8v3h-8zM984 1180h8v3h-8zM992 1180h8v3h-8zM1720 1186h8v3h-8zM2552 1186h8v3h-8zM2560 1185h8v3h-8zM2288 1192h8v3h-8zM1744 1198h8v3h-8zM1992 1197h8v3h-8zM2296 1198h8v3h-8zM856 1204h8v3h-8zM944 1203h8v3h-8zM2288 1204h8v3h-8zM2320 1204h8v3h-8zM2376 1204h8v3h-8zM2384 1204h8v3h-8zM1144 1210h8v3h-8zM2328 1209h8v3h-8zM2232 1216h8v3h-8zM2328 1228h8v3h-8zM1704 1234h8v3h-8zM2384 1234h8v3h-8zM2520 1240h8v3h-8zM2560 1240h8v3h-8zM2576 1246h8v3h-8zM1624 1252h8v3h-8zM1648 1252h8v3h-8zM1752 1252h8v3h-8zM2424 1252h8v3h-8zM1600 1258h8v3h-8zM1624 1258h8v3h-8zM1680 1258h8v3h-8zM736 1264h8v3h-8zM1608 1264h8v3h-8zM1632 1264h8v3h-8zM984 1270h8v3h-8zM1888 1276h8v3h-8zM1808 1288h8v3h-8zM2424 1288h8v3h-8zM1368 1294h8v3h-8zM816 1300h8v3h-8zM2336 1300h8v3h-8zM1352 1306h8v3h-8zM1360 1307h8v3h-8zM920 1312h8v3h-8zM944 1311h8v3h-8zM1344 1312h8v3h-8zM832 1318h8v3h-8zM896 1318h8v3h-8zM920 1318h8v3h-8zM1384 1318h8v3h-8zM1888 1317h8v3h-8zM928 1324h8v3h-8zM952 1324h8v3h-8zM960 1324h8v3h-8zM984 1324h8v3h-8zM912 1330h8v3h-8zM976 1330h8v3h-8zM1680 1331h8v3h-8zM992 1348h8v3h-8zM960 1354h8v3h-8zM1152 1359h8v3h-8zM1160 1360h8v3h-8zM1760 1360h8v3h-8zM1112 1367h8v3h-8zM1144 1366h8v3h-8zM656 1372h8v3h-8zM1128 1372h8v3h-8zM1160 1372h8v3h-8zM1168 1372h8v3h-8zM936 1384h8v3h-8zM944 1384h8v3h-8zM928 1390h8v3h-8zM984 1390h8v3h-8zM1128 1390h8v3h-8zM1584 1390h8v3h-8zM2248 1390h8v3h-8zM1192 1396h8v3h-8zM1752 1396h8v3h-8zM1776 1396h8v3h-8zM2256 1396h8v3h-8zM1480 1402h8v3h-8zM1488 1402h8v3h-8zM1656 1402h8v3h-8zM1312 1408h8v3h-8zM1536 1408h8v3h-8zM1680 1408h8v3h-8zM824 1414h8v3h-8zM1352 1414h8v3h-8zM1456 1414h8v3h-8zM1480 1414h8v3h-8zM1696 1414h8v3h-8zM1760 1414h8v3h-8zM2040 1414h8v3h-8zM1464 1421h8v3h-8zM1584 1420h8v3h-8zM1736 1420h8v3h-8zM1360 1425h8v3h-8zM1560 1427h8v3h-8zM1056 1432h8v3h-8zM2000 1437h8v3h-8zM2008 1444h8v3h-8zM2016 1444h8v3h-8zM2000 1450h8v3h-8zM672 1462h8v3h-8zM952 1480h8v3h-8zM936 1486h8v3h-8zM936 1492h8v3h-8zM1000 1552h8v3h-8zM952 1570h8v3h-8z"/><path fill="#e6d63e" d="M1064 453h8v3h-8zM1136 519h8v3h-8zM904 525h8v3h-8zM912 537h8v3h-8zM1448 621h8v3h-8zM2368 693h8v3h-8zM2384 692h8v3h-8zM2392 693h8v3h-8zM2472 693h8v3h-8zM2360 699h8v3h-8zM2376 699h8v3h-8zM1776 705h8v3h-8zM1744 711h8v3h-8zM1752 711h8v3h-8zM1224 735h8v3h-8zM1248 735h8v3h-8zM1216 741h8v3h-8zM1224 740h8v3h-8zM1232 741h8v3h-8zM1216 747h8v3h-8zM1224 747h8v3h-8zM1240 746h8v3h-8zM1248 747h8v3h-8zM1256 747h8v3h-8zM2568 747h8v3h-8zM2568 752h8v3h-8zM1408 759h8v3h-8zM2568 759h8v3h-8zM808 789h8v3h-8zM1480 789h8v3h-8zM1488 789h8v3h-8zM1480 795h8v3h-8zM1328 801h8v3h-8zM1640 807h8v3h-8zM1648 806h8v3h-8zM1912 807h8v3h-8zM1624 813h8v3h-8zM1656 812h8v3h-8zM1920 813h8v3h-8zM1928 813h8v3h-8zM1936 813h8v3h-8zM2448 813h8v3h-8zM1600 818h8v3h-8zM1624 819h8v3h-8zM1640 819h8v3h-8zM1648 819h8v3h-8zM1656 824h8v3h-8zM1624 831h8v3h-8zM1632 830h8v3h-8zM1640 830h8v3h-8zM1664 830h8v3h-8zM1664 837h8v3h-8zM2552 849h8v3h-8zM1512 855h8v3h-8zM1520 855h8v3h-8zM2376 855h8v3h-8zM1512 861h8v3h-8zM1544 861h8v3h-8zM1480 867h8v3h-8zM968 873h8v3h-8zM1488 873h8v3h-8zM1504 873h8v3h-8zM1512 873h8v3h-8zM1520 873h8v3h-8zM1984 879h8v3h-8zM1624 885h8v3h-8zM1992 885h8v3h-8zM1616 891h8v3h-8zM1680 891h8v3h-8zM2288 890h8v3h-8zM864 897h8v3h-8zM1608 897h8v3h-8zM1616 897h8v3h-8zM1632 897h8v3h-8zM1640 896h8v3h-8zM1648 897h8v3h-8zM1976 897h8v3h-8zM2288 896h8v3h-8zM2312 897h8v3h-8zM1600 902h8v3h-8zM1672 902h8v3h-8zM1680 902h8v3h-8zM2264 903h8v3h-8zM2296 903h8v3h-8zM1592 909h8v3h-8zM1608 909h8v3h-8zM1648 909h8v3h-8zM1656 909h8v3h-8zM1664 908h8v3h-8zM1680 909h8v3h-8zM2296 908h8v3h-8zM2520 908h8v3h-8zM1624 914h8v3h-8zM1384 927h8v3h-8zM1392 933h8v3h-8zM1240 939h8v3h-8zM1400 939h8v3h-8zM1248 944h8v3h-8zM1256 945h8v3h-8zM1696 945h8v3h-8zM1016 951h8v3h-8zM1240 951h8v3h-8zM1248 950h8v3h-8zM2088 951h8v3h-8zM2104 951h8v3h-8zM1616 957h8v3h-8zM1816 957h8v3h-8zM1896 957h8v3h-8zM1976 957h8v3h-8zM2096 956h8v3h-8zM2104 957h8v3h-8zM1848 963h8v3h-8zM1480 969h8v3h-8zM1488 968h8v3h-8zM1632 969h8v3h-8zM1784 969h8v3h-8zM1800 969h8v3h-8zM1992 969h8v3h-8zM1480 975h8v3h-8zM1552 975h8v3h-8zM1888 975h8v3h-8zM1904 975h8v3h-8zM1480 981h8v3h-8zM1488 981h8v3h-8zM1704 981h8v3h-8zM1712 980h8v3h-8zM1680 987h8v3h-8zM1728 987h8v3h-8zM1744 987h8v3h-8zM1792 986h8v3h-8zM1832 986h8v3h-8zM1840 987h8v3h-8zM1848 987h8v3h-8zM1896 987h8v3h-8zM1648 993h8v3h-8zM1864 993h8v3h-8zM1888 993h8v3h-8zM1896 992h8v3h-8zM1904 993h8v3h-8zM1928 993h8v3h-8zM1616 998h8v3h-8zM1680 998h8v3h-8zM1728 998h8v3h-8zM1840 999h8v3h-8zM1856 998h8v3h-8zM1912 998h8v3h-8zM912 1004h8v3h-8zM1616 1005h8v3h-8zM1632 1004h8v3h-8zM1760 1005h8v3h-8zM1944 1005h8v3h-8zM1976 1005h8v3h-8zM2032 1005h8v3h-8zM936 1011h8v3h-8zM1560 1011h8v3h-8zM1696 1011h8v3h-8zM1704 1010h8v3h-8zM1712 1011h8v3h-8zM1744 1011h8v3h-8zM1760 1011h8v3h-8zM1768 1011h8v3h-8zM1784 1011h8v3h-8zM1800 1011h8v3h-8zM1832 1011h8v3h-8zM1880 1011h8v3h-8zM1960 1011h8v3h-8zM1968 1011h8v3h-8zM904 1017h8v3h-8zM936 1017h8v3h-8zM1536 1016h8v3h-8zM1632 1017h8v3h-8zM1656 1016h8v3h-8zM1664 1017h8v3h-8zM1720 1016h8v3h-8zM1760 1016h8v3h-8zM1792 1016h8v3h-8zM1800 1017h8v3h-8zM1840 1016h8v3h-8zM1888 1016h8v3h-8zM1944 1016h8v3h-8zM1968 1017h8v3h-8zM2056 1016h8v3h-8zM2064 1016h8v3h-8zM2096 1017h8v3h-8zM2280 1017h8v3h-8zM904 1023h8v3h-8zM944 1023h8v3h-8zM952 1023h8v3h-8zM1552 1022h8v3h-8zM1608 1023h8v3h-8zM1656 1022h8v3h-8zM1712 1023h8v3h-8zM1808 1022h8v3h-8zM1856 1023h8v3h-8zM2088 1023h8v3h-8zM2192 1023h8v3h-8zM2208 1023h8v3h-8zM2224 1022h8v3h-8zM936 1029h8v3h-8zM1592 1029h8v3h-8zM1640 1029h8v3h-8zM1664 1028h8v3h-8zM1696 1029h8v3h-8zM1808 1028h8v3h-8zM1864 1028h8v3h-8zM1896 1029h8v3h-8zM1992 1029h8v3h-8zM2048 1029h8v3h-8zM2072 1028h8v3h-8zM2080 1029h8v3h-8zM2096 1029h8v3h-8zM2128 1028h8v3h-8zM2216 1029h8v3h-8zM1600 1035h8v3h-8zM1656 1034h8v3h-8zM1728 1035h8v3h-8zM1856 1035h8v3h-8zM1888 1034h8v3h-8zM1912 1035h8v3h-8zM1920 1035h8v3h-8zM1944 1034h8v3h-8zM1952 1035h8v3h-8zM1968 1034h8v3h-8zM1984 1034h8v3h-8zM2016 1035h8v3h-8zM2208 1034h8v3h-8zM2216 1034h8v3h-8zM2248 1034h8v3h-8zM1544 1041h8v3h-8zM1624 1041h8v3h-8zM1680 1041h8v3h-8zM1720 1040h8v3h-8zM1808 1040h8v3h-8zM1816 1041h8v3h-8zM1928 1041h8v3h-8zM1952 1040h8v3h-8zM2032 1040h8v3h-8zM2184 1041h8v3h-8zM2200 1041h8v3h-8zM2232 1041h8v3h-8zM1648 1046h8v3h-8zM1688 1047h8v3h-8zM1880 1047h8v3h-8zM1888 1047h8v3h-8zM1968 1047h8v3h-8zM1976 1047h8v3h-8zM2016 1046h8v3h-8zM2048 1047h8v3h-8zM1608 1052h8v3h-8zM1632 1053h8v3h-8zM1688 1053h8v3h-8zM1704 1052h8v3h-8zM1752 1053h8v3h-8zM1944 1052h8v3h-8zM1968 1053h8v3h-8zM1984 1053h8v3h-8zM2000 1053h8v3h-8zM2064 1052h8v3h-8zM1312 1059h8v3h-8zM1592 1059h8v3h-8zM1688 1059h8v3h-8zM1728 1059h8v3h-8zM1736 1059h8v3h-8zM1768 1058h8v3h-8zM1904 1058h8v3h-8zM2024 1059h8v3h-8zM2056 1058h8v3h-8zM2064 1058h8v3h-8zM1256 1065h8v3h-8zM1592 1065h8v3h-8zM1624 1065h8v3h-8zM1688 1065h8v3h-8zM1712 1064h8v3h-8zM1728 1064h8v3h-8zM1760 1064h8v3h-8zM1800 1064h8v3h-8zM1944 1065h8v3h-8zM1280 1071h8v3h-8zM1336 1070h8v3h-8zM1360 1071h8v3h-8zM1560 1071h8v3h-8zM1608 1071h8v3h-8zM1624 1071h8v3h-8zM1632 1071h8v3h-8zM1672 1071h8v3h-8zM1832 1071h8v3h-8zM1880 1071h8v3h-8zM2040 1070h8v3h-8zM1344 1077h8v3h-8zM1352 1077h8v3h-8zM1400 1077h8v3h-8zM1608 1077h8v3h-8zM1616 1077h8v3h-8zM1648 1077h8v3h-8zM1736 1077h8v3h-8zM1792 1077h8v3h-8zM1800 1077h8v3h-8zM1816 1077h8v3h-8zM2048 1077h8v3h-8zM1296 1083h8v3h-8zM1304 1083h8v3h-8zM1320 1083h8v3h-8zM1344 1082h8v3h-8zM1608 1083h8v3h-8zM1656 1083h8v3h-8zM1688 1082h8v3h-8zM1864 1082h8v3h-8zM2176 1083h8v3h-8zM1320 1089h8v3h-8zM1336 1089h8v3h-8zM1600 1089h8v3h-8zM1624 1089h8v3h-8zM1632 1089h8v3h-8zM1664 1089h8v3h-8zM1672 1089h8v3h-8zM1704 1088h8v3h-8zM1736 1089h8v3h-8zM1752 1088h8v3h-8zM1776 1089h8v3h-8zM1824 1089h8v3h-8zM1840 1089h8v3h-8zM1848 1089h8v3h-8zM1880 1089h8v3h-8zM1896 1089h8v3h-8zM1928 1089h8v3h-8zM1944 1089h8v3h-8zM1968 1088h8v3h-8zM2000 1088h8v3h-8zM2072 1089h8v3h-8zM1800 1094h8v3h-8zM1808 1094h8v3h-8zM1832 1094h8v3h-8zM1888 1095h8v3h-8zM1912 1095h8v3h-8zM1944 1095h8v3h-8zM1312 1101h8v3h-8zM1648 1101h8v3h-8zM1664 1101h8v3h-8zM1776 1101h8v3h-8zM1848 1101h8v3h-8zM1864 1101h8v3h-8zM1872 1101h8v3h-8zM1992 1101h8v3h-8zM2000 1101h8v3h-8zM2056 1101h8v3h-8zM1688 1107h8v3h-8zM1744 1107h8v3h-8zM1760 1106h8v3h-8zM1888 1107h8v3h-8zM1904 1107h8v3h-8zM1928 1107h8v3h-8zM2000 1106h8v3h-8zM2080 1107h8v3h-8zM2168 1107h8v3h-8zM2184 1107h8v3h-8zM2472 1107h8v3h-8zM1664 1113h8v3h-8zM1672 1112h8v3h-8zM1712 1113h8v3h-8zM1968 1113h8v3h-8zM1984 1113h8v3h-8zM1992 1113h8v3h-8zM2016 1113h8v3h-8zM2248 1113h8v3h-8zM2416 1113h8v3h-8zM1712 1119h8v3h-8zM1768 1118h8v3h-8zM2000 1119h8v3h-8zM2136 1119h8v3h-8zM2416 1119h8v3h-8zM2424 1119h8v3h-8zM2432 1119h8v3h-8zM1720 1125h8v3h-8zM1776 1125h8v3h-8zM1872 1125h8v3h-8zM1880 1124h8v3h-8zM2080 1124h8v3h-8zM2104 1124h8v3h-8zM1760 1131h8v3h-8zM1904 1131h8v3h-8zM1856 1137h8v3h-8zM2120 1137h8v3h-8zM1216 1143h8v3h-8zM1824 1143h8v3h-8zM2136 1142h8v3h-8zM1232 1149h8v3h-8zM1264 1149h8v3h-8zM1352 1149h8v3h-8zM1360 1149h8v3h-8zM1584 1149h8v3h-8zM1600 1149h8v3h-8zM1608 1149h8v3h-8zM2120 1149h8v3h-8zM1200 1155h8v3h-8zM1360 1155h8v3h-8zM1496 1154h8v3h-8zM1592 1155h8v3h-8zM1608 1154h8v3h-8zM2112 1155h8v3h-8zM2136 1154h8v3h-8zM1240 1161h8v3h-8zM1408 1161h8v3h-8zM1496 1161h8v3h-8zM1592 1161h8v3h-8zM1400 1167h8v3h-8zM1408 1167h8v3h-8zM1472 1167h8v3h-8zM1480 1167h8v3h-8zM1512 1167h8v3h-8zM1520 1167h8v3h-8zM2144 1167h8v3h-8zM1400 1173h8v3h-8zM1488 1173h8v3h-8zM1528 1173h8v3h-8zM1744 1178h8v3h-8zM1928 1179h8v3h-8zM1736 1184h8v3h-8zM1752 1185h8v3h-8zM1744 1191h8v3h-8zM2552 1191h8v3h-8zM2288 1197h8v3h-8zM2000 1203h8v3h-8zM2296 1202h8v3h-8zM2304 1203h8v3h-8zM2296 1209h8v3h-8zM2344 1209h8v3h-8zM1304 1215h8v3h-8zM1984 1214h8v3h-8zM2000 1215h8v3h-8zM2368 1214h8v3h-8zM1304 1221h8v3h-8zM1824 1221h8v3h-8zM1832 1221h8v3h-8zM2336 1221h8v3h-8zM2360 1220h8v3h-8zM2368 1221h8v3h-8zM1712 1227h8v3h-8zM1736 1226h8v3h-8zM1816 1226h8v3h-8zM2360 1227h8v3h-8zM1176 1233h8v3h-8zM1712 1232h8v3h-8zM1720 1232h8v3h-8zM1768 1232h8v3h-8zM2336 1233h8v3h-8zM2528 1233h8v3h-8zM2544 1232h8v3h-8zM1712 1238h8v3h-8zM2384 1239h8v3h-8zM2568 1239h8v3h-8zM1728 1245h8v3h-8zM1800 1245h8v3h-8zM1688 1251h8v3h-8zM1744 1250h8v3h-8zM1760 1251h8v3h-8zM2528 1250h8v3h-8zM2536 1251h8v3h-8zM2568 1251h8v3h-8zM1608 1257h8v3h-8zM1616 1257h8v3h-8zM1632 1257h8v3h-8zM1640 1256h8v3h-8zM2544 1256h8v3h-8zM1864 1263h8v3h-8zM1928 1263h8v3h-8zM1944 1263h8v3h-8zM1784 1292h8v3h-8zM1360 1311h8v3h-8zM1368 1311h8v3h-8zM1376 1311h8v3h-8zM1384 1311h8v3h-8zM1792 1311h8v3h-8zM1896 1311h8v3h-8zM1368 1317h8v3h-8zM1376 1317h8v3h-8zM1896 1317h8v3h-8zM952 1329h8v3h-8zM968 1329h8v3h-8zM1800 1329h8v3h-8zM920 1335h8v3h-8zM944 1335h8v3h-8zM1736 1335h8v3h-8zM1744 1334h8v3h-8zM1784 1335h8v3h-8zM888 1341h8v3h-8zM920 1341h8v3h-8zM928 1341h8v3h-8zM952 1341h8v3h-8zM1736 1341h8v3h-8zM1744 1341h8v3h-8zM896 1347h8v3h-8zM912 1346h8v3h-8zM968 1346h8v3h-8zM976 1347h8v3h-8zM1008 1347h8v3h-8zM1016 1347h8v3h-8zM1736 1347h8v3h-8zM896 1353h8v3h-8zM952 1353h8v3h-8zM968 1352h8v3h-8zM1136 1353h8v3h-8zM928 1359h8v3h-8zM936 1359h8v3h-8zM960 1359h8v3h-8zM976 1359h8v3h-8zM2224 1359h8v3h-8zM920 1364h8v3h-8zM928 1365h8v3h-8zM1176 1365h8v3h-8zM2224 1365h8v3h-8zM984 1371h8v3h-8zM1136 1371h8v3h-8zM1144 1371h8v3h-8zM1176 1377h8v3h-8zM2208 1377h8v3h-8zM2248 1377h8v3h-8zM1136 1383h8v3h-8zM1160 1383h8v3h-8zM2176 1383h8v3h-8zM2240 1383h8v3h-8zM1104 1389h8v3h-8zM1776 1389h8v3h-8zM2136 1389h8v3h-8zM2144 1389h8v3h-8zM2216 1389h8v3h-8zM2240 1389h8v3h-8zM1160 1395h8v3h-8zM1528 1395h8v3h-8zM1552 1394h8v3h-8zM1608 1395h8v3h-8zM1672 1395h8v3h-8zM2144 1394h8v3h-8zM2232 1395h8v3h-8zM1144 1401h8v3h-8zM1168 1401h8v3h-8zM1528 1400h8v3h-8zM1544 1401h8v3h-8zM1664 1401h8v3h-8zM1720 1400h8v3h-8zM1736 1401h8v3h-8zM1760 1401h8v3h-8zM1768 1400h8v3h-8zM1792 1401h8v3h-8zM1040 1407h8v3h-8zM1088 1407h8v3h-8zM1456 1407h8v3h-8zM1464 1407h8v3h-8zM1472 1407h8v3h-8zM1488 1407h8v3h-8zM1576 1406h8v3h-8zM1616 1406h8v3h-8zM1752 1407h8v3h-8zM1760 1407h8v3h-8zM1768 1407h8v3h-8zM1040 1413h8v3h-8zM1368 1413h8v3h-8zM1376 1413h8v3h-8zM1464 1413h8v3h-8zM1472 1413h8v3h-8zM1488 1413h8v3h-8zM1552 1413h8v3h-8zM1688 1413h8v3h-8zM1736 1413h8v3h-8zM1016 1419h8v3h-8zM1048 1418h8v3h-8zM1136 1419h8v3h-8zM1168 1419h8v3h-8zM1192 1419h8v3h-8zM1376 1418h8v3h-8zM2024 1419h8v3h-8zM2032 1418h8v3h-8zM1056 1425h8v3h-8zM1576 1425h8v3h-8zM1992 1425h8v3h-8zM2000 1425h8v3h-8zM2024 1425h8v3h-8zM1048 1431h8v3h-8zM1128 1430h8v3h-8zM1152 1431h8v3h-8zM2048 1431h8v3h-8zM1024 1437h8v3h-8zM1120 1436h8v3h-8zM2000 1443h8v3h-8zM2032 1449h8v3h-8zM944 1491h8v3h-8zM984 1551h8v3h-8zM992 1550h8v3h-8zM992 1557h8v3h-8zM944 1569h8v3h-8zM944 1575h8v3h-8z"/><path fill="#f0b838" d="M1392 470h8v3h-8zM1400 469h8v3h-8zM1408 476h8v3h-8zM2384 686h8v3h-8zM2376 692h8v3h-8zM1240 740h8v3h-8zM2544 752h8v3h-8zM1472 794h8v3h-8zM1488 794h8v3h-8zM1480 800h8v3h-8zM1632 812h8v3h-8zM1640 812h8v3h-8zM1648 812h8v3h-8zM1664 818h8v3h-8zM1616 824h8v3h-8zM1632 823h8v3h-8zM1648 824h8v3h-8zM1664 824h8v3h-8zM1672 824h8v3h-8zM1648 830h8v3h-8zM1648 836h8v3h-8zM1984 884h8v3h-8zM1648 890h8v3h-8zM1688 890h8v3h-8zM1992 890h8v3h-8zM1624 896h8v3h-8zM2280 895h8v3h-8zM2304 896h8v3h-8zM1608 902h8v3h-8zM1632 901h8v3h-8zM1648 902h8v3h-8zM1624 908h8v3h-8zM1672 907h8v3h-8zM1616 914h8v3h-8zM1400 932h8v3h-8zM1392 938h8v3h-8zM1768 961h8v3h-8zM1768 968h8v3h-8zM1824 974h8v3h-8zM1808 979h8v3h-8zM1864 980h8v3h-8zM1872 979h8v3h-8zM1736 986h8v3h-8zM1760 986h8v3h-8zM1776 985h8v3h-8zM1824 986h8v3h-8zM1680 992h8v3h-8zM1704 992h8v3h-8zM1936 992h8v3h-8zM1704 997h8v3h-8zM1744 997h8v3h-8zM1752 998h8v3h-8zM1792 997h8v3h-8zM1824 998h8v3h-8zM1848 998h8v3h-8zM1928 998h8v3h-8zM1696 1004h8v3h-8zM1744 1003h8v3h-8zM1768 1003h8v3h-8zM1784 1004h8v3h-8zM1800 1004h8v3h-8zM1824 1004h8v3h-8zM1832 1004h8v3h-8zM1840 1004h8v3h-8zM1864 1004h8v3h-8zM2064 1004h8v3h-8zM2096 1003h8v3h-8zM912 1010h8v3h-8zM1656 1010h8v3h-8zM1664 1010h8v3h-8zM1672 1010h8v3h-8zM1680 1010h8v3h-8zM1720 1009h8v3h-8zM1752 1009h8v3h-8zM1792 1010h8v3h-8zM1824 1010h8v3h-8zM1848 1010h8v3h-8zM1912 1010h8v3h-8zM2096 1009h8v3h-8zM2112 1010h8v3h-8zM896 1016h8v3h-8zM1624 1016h8v3h-8zM1768 1015h8v3h-8zM1824 1015h8v3h-8zM1864 1016h8v3h-8zM1912 1016h8v3h-8zM2112 1016h8v3h-8zM928 1022h8v3h-8zM936 1022h8v3h-8zM1624 1022h8v3h-8zM1648 1022h8v3h-8zM1672 1022h8v3h-8zM1696 1021h8v3h-8zM1704 1022h8v3h-8zM1728 1021h8v3h-8zM1736 1021h8v3h-8zM1776 1022h8v3h-8zM1784 1022h8v3h-8zM1800 1022h8v3h-8zM1840 1021h8v3h-8zM1912 1022h8v3h-8zM1920 1022h8v3h-8zM1944 1022h8v3h-8zM2112 1022h8v3h-8zM2176 1022h8v3h-8zM904 1028h8v3h-8zM912 1028h8v3h-8zM920 1028h8v3h-8zM1624 1027h8v3h-8zM1712 1028h8v3h-8zM1720 1027h8v3h-8zM1736 1028h8v3h-8zM1744 1028h8v3h-8zM1760 1028h8v3h-8zM1784 1027h8v3h-8zM1840 1027h8v3h-8zM1856 1027h8v3h-8zM1872 1027h8v3h-8zM1912 1027h8v3h-8zM1944 1028h8v3h-8zM1960 1028h8v3h-8zM2192 1027h8v3h-8zM920 1034h8v3h-8zM1592 1033h8v3h-8zM1632 1033h8v3h-8zM1648 1034h8v3h-8zM1688 1033h8v3h-8zM1704 1034h8v3h-8zM1720 1034h8v3h-8zM1784 1034h8v3h-8zM1824 1033h8v3h-8zM1848 1034h8v3h-8zM2080 1034h8v3h-8zM2088 1034h8v3h-8zM2200 1034h8v3h-8zM2264 1034h8v3h-8zM1648 1039h8v3h-8zM1656 1040h8v3h-8zM1672 1040h8v3h-8zM1728 1039h8v3h-8zM1752 1040h8v3h-8zM1784 1040h8v3h-8zM1800 1040h8v3h-8zM1848 1040h8v3h-8zM1856 1039h8v3h-8zM1864 1040h8v3h-8zM1896 1040h8v3h-8zM1920 1040h8v3h-8zM1944 1040h8v3h-8zM2024 1040h8v3h-8zM2216 1039h8v3h-8zM1528 1046h8v3h-8zM1592 1046h8v3h-8zM1624 1046h8v3h-8zM1704 1046h8v3h-8zM1712 1046h8v3h-8zM1720 1045h8v3h-8zM1808 1046h8v3h-8zM1904 1045h8v3h-8zM1912 1046h8v3h-8zM1928 1046h8v3h-8zM1992 1046h8v3h-8zM2240 1045h8v3h-8zM2248 1046h8v3h-8zM1624 1052h8v3h-8zM1640 1052h8v3h-8zM1648 1051h8v3h-8zM1656 1051h8v3h-8zM1712 1052h8v3h-8zM1720 1051h8v3h-8zM1736 1052h8v3h-8zM1776 1052h8v3h-8zM1816 1052h8v3h-8zM1840 1051h8v3h-8zM1848 1052h8v3h-8zM1856 1051h8v3h-8zM1896 1052h8v3h-8zM1992 1052h8v3h-8zM2048 1051h8v3h-8zM1576 1058h8v3h-8zM1632 1057h8v3h-8zM1704 1057h8v3h-8zM1712 1058h8v3h-8zM1720 1058h8v3h-8zM1752 1057h8v3h-8zM1760 1058h8v3h-8zM1776 1058h8v3h-8zM1792 1058h8v3h-8zM1808 1058h8v3h-8zM1848 1058h8v3h-8zM1856 1057h8v3h-8zM1872 1058h8v3h-8zM1880 1058h8v3h-8zM1912 1057h8v3h-8zM1928 1058h8v3h-8zM1960 1058h8v3h-8zM1976 1057h8v3h-8zM1984 1058h8v3h-8zM2008 1057h8v3h-8zM2048 1058h8v3h-8zM1280 1064h8v3h-8zM1336 1064h8v3h-8zM1616 1064h8v3h-8zM1648 1064h8v3h-8zM1696 1064h8v3h-8zM1776 1064h8v3h-8zM1792 1064h8v3h-8zM1832 1063h8v3h-8zM1880 1064h8v3h-8zM1896 1064h8v3h-8zM1920 1064h8v3h-8zM2024 1064h8v3h-8zM2032 1064h8v3h-8zM1288 1070h8v3h-8zM1320 1070h8v3h-8zM1344 1070h8v3h-8zM1568 1070h8v3h-8zM1600 1070h8v3h-8zM1640 1070h8v3h-8zM1680 1070h8v3h-8zM1720 1070h8v3h-8zM1760 1070h8v3h-8zM1784 1070h8v3h-8zM1800 1070h8v3h-8zM1824 1070h8v3h-8zM1840 1070h8v3h-8zM1848 1069h8v3h-8zM1888 1070h8v3h-8zM1896 1069h8v3h-8zM1904 1070h8v3h-8zM1960 1070h8v3h-8zM1968 1070h8v3h-8zM2000 1070h8v3h-8zM2024 1070h8v3h-8zM2032 1070h8v3h-8zM2048 1069h8v3h-8zM2064 1070h8v3h-8zM1288 1075h8v3h-8zM1296 1076h8v3h-8zM1312 1075h8v3h-8zM1632 1076h8v3h-8zM1672 1075h8v3h-8zM1696 1076h8v3h-8zM1712 1076h8v3h-8zM1720 1076h8v3h-8zM1752 1075h8v3h-8zM1832 1075h8v3h-8zM1864 1075h8v3h-8zM1872 1076h8v3h-8zM1880 1076h8v3h-8zM1904 1076h8v3h-8zM1920 1076h8v3h-8zM1960 1076h8v3h-8zM1968 1076h8v3h-8zM2008 1076h8v3h-8zM2016 1075h8v3h-8zM2024 1076h8v3h-8zM1272 1082h8v3h-8zM1312 1082h8v3h-8zM1336 1082h8v3h-8zM1624 1081h8v3h-8zM1632 1081h8v3h-8zM1720 1082h8v3h-8zM1728 1082h8v3h-8zM1776 1082h8v3h-8zM1808 1082h8v3h-8zM1848 1081h8v3h-8zM1872 1082h8v3h-8zM2000 1082h8v3h-8zM2024 1081h8v3h-8zM2080 1082h8v3h-8zM1744 1088h8v3h-8zM1864 1087h8v3h-8zM1904 1088h8v3h-8zM1920 1088h8v3h-8zM2064 1087h8v3h-8zM1728 1094h8v3h-8zM1736 1093h8v3h-8zM1744 1094h8v3h-8zM1760 1094h8v3h-8zM1768 1094h8v3h-8zM1784 1094h8v3h-8zM1792 1093h8v3h-8zM2136 1094h8v3h-8zM2152 1094h8v3h-8zM1632 1100h8v3h-8zM1728 1099h8v3h-8zM1752 1099h8v3h-8zM1760 1100h8v3h-8zM1784 1100h8v3h-8zM1896 1100h8v3h-8zM1928 1100h8v3h-8zM1648 1106h8v3h-8zM1680 1106h8v3h-8zM1704 1105h8v3h-8zM1712 1106h8v3h-8zM1728 1106h8v3h-8zM1856 1106h8v3h-8zM1872 1106h8v3h-8zM2104 1106h8v3h-8zM1760 1112h8v3h-8zM1784 1112h8v3h-8zM1840 1112h8v3h-8zM2000 1112h8v3h-8zM2008 1112h8v3h-8zM2080 1112h8v3h-8zM2104 1112h8v3h-8zM2136 1111h8v3h-8zM2152 1112h8v3h-8zM1664 1118h8v3h-8zM1688 1118h8v3h-8zM1800 1118h8v3h-8zM2096 1118h8v3h-8zM2128 1118h8v3h-8zM2240 1117h8v3h-8zM2248 1118h8v3h-8zM1784 1124h8v3h-8zM1200 1136h8v3h-8zM1224 1142h8v3h-8zM1216 1147h8v3h-8zM2152 1148h8v3h-8zM1208 1153h8v3h-8zM2144 1154h8v3h-8zM1200 1159h8v3h-8zM1232 1159h8v3h-8zM1400 1160h8v3h-8zM2128 1160h8v3h-8zM1392 1166h8v3h-8zM1504 1166h8v3h-8zM1600 1166h8v3h-8zM1608 1166h8v3h-8zM1744 1184h8v3h-8zM2560 1190h8v3h-8zM2376 1208h8v3h-8zM1312 1220h8v3h-8zM2352 1219h8v3h-8zM1304 1226h8v3h-8zM1312 1226h8v3h-8zM1728 1226h8v3h-8zM1752 1226h8v3h-8zM1824 1226h8v3h-8zM1832 1226h8v3h-8zM1992 1226h8v3h-8zM2352 1226h8v3h-8zM1720 1238h8v3h-8zM2536 1238h8v3h-8zM2544 1237h8v3h-8zM1712 1244h8v3h-8zM2536 1244h8v3h-8zM1704 1250h8v3h-8zM2568 1256h8v3h-8zM1936 1262h8v3h-8zM1792 1292h8v3h-8zM1800 1292h8v3h-8zM1784 1297h8v3h-8zM1792 1298h8v3h-8zM1792 1303h8v3h-8zM1776 1310h8v3h-8zM944 1328h8v3h-8zM1784 1328h8v3h-8zM1792 1328h8v3h-8zM912 1334h8v3h-8zM936 1334h8v3h-8zM960 1334h8v3h-8zM1000 1334h8v3h-8zM1800 1334h8v3h-8zM960 1340h8v3h-8zM1800 1340h8v3h-8zM1744 1346h8v3h-8zM1752 1346h8v3h-8zM1176 1358h8v3h-8zM1152 1364h8v3h-8zM1152 1370h8v3h-8zM1144 1376h8v3h-8zM2136 1382h8v3h-8zM2232 1382h8v3h-8zM1080 1387h8v3h-8zM1712 1388h8v3h-8zM2152 1388h8v3h-8zM2192 1388h8v3h-8zM2224 1388h8v3h-8zM2232 1388h8v3h-8zM1704 1393h8v3h-8zM1712 1393h8v3h-8zM1760 1394h8v3h-8zM2136 1394h8v3h-8zM1072 1399h8v3h-8zM1160 1400h8v3h-8zM1552 1400h8v3h-8zM1680 1399h8v3h-8zM1688 1400h8v3h-8zM1712 1400h8v3h-8zM1744 1399h8v3h-8zM1752 1399h8v3h-8zM1776 1399h8v3h-8zM2208 1400h8v3h-8zM1064 1406h8v3h-8zM1112 1405h8v3h-8zM1120 1406h8v3h-8zM1152 1406h8v3h-8zM1552 1405h8v3h-8zM1560 1406h8v3h-8zM1592 1406h8v3h-8zM1600 1406h8v3h-8zM1728 1406h8v3h-8zM1736 1406h8v3h-8zM1064 1412h8v3h-8zM1088 1411h8v3h-8zM1104 1412h8v3h-8zM1112 1412h8v3h-8zM1144 1412h8v3h-8zM1608 1412h8v3h-8zM1744 1411h8v3h-8zM1072 1418h8v3h-8zM1112 1418h8v3h-8zM1152 1418h8v3h-8zM1352 1418h8v3h-8zM1360 1417h8v3h-8zM1368 1418h8v3h-8zM1552 1418h8v3h-8zM1560 1417h8v3h-8zM1032 1424h8v3h-8zM1080 1423h8v3h-8zM1112 1423h8v3h-8zM1128 1423h8v3h-8zM1376 1424h8v3h-8zM1104 1429h8v3h-8zM1112 1430h8v3h-8zM2016 1429h8v3h-8zM1088 1436h8v3h-8zM1104 1436h8v3h-8zM1136 1442h8v3h-8zM2016 1447h8v3h-8zM944 1483h8v3h-8z"/><path fill="#f09232" d="M1400 463h8v3h-8zM1448 613h8v3h-8zM1456 613h8v3h-8zM1456 618h8v3h-8zM1640 823h8v3h-8zM1672 829h8v3h-8zM1632 889h8v3h-8zM1984 889h8v3h-8zM1664 895h8v3h-8zM1992 895h8v3h-8zM2296 895h8v3h-8zM1624 900h8v3h-8zM1640 901h8v3h-8zM1656 901h8v3h-8zM2288 901h8v3h-8zM1632 906h8v3h-8zM1656 919h8v3h-8zM1792 973h8v3h-8zM1816 973h8v3h-8zM1832 973h8v3h-8zM1696 991h8v3h-8zM1712 991h8v3h-8zM1808 990h8v3h-8zM1832 991h8v3h-8zM1840 991h8v3h-8zM1776 997h8v3h-8zM1784 997h8v3h-8zM1816 997h8v3h-8zM1888 997h8v3h-8zM1920 996h8v3h-8zM936 1003h8v3h-8zM1712 1003h8v3h-8zM1776 1002h8v3h-8zM1808 1003h8v3h-8zM1688 1009h8v3h-8zM1728 1009h8v3h-8zM1776 1009h8v3h-8zM1840 1008h8v3h-8zM1872 1009h8v3h-8zM2088 1009h8v3h-8zM912 1015h8v3h-8zM928 1015h8v3h-8zM1712 1015h8v3h-8zM1752 1015h8v3h-8zM1784 1015h8v3h-8zM1856 1015h8v3h-8zM1920 1015h8v3h-8zM2104 1015h8v3h-8zM912 1021h8v3h-8zM920 1020h8v3h-8zM1768 1021h8v3h-8zM1792 1020h8v3h-8zM1608 1027h8v3h-8zM1648 1027h8v3h-8zM1688 1026h8v3h-8zM1768 1027h8v3h-8zM1776 1026h8v3h-8zM1792 1027h8v3h-8zM1800 1027h8v3h-8zM1816 1027h8v3h-8zM1832 1026h8v3h-8zM1848 1027h8v3h-8zM1880 1027h8v3h-8zM1696 1032h8v3h-8zM1736 1033h8v3h-8zM1744 1032h8v3h-8zM1752 1033h8v3h-8zM1760 1033h8v3h-8zM1768 1033h8v3h-8zM1816 1032h8v3h-8zM1832 1032h8v3h-8zM1840 1033h8v3h-8zM1880 1032h8v3h-8zM2024 1033h8v3h-8zM2232 1033h8v3h-8zM1664 1039h8v3h-8zM1688 1038h8v3h-8zM1696 1039h8v3h-8zM1704 1039h8v3h-8zM1712 1038h8v3h-8zM1736 1039h8v3h-8zM1768 1039h8v3h-8zM1776 1038h8v3h-8zM1792 1038h8v3h-8zM1832 1039h8v3h-8zM1840 1039h8v3h-8zM1888 1039h8v3h-8zM2256 1038h8v3h-8zM1608 1044h8v3h-8zM1664 1045h8v3h-8zM1696 1045h8v3h-8zM1728 1045h8v3h-8zM1736 1045h8v3h-8zM1744 1045h8v3h-8zM1752 1045h8v3h-8zM1776 1044h8v3h-8zM1792 1044h8v3h-8zM1824 1045h8v3h-8zM1840 1045h8v3h-8zM1848 1044h8v3h-8zM1872 1045h8v3h-8zM1920 1045h8v3h-8zM1960 1045h8v3h-8zM1552 1051h8v3h-8zM1672 1050h8v3h-8zM1680 1051h8v3h-8zM1696 1051h8v3h-8zM1728 1050h8v3h-8zM1744 1051h8v3h-8zM1760 1051h8v3h-8zM1768 1051h8v3h-8zM1784 1051h8v3h-8zM1800 1051h8v3h-8zM1832 1051h8v3h-8zM1872 1050h8v3h-8zM1880 1050h8v3h-8zM2008 1051h8v3h-8zM2016 1051h8v3h-8zM2032 1051h8v3h-8zM2040 1051h8v3h-8zM1624 1057h8v3h-8zM1648 1057h8v3h-8zM1696 1057h8v3h-8zM1744 1056h8v3h-8zM1784 1057h8v3h-8zM1800 1057h8v3h-8zM1816 1057h8v3h-8zM1824 1057h8v3h-8zM1832 1057h8v3h-8zM2000 1057h8v3h-8zM2016 1057h8v3h-8zM2032 1057h8v3h-8zM1328 1063h8v3h-8zM1352 1063h8v3h-8zM1720 1062h8v3h-8zM1736 1062h8v3h-8zM1752 1062h8v3h-8zM1768 1063h8v3h-8zM1808 1063h8v3h-8zM1816 1062h8v3h-8zM1824 1063h8v3h-8zM1840 1063h8v3h-8zM1872 1063h8v3h-8zM1936 1062h8v3h-8zM1968 1063h8v3h-8zM1984 1063h8v3h-8zM2000 1063h8v3h-8zM2008 1063h8v3h-8zM1328 1069h8v3h-8zM1592 1069h8v3h-8zM1712 1069h8v3h-8zM1728 1069h8v3h-8zM1736 1069h8v3h-8zM1752 1068h8v3h-8zM1768 1069h8v3h-8zM1792 1068h8v3h-8zM1808 1069h8v3h-8zM1856 1069h8v3h-8zM1936 1069h8v3h-8zM1976 1069h8v3h-8zM1992 1069h8v3h-8zM2016 1068h8v3h-8zM1336 1075h8v3h-8zM1360 1075h8v3h-8zM1624 1075h8v3h-8zM1744 1074h8v3h-8zM1760 1074h8v3h-8zM1768 1074h8v3h-8zM1776 1074h8v3h-8zM1784 1074h8v3h-8zM1840 1075h8v3h-8zM1848 1075h8v3h-8zM1856 1075h8v3h-8zM1888 1075h8v3h-8zM1896 1075h8v3h-8zM1984 1075h8v3h-8zM2000 1075h8v3h-8zM1328 1080h8v3h-8zM1576 1081h8v3h-8zM1672 1081h8v3h-8zM1680 1081h8v3h-8zM1760 1081h8v3h-8zM1792 1081h8v3h-8zM1800 1081h8v3h-8zM1816 1081h8v3h-8zM1824 1080h8v3h-8zM1832 1081h8v3h-8zM1888 1081h8v3h-8zM1920 1081h8v3h-8zM1944 1080h8v3h-8zM2016 1081h8v3h-8zM2072 1081h8v3h-8zM1816 1086h8v3h-8zM1992 1087h8v3h-8zM2136 1087h8v3h-8zM1664 1093h8v3h-8zM1816 1093h8v3h-8zM1904 1093h8v3h-8zM2112 1092h8v3h-8zM2160 1093h8v3h-8zM1792 1098h8v3h-8zM1816 1099h8v3h-8zM1824 1099h8v3h-8zM1840 1098h8v3h-8zM1880 1099h8v3h-8zM2112 1098h8v3h-8zM2136 1099h8v3h-8zM2152 1099h8v3h-8zM1784 1105h8v3h-8zM2136 1105h8v3h-8zM2144 1105h8v3h-8zM2152 1105h8v3h-8zM2256 1104h8v3h-8zM1648 1111h8v3h-8zM2112 1117h8v3h-8zM2120 1116h8v3h-8zM2160 1117h8v3h-8zM2256 1117h8v3h-8zM2112 1123h8v3h-8zM2120 1123h8v3h-8zM1224 1146h8v3h-8zM2136 1147h8v3h-8zM2144 1147h8v3h-8zM2160 1147h8v3h-8zM1280 1153h8v3h-8zM2152 1153h8v3h-8zM1392 1159h8v3h-8zM1488 1165h8v3h-8zM1496 1165h8v3h-8zM1496 1171h8v3h-8zM1728 1218h8v3h-8zM1728 1230h8v3h-8zM1752 1231h8v3h-8zM2368 1231h8v3h-8zM1744 1237h8v3h-8zM1752 1237h8v3h-8zM1760 1237h8v3h-8zM2544 1243h8v3h-8zM2568 1243h8v3h-8zM2520 1249h8v3h-8zM888 1333h8v3h-8zM952 1333h8v3h-8zM976 1333h8v3h-8zM912 1339h8v3h-8zM944 1338h8v3h-8zM944 1345h8v3h-8zM912 1351h8v3h-8zM1152 1375h8v3h-8zM2192 1381h8v3h-8zM2208 1380h8v3h-8zM1744 1387h8v3h-8zM2208 1387h8v3h-8zM1128 1393h8v3h-8zM1720 1393h8v3h-8zM1744 1393h8v3h-8zM1560 1398h8v3h-8zM1568 1399h8v3h-8zM1576 1398h8v3h-8zM1704 1399h8v3h-8zM2224 1399h8v3h-8zM1056 1405h8v3h-8zM1072 1405h8v3h-8zM1136 1405h8v3h-8zM1120 1410h8v3h-8zM1136 1411h8v3h-8zM1360 1411h8v3h-8zM1544 1411h8v3h-8zM1560 1411h8v3h-8zM1568 1411h8v3h-8zM1576 1411h8v3h-8zM1600 1411h8v3h-8zM1056 1417h8v3h-8zM1080 1416h8v3h-8zM1120 1417h8v3h-8zM1128 1417h8v3h-8zM1088 1423h8v3h-8zM1104 1423h8v3h-8zM1120 1422h8v3h-8zM2032 1423h8v3h-8zM2008 1429h8v3h-8zM1080 1435h8v3h-8zM2016 1435h8v3h-8zM2024 1435h8v3h-8z"/><path fill="#e8622a" d="M1784 990h8v3h-8zM1808 1007h8v3h-8zM1744 1014h8v3h-8zM1776 1013h8v3h-8zM2088 1013h8v3h-8zM1752 1020h8v3h-8zM1816 1020h8v3h-8zM1824 1019h8v3h-8zM1864 1020h8v3h-8zM1728 1026h8v3h-8zM1752 1025h8v3h-8zM1824 1026h8v3h-8zM2224 1025h8v3h-8zM2232 1025h8v3h-8zM1672 1032h8v3h-8zM1712 1031h8v3h-8zM1776 1031h8v3h-8zM1792 1031h8v3h-8zM1800 1032h8v3h-8zM1808 1032h8v3h-8zM1864 1032h8v3h-8zM1872 1031h8v3h-8zM2224 1032h8v3h-8zM2240 1031h8v3h-8zM1744 1037h8v3h-8zM1760 1037h8v3h-8zM1824 1037h8v3h-8zM1872 1038h8v3h-8zM2208 1038h8v3h-8zM1632 1044h8v3h-8zM1760 1043h8v3h-8zM1768 1044h8v3h-8zM1784 1043h8v3h-8zM1800 1043h8v3h-8zM1816 1044h8v3h-8zM1832 1044h8v3h-8zM1792 1050h8v3h-8zM1808 1049h8v3h-8zM1824 1050h8v3h-8zM1864 1050h8v3h-8zM2024 1050h8v3h-8zM1840 1056h8v3h-8zM1864 1056h8v3h-8zM1896 1056h8v3h-8zM1744 1061h8v3h-8zM1784 1062h8v3h-8zM1856 1061h8v3h-8zM1888 1062h8v3h-8zM1976 1062h8v3h-8zM1992 1062h8v3h-8zM2016 1061h8v3h-8zM1744 1068h8v3h-8zM1776 1068h8v3h-8zM1816 1067h8v3h-8zM1872 1067h8v3h-8zM2008 1068h8v3h-8zM1328 1074h8v3h-8zM1680 1074h8v3h-8zM1808 1074h8v3h-8zM1944 1073h8v3h-8zM2040 1074h8v3h-8zM1752 1079h8v3h-8zM1768 1079h8v3h-8zM1784 1079h8v3h-8zM1880 1080h8v3h-8zM1792 1085h8v3h-8zM1832 1086h8v3h-8zM2120 1098h8v3h-8zM2112 1103h8v3h-8zM2128 1103h8v3h-8zM2096 1110h8v3h-8zM2128 1110h8v3h-8zM1728 1236h8v3h-8zM2552 1236h8v3h-8zM1744 1242h8v3h-8zM1752 1242h8v3h-8zM1720 1248h8v3h-8zM2544 1248h8v3h-8zM2216 1374h8v3h-8zM2216 1380h8v3h-8zM1736 1392h8v3h-8zM1728 1398h8v3h-8zM1568 1404h8v3h-8zM1584 1404h8v3h-8zM1072 1410h8v3h-8zM1096 1410h8v3h-8zM1104 1416h8v3h-8zM1096 1422h8v3h-8zM2016 1422h8v3h-8z"/><rect x="1104" y="515" width="8" height="30" fill="#c81c16"/><rect x="1104" y="511" width="8" height="4" fill="#ee3a26"/><rect x="1113" y="506" width="10" height="40" fill="#c81c16"/><rect x="1113" y="502" width="10" height="4" fill="#ee3a26"/><rect x="1123" y="504" width="10" height="42" fill="#c81c16"/><rect x="1123" y="500" width="10" height="4" fill="#ee3a26"/><rect x="1133" y="506" width="10" height="40" fill="#c81c16"/><rect x="1133" y="502" width="10" height="4" fill="#ee3a26"/><rect x="876" y="524" width="8" height="24" fill="#c81c16"/><rect x="876" y="520" width="8" height="4" fill="#ee3a26"/><rect x="1377" y="528" width="6" height="20" fill="#c81c16"/><rect x="1377" y="524" width="6" height="4" fill="#ee3a26"/><rect x="863" y="512" width="12" height="38" fill="#c81c16"/><rect x="863" y="508" width="12" height="4" fill="#ee3a26"/><rect x="1410" y="678" width="6" height="22" fill="#c81c16"/><rect x="1410" y="674" width="6" height="4" fill="#ee3a26"/><rect x="1669" y="1000" width="8" height="25" fill="#c81c16"/><rect x="1669" y="996" width="8" height="4" fill="#ee3a26"/><rect x="1862" y="1019" width="7" height="13" fill="#c81c16"/><rect x="1862" y="1015" width="7" height="4" fill="#ee3a26"/><rect x="1817" y="1021" width="8" height="19" fill="#c81c16"/><rect x="1817" y="1017" width="8" height="4" fill="#ee3a26"/><rect x="1846" y="1030" width="9" height="25" fill="#c81c16"/><rect x="1846" y="1026" width="9" height="4" fill="#ee3a26"/><rect x="1616" y="1034" width="7" height="23" fill="#c81c16"/><rect x="1616" y="1030" width="7" height="4" fill="#ee3a26"/><rect x="1734" y="1060" width="8" height="17" fill="#c81c16"/><rect x="1734" y="1056" width="8" height="4" fill="#ee3a26"/><rect x="1776" y="1077" width="8" height="36" fill="#c81c16"/><rect x="1776" y="1073" width="8" height="4" fill="#ee3a26"/><rect x="1785" y="1083" width="8" height="30" fill="#c81c16"/><rect x="1785" y="1079" width="8" height="4" fill="#ee3a26"/><rect x="1734" y="1090" width="9" height="38" fill="#c81c16"/><rect x="1734" y="1086" width="9" height="4" fill="#ee3a26"/><rect x="911" y="1336" width="10" height="26" fill="#c81c16"/><rect x="911" y="1332" width="10" height="4" fill="#ee3a26"/><rect x="1098" y="1398" width="10" height="30" fill="#c81c16"/><rect x="1098" y="1394" width="10" height="4" fill="#ee3a26"/></g></g></svg>
<div style="position:absolute;left:647px;top:304px;width:120px;height:120px;border-radius:50%;background:#2e2e2e;box-shadow:0 6px 14px rgba(0,0,0,0.45)"></div><div style="position:absolute;left:703px;top:336px;width:9.3px;height:19.4px;background:#e6e6e6"></div><div style="position:absolute;left:703px;top:372px;width:9.3px;height:19.4px;background:#e6e6e6"></div><div style="position:absolute;left:680px;top:359.2px;width:19px;height:9.3px;background:#e6e6e6"></div><div style="position:absolute;left:716px;top:359.2px;width:19px;height:9.3px;background:#e6e6e6"></div><svg width="66" height="66" style="position:absolute;left:674px;top:451px" viewBox="0 0 66 66">
<defs><clipPath id="av"><circle cx="33.2" cy="32.7" r="30.5"/></clipPath>
<radialGradient id="fc" cx="0.45" cy="0.45" r="0.6"><stop offset="0" stop-color="#e6c6b6"/><stop offset="1" stop-color="#c9a08c"/></radialGradient></defs>
<circle cx="33.2" cy="32.7" r="32" fill="#151515"/>
<g clip-path="url(#av)">
<rect width="66" height="66" fill="#2f2b28"/>
<polygon points="0,22 30,12 34,36 0,46" fill="#1f2636"/>
<g fill="#3a4352"><rect x="6" y="30" width="2" height="10"/><rect x="12" y="28" width="2" height="10"/><rect x="18" y="26" width="2" height="10"/><rect x="24" y="24" width="2" height="10"/></g>
<polygon points="0,28 30,16 30,19 0,31" fill="#8a8e96"/>
<polygon points="0,46 34,34 40,66 0,66" fill="#8c8573"/>
<polygon points="54,20 66,18 66,60 52,60" fill="#7c776a"/>
<ellipse cx="40" cy="30" rx="13.5" ry="17" fill="url(#fc)"/>
<path d="M25 24 Q26 8 40 8 Q56 8 56 26 Q53 17 46 17 Q36 14 28 19 Z" fill="#6e4d38"/>
<rect x="31" y="24" width="5" height="1.6" fill="#7a5646"/><rect x="42" y="24" width="5" height="1.6" fill="#7a5646"/>
<path d="M33 37 Q40 42 47 36" stroke="#a06e62" stroke-width="1.6" fill="none"/>
<polygon points="32,44 48,44 50,58 30,58" fill="#cfa994"/>
<polygon points="4,66 8,54 26,48 40,55 50,46 62,52 66,66" fill="#e5e7ee"/>
</g>
<circle cx="33.2" cy="32.7" r="30.5" fill="none" stroke="#8e8d86" stroke-width="1.4"/>
</svg><svg width="170" height="44" style="position:absolute;left:622px;top:1844px" viewBox="0 0 170 44">
<circle cx="20.6" cy="22" r="16.5" fill="#f2f2f2" stroke="#111" stroke-width="2"/>
<path d="M13 30 L13 21 Q13 12 22 12 Q30 12 30 20 Q30 30 20 30 Z" fill="#1b1b1b"/>
<path d="M20 15 L21.5 19.5 L26 21 L21.5 22.5 L20 27 L18.5 22.5 L14 21 L18.5 19.5 Z" fill="#f2f2f2"/>
<text x="44" y="30.3" font-family="Liberation Sans, sans-serif" font-size="27" font-weight="700" fill="#f4f4f4" stroke="#111" stroke-width="3" paint-order="stroke" textLength="110" lengthAdjust="spacingAndGlyphs">mapbox</text>
</svg>
<div style="position:absolute;left:2583px;top:262px;width:645px;height:1636px;background:#2f2f2f"></div><div class="t" style="left:2619.5px;top:300.4px;font-size:22px;line-height:22px;color:#a4a4a4;font-weight:700;letter-spacing:-0.6px;">SCENARIO</div><div style="position:absolute;left:2619px;top:342px;width:605px;height:2px;background:#4c4c4c"></div><div style="position:absolute;left:2619px;top:362px;width:572px;height:100px;border-radius:13px;background:#1f1f1f"></div><div class="t" style="left:2638.0px;top:381.9px;font-size:27px;line-height:27px;color:#f4f4f4;font-weight:700;letter-spacing:-0.6px;">Normal Market</div><div class="t" style="left:2638.0px;top:418.8px;font-size:21.5px;line-height:21.5px;color:#9c9c9c;font-weight:400;letter-spacing:-0.2px;">Trends continue as previous</div><div style="position:absolute;left:3142px;top:378px;width:30px;height:30px;border-radius:50%;background:#4caf50"></div><div style="position:absolute;left:3151.5px;top:387.5px;width:11px;height:11px;border-radius:50%;background:#f4f4f4"></div><div class="t" style="left:2638.0px;top:499.6px;font-size:27px;line-height:27px;color:#f4f4f4;font-weight:700;letter-spacing:-0.6px;">Distress: Central Case</div><div class="t" style="left:2638.0px;top:537.6px;font-size:20.5px;line-height:20.5px;color:#9c9c9c;font-weight:400;letter-spacing:0px;">Price: -7%</div><div class="t" style="left:2787.0px;top:537.6px;font-size:20.5px;line-height:20.5px;color:#9c9c9c;font-weight:400;letter-spacing:0px;">Liquidity: -25%</div><div class="t" style="left:2982.0px;top:537.6px;font-size:20.5px;line-height:20.5px;color:#9c9c9c;font-weight:400;letter-spacing:0px;">Rent: -1%</div><div style="position:absolute;left:3142px;top:496px;width:30px;height:30px;border-radius:50%;background:#d2d2d2"></div><div class="t" style="left:2638.0px;top:617.1px;font-size:27px;line-height:27px;color:#f4f4f4;font-weight:700;letter-spacing:-0.6px;">Distress: 2008</div><div class="t" style="left:2638.0px;top:655.6px;font-size:20.5px;line-height:20.5px;color:#9c9c9c;font-weight:400;letter-spacing:0px;">Price: -18%</div><div class="t" style="left:2785.0px;top:655.6px;font-size:20.5px;line-height:20.5px;color:#9c9c9c;font-weight:400;letter-spacing:0px;">Liquidity: -40%</div><div style="position:absolute;left:3142px;top:614px;width:30px;height:30px;border-radius:50%;background:#d2d2d2"></div><div class="t" style="left:2620.0px;top:754.4px;font-size:22px;line-height:22px;color:#a4a4a4;font-weight:700;letter-spacing:-0.6px;">TARGET IRR</div><div style="position:absolute;left:2619px;top:796px;width:605px;height:2px;background:#4c4c4c"></div><div style="position:absolute;left:2619px;top:816px;width:572px;height:82px;border-radius:12px;background:#696969"></div><div style="position:absolute;left:2623px;top:820px;width:191px;height:74px;border-radius:11px;background:#1f1f1f"></div><div class="t" style="left:2318.0px;width:800px;text-align:center;top:847.1px;font-size:22px;line-height:22px;color:#4cc35a;font-weight:400;letter-spacing:0px;">20%</div><div class="t" style="left:2505.0px;width:800px;text-align:center;top:847.1px;font-size:22px;line-height:22px;color:#dadada;font-weight:400;letter-spacing:0px;">25%</div><div class="t" style="left:2696.0px;width:800px;text-align:center;top:847.1px;font-size:22px;line-height:22px;color:#dadada;font-weight:400;letter-spacing:0px;">30%</div><div class="t" style="left:2620.0px;top:942.1px;font-size:22px;line-height:22px;color:#a8a8a8;font-weight:700;letter-spacing:-0.5px;">Area</div><div class="t" style="right:649.5px;top:942.1px;font-size:22px;line-height:22px;color:#a8a8a8;font-weight:700;letter-spacing:-0.5px;">Est. Supply (18m)</div><div style="position:absolute;left:2619px;top:983.5px;width:572px;height:2px;background:#4c4c4c"></div><div style="position:absolute;left:2619px;top:1003.7px;width:572.0px;height:28.7px;background:#212121"></div><div class="t" style="left:2620.0px;top:1004.5px;font-size:22.6px;line-height:22.6px;color:#bcbcbc;font-weight:400;letter-spacing:0px;">London</div><div class="t" style="right:649.5px;top:1004.5px;font-size:22.6px;line-height:22.6px;color:#bcbcbc;font-weight:400;letter-spacing:0px;">£5.2bn</div><div style="position:absolute;left:2619px;top:1051.0px;width:172.7px;height:28.7px;background:#212121"></div><div class="t" style="left:2620.0px;top:1051.7px;font-size:22.6px;line-height:22.6px;color:#bcbcbc;font-weight:400;letter-spacing:0px;">Manchester</div><div class="t" style="right:649.5px;top:1051.7px;font-size:22.6px;line-height:22.6px;color:#bcbcbc;font-weight:400;letter-spacing:0px;">£1.5bn</div><div style="position:absolute;left:2619px;top:1098.2px;width:128.8px;height:28.7px;background:#212121"></div><div class="t" style="left:2620.0px;top:1099.0px;font-size:22.6px;line-height:22.6px;color:#bcbcbc;font-weight:400;letter-spacing:0px;">Liverpool</div><div class="t" style="right:649.5px;top:1099.0px;font-size:22.6px;line-height:22.6px;color:#bcbcbc;font-weight:400;letter-spacing:0px;">£1.2bn</div><div style="position:absolute;left:2619px;top:1145.5px;width:76.3px;height:28.7px;background:#212121"></div><div class="t" style="left:2620.0px;top:1146.2px;font-size:22.6px;line-height:22.6px;color:#bcbcbc;font-weight:400;letter-spacing:0px;">Bristol</div><div class="t" style="right:649.5px;top:1146.2px;font-size:22.6px;line-height:22.6px;color:#bcbcbc;font-weight:400;letter-spacing:0px;">£661m</div><div style="position:absolute;left:2619px;top:1192.7px;width:41.7px;height:28.7px;background:#212121"></div><div class="t" style="left:2620.0px;top:1193.5px;font-size:22.6px;line-height:22.6px;color:#bcbcbc;font-weight:400;letter-spacing:0px;">Salford</div><div class="t" style="right:649.5px;top:1193.5px;font-size:22.6px;line-height:22.6px;color:#bcbcbc;font-weight:400;letter-spacing:0px;">£312m</div><div style="position:absolute;left:2619px;top:1240.0px;width:37.9px;height:28.7px;background:#212121"></div><div class="t" style="left:2620.0px;top:1240.8px;font-size:22.6px;line-height:22.6px;color:#bcbcbc;font-weight:400;letter-spacing:0px;">Croydon</div><div class="t" style="right:649.5px;top:1240.8px;font-size:22.6px;line-height:22.6px;color:#bcbcbc;font-weight:400;letter-spacing:0px;">£259m</div><div style="position:absolute;left:2619px;top:1287.3px;width:32.7px;height:28.7px;background:#212121"></div><div class="t" style="left:2620.0px;top:1288.0px;font-size:22.6px;line-height:22.6px;color:#bcbcbc;font-weight:400;letter-spacing:0px;">Southampton</div><div class="t" style="right:649.5px;top:1288.0px;font-size:22.6px;line-height:22.6px;color:#bcbcbc;font-weight:400;letter-spacing:0px;">£252m</div><div style="position:absolute;left:2619px;top:1334.5px;width:28.9px;height:28.7px;background:#212121"></div><div class="t" style="left:2620.0px;top:1335.3px;font-size:22.6px;line-height:22.6px;color:#bcbcbc;font-weight:400;letter-spacing:0px;">Nottingham</div><div class="t" style="right:649.5px;top:1335.3px;font-size:22.6px;line-height:22.6px;color:#bcbcbc;font-weight:400;letter-spacing:0px;">£233m</div><div style="position:absolute;left:2619px;top:1381.8px;width:25.6px;height:28.7px;background:#212121"></div><div class="t" style="left:2620.0px;top:1382.5px;font-size:22.6px;line-height:22.6px;color:#bcbcbc;font-weight:400;letter-spacing:0px;">Portsmouth</div><div class="t" style="right:649.5px;top:1382.5px;font-size:22.6px;line-height:22.6px;color:#bcbcbc;font-weight:400;letter-spacing:0px;">£225m</div><div style="position:absolute;left:2619px;top:1778px;width:573px;height:82px;border-radius:12px;background:#52b058;box-shadow:0 2px 6px rgba(0,0,0,0.35)"></div><div class="t" style="left:2505.0px;width:800px;text-align:center;top:1807.8px;font-size:25px;line-height:25px;color:#ffffff;font-weight:700;letter-spacing:-0.6px;">Run Query</div>
</body></html>
